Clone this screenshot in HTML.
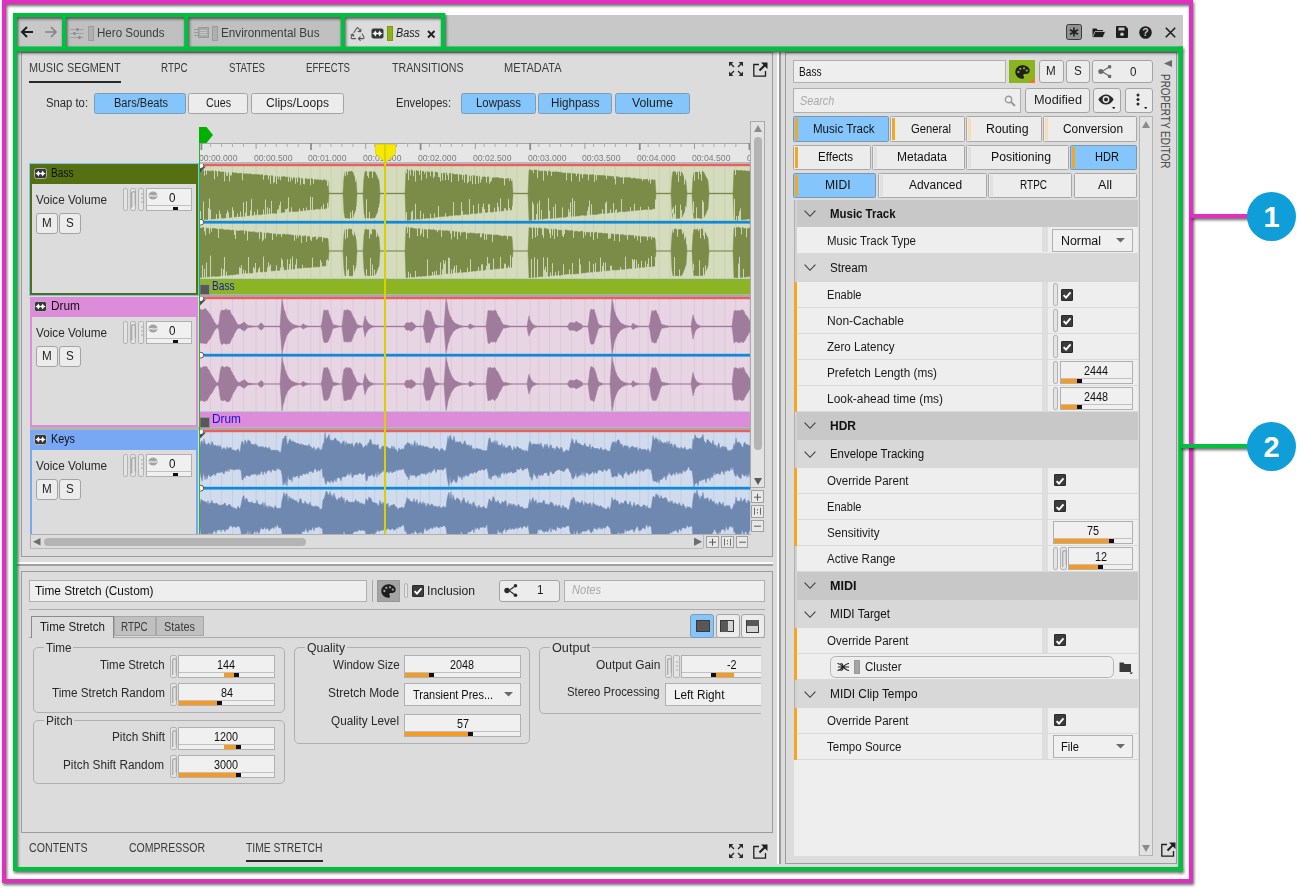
<!DOCTYPE html>
<html><head><meta charset="utf-8"><title>Music Segment Editor</title>
<style>
html,body{margin:0;padding:0;background:#fff;}
body{width:1297px;height:889px;position:relative;overflow:hidden;font-family:"Liberation Sans",sans-serif;}
.a{position:absolute;display:block;}
.t{white-space:nowrap;}
</style></head><body>
<div class="a" style="left:13px;top:15px;width:1170px;height:856px;background:#dcdcdc;"></div>
<div class="a" style="left:13px;top:15px;width:1170px;height:32px;background:#c8c8c8;"></div>
<div class="a" style="left:66px;top:17px;width:120px;height:30px;background:#c0c0c0;"></div>
<div class="a" style="left:188px;top:17px;width:154px;height:30px;background:#c0c0c0;"></div>
<div class="a" style="left:345px;top:17px;width:97px;height:30px;background:#dcdcdc;"></div>
<svg class="a" style="left:20px;top:25px;" width="14" height="14" viewBox="0 0 14 14"><path d="M13 7H2.5M7 2L2 7l5 5" fill="none" stroke="#1e1e1e" stroke-width="2"/></svg>
<svg class="a" style="left:44px;top:25px;" width="14" height="14" viewBox="0 0 14 14"><path d="M1 7h10.5M7 2l5 5-5 5" fill="none" stroke="#848484" stroke-width="1.6"/></svg>
<svg class="a" style="left:70px;top:26px;" width="14" height="14" viewBox="0 0 14 14"><g stroke="#a0a0a0" stroke-width="1" fill="#8a8a8a"><path d="M0.5 3.5h13M0.5 7.5h13M0.5 11.5h13" fill="none"/><rect x="6.5" y="2" width="2" height="3" stroke="none"/><rect x="3.5" y="6" width="2" height="3" stroke="none"/><rect x="8.5" y="10" width="2" height="3" stroke="none"/></g></svg>
<div class="a" style="left:88px;top:26px;width:6px;height:15px;background:#b0b0b0;border:1px solid #9c9c9c;box-sizing:border-box;"></div>
<div class="a t" style="left:97.00px;top:25.04px;font-size:12px;line-height:16px;color:#3c3c3c;transform:scaleX(0.9639);transform-origin:0 50%;">Hero Sounds</div>
<svg class="a" style="left:194px;top:26px;" width="15" height="13" viewBox="0 0 15 13"><g stroke="#9a9a9a" fill="none"><path d="M0 3.5h4M0 6.5h4M0 9.5h4" stroke-width="1"/><rect x="4.5" y="1.5" width="10" height="10" fill="#a8a8a8"/><path d="M6 4.5h7M6 6.5h7M6 8.5h7" stroke="#c8c8c8"/></g></svg>
<div class="a" style="left:212px;top:26px;width:6px;height:15px;background:#b0b0b0;border:1px solid #9c9c9c;box-sizing:border-box;"></div>
<div class="a t" style="left:221.00px;top:25.04px;font-size:12px;line-height:16px;color:#3c3c3c;transform:scaleX(0.9781);transform-origin:0 50%;">Environmental Bus</div>
<svg class="a" style="left:349.5px;top:26px;" width="16" height="15" viewBox="0 0 16 15"><g fill="none" stroke="#555" stroke-width="1.05" stroke-linecap="round" stroke-linejoin="round"><path d="M4 6.5L6.6 2.2Q7.5 1 8.4 2.2L10.6 5.6M10.9 3L10.7 5.8 8 5.5"/><path d="M12.2 8L13.9 11Q14.4 12.6 12.8 12.6H8.4M10.2 10.8L8.3 12.6l1.900 1.800"/><path d="M5.500 12.600H2.200Q0.600 12.600 1.300 11L2.900 8.200M0.800 8.900L3 8l0.900 2.200"/></g></svg>
<svg class="a" style="left:370.5px;top:28px;" width="13" height="11" viewBox="0 0 13 11"><rect x="0.500" y="0.500" width="12" height="10" rx="2" fill="#383838"/><path d="M4.3 2.5Q4.96 4.84 7.3 5.5Q4.96 6.16 4.3 8.5Q3.6399999999999997 6.16 1.2999999999999998 5.5Q3.6399999999999997 4.84 4.3 2.5ZM8.7 2.5Q9.36 4.84 11.7 5.5Q9.36 6.16 8.7 8.5Q8.04 6.16 5.699999999999999 5.5Q8.04 4.84 8.7 2.5Z" fill="#fff"/><rect x="3.500" y="5" width="6" height="1" fill="#fff"/></svg>
<div class="a" style="left:387px;top:26px;width:6px;height:15px;background:#8cb414;border:1px solid #7c9c10;box-sizing:border-box;"></div>
<div class="a t" style="left:396.00px;top:25.04px;font-size:12px;line-height:16px;color:#1e1e1e;transform:scaleX(0.8998);transform-origin:0 50%;font-style:italic;">Bass</div>
<svg class="a" style="left:427px;top:29.5px;" width="9" height="9" viewBox="0 0 9 9"><path d="M1 1l6.500 6.500M7.500 1l-6.500 6.500" stroke="#1e1e1e" stroke-width="1.800" fill="none"/></svg>
<div class="a" style="left:1066px;top:24px;width:16px;height:16px;background:#929292;border:1px solid #3a3a3a;box-sizing:border-box;border-radius:2.5px;"></div>
<svg class="a" style="left:1068px;top:26px;" width="12" height="12" viewBox="0 0 12 12"><path d="M6 1.5v9M2 3.8l8 4.4M10 3.8l-8 4.4" stroke="#1e1e1e" stroke-width="1.6" fill="none"/></svg>
<svg class="a" style="left:1091.5px;top:26.5px;" width="14" height="12" viewBox="0 0 14 12"><path d="M0.5 10.5V1.5h4l1.2 1.5h5.3v2" fill="#1e1e1e"/><path d="M0.5 10.5l2.5-6h10.5l-2.5 6z" fill="#1e1e1e" stroke="#c8c8c8" stroke-width="0.8"/></svg>
<svg class="a" style="left:1116px;top:26px;" width="12" height="12" viewBox="0 0 12 12"><path d="M0 1a1 1 0 011-1h8.5L12 2.5V11a1 1 0 01-1 1H1a1 1 0 01-1-1z" fill="#1e1e1e"/><rect x="2.5" y="1.5" width="6" height="3" fill="#c8c8c8"/><circle cx="6" cy="8.3" r="1.8" fill="#c8c8c8"/></svg>
<svg class="a" style="left:1139px;top:25.5px;" width="13" height="13" viewBox="0 0 13 13"><circle cx="6.5" cy="6.5" r="6.3" fill="#1e1e1e"/><text x="6.5" y="10.3" font-size="10.5" font-weight="bold" text-anchor="middle" fill="#c8c8c8" font-family="Liberation Sans, sans-serif">?</text></svg>
<svg class="a" style="left:1165px;top:26.5px;" width="11" height="11" viewBox="0 0 11 11"><path d="M0.8 0.8l9.4 9.4M10.2 0.8l-9.4 9.4" stroke="#1e1e1e" stroke-width="1.6" fill="none"/></svg>
<div class="a" style="left:21px;top:52px;width:752px;height:505px;border:1px solid #9c9c9c;box-sizing:border-box;"></div>
<div class="a t" style="left:28.80px;top:60.04px;font-size:12px;line-height:16px;color:#3a3a3a;transform:scaleX(0.9030);transform-origin:0 50%;">MUSIC SEGMENT</div>
<div class="a t" style="left:161.00px;top:60.04px;font-size:12px;line-height:16px;color:#3a3a3a;transform:scaleX(0.8166);transform-origin:0 50%;">RTPC</div>
<div class="a t" style="left:229.30px;top:60.04px;font-size:12px;line-height:16px;color:#3a3a3a;transform:scaleX(0.8022);transform-origin:0 50%;">STATES</div>
<div class="a t" style="left:306.20px;top:60.04px;font-size:12px;line-height:16px;color:#3a3a3a;transform:scaleX(0.8050);transform-origin:0 50%;">EFFECTS</div>
<div class="a t" style="left:392.00px;top:60.04px;font-size:12px;line-height:16px;color:#3a3a3a;transform:scaleX(0.8865);transform-origin:0 50%;">TRANSITIONS</div>
<div class="a t" style="left:504.00px;top:60.04px;font-size:12px;line-height:16px;color:#3a3a3a;transform:scaleX(0.9177);transform-origin:0 50%;">METADATA</div>
<div class="a" style="left:29px;top:80.5px;width:92px;height:2px;background:#2a2a2a;"></div>
<svg class="a" style="left:729px;top:62px;" width="14" height="14" viewBox="0 0 14 14"><g stroke="#2a2a2a" stroke-width="1.4" fill="none"><path d="M1 1l4 4M13 1l-4 4M1 13l4-4M13 13l-4-4"/></g><path d="M0 0h4.5L0 4.5zM14 0H9.5L14 4.5zM0 14h4.5L0 9.5zM14 14H9.5L14 9.5z" fill="#2a2a2a"/></svg>
<svg class="a" style="left:753px;top:61.5px;" width="15" height="15" viewBox="0 0 15 15"><path d="M6 2.500H0.800v11.700h11.700V9" fill="none" stroke="#1e1e1e" stroke-width="1.300"/><path d="M6.500 8.500L13 2" stroke="#1e1e1e" stroke-width="2" fill="none"/><path d="M8 0.500h6.500V7z" fill="#1e1e1e"/></svg>
<div class="a t" style="left:46.40px;top:95.04px;font-size:12px;line-height:16px;color:#2a2a2a;transform:scaleX(0.9402);transform-origin:0 50%;">Snap to:</div>
<div class="a" style="left:94px;top:93px;width:92px;height:21px;background:#84c6fc;border:1px solid #7e9cb8;box-sizing:border-box;border-radius:2.5px;"></div>
<div class="a t" style="left:113.50px;top:95.04px;font-size:12px;line-height:16px;color:#1e1e1e;transform:scaleX(0.9204);transform-origin:0 50%;">Bars/Beats</div>
<div class="a" style="left:188px;top:93px;width:60px;height:21px;background:#ececec;border:1px solid #a4a4a4;box-sizing:border-box;border-radius:2.5px;"></div>
<div class="a t" style="left:206.00px;top:95.04px;font-size:12px;line-height:16px;color:#1e1e1e;transform:scaleX(0.8924);transform-origin:0 50%;">Cues</div>
<div class="a" style="left:251px;top:93px;width:93px;height:21px;background:#ececec;border:1px solid #a4a4a4;box-sizing:border-box;border-radius:2.5px;"></div>
<div class="a t" style="left:266.00px;top:95.04px;font-size:12px;line-height:16px;color:#1e1e1e;transform:scaleX(1.0047);transform-origin:0 50%;">Clips/Loops</div>
<div class="a t" style="left:395.50px;top:95.04px;font-size:12px;line-height:16px;color:#2a2a2a;transform:scaleX(0.9266);transform-origin:0 50%;">Envelopes:</div>
<div class="a" style="left:461px;top:93px;width:75px;height:21px;background:#84c6fc;border:1px solid #7e9cb8;box-sizing:border-box;border-radius:2.5px;"></div>
<div class="a t" style="left:476.00px;top:95.04px;font-size:12px;line-height:16px;color:#1e1e1e;transform:scaleX(0.9502);transform-origin:0 50%;">Lowpass</div>
<div class="a" style="left:538px;top:93px;width:74px;height:21px;background:#84c6fc;border:1px solid #7e9cb8;box-sizing:border-box;border-radius:2.5px;"></div>
<div class="a t" style="left:551.25px;top:95.04px;font-size:12px;line-height:16px;color:#1e1e1e;transform:scaleX(0.9694);transform-origin:0 50%;">Highpass</div>
<div class="a" style="left:615px;top:93px;width:75px;height:21px;background:#84c6fc;border:1px solid #7e9cb8;box-sizing:border-box;border-radius:2.5px;"></div>
<div class="a t" style="left:632.15px;top:95.04px;font-size:12px;line-height:16px;color:#1e1e1e;transform:scaleX(1.0242);transform-origin:0 50%;">Volume</div>
<div class="a" style="left:199px;top:143px;width:551.5px;height:20px;background:#e6e6e6;"></div>
<div class="a" style="left:199px;top:143px;width:551.5px;height:1px;background:#a6a6a6;"></div>
<div class="a" style="left:199px;top:162px;width:551.5px;height:1.5px;background:#b8b8b8;"></div>
<svg class="a" style="left:199px;top:143px;" width="551.5" height="8" viewBox="0 0 551.5 8"><rect x="11.1" y="0" width="1" height="4" fill="#b0b0b0"/><rect x="22.1" y="0" width="1" height="4" fill="#b0b0b0"/><rect x="33.0" y="0" width="1" height="4" fill="#b0b0b0"/><rect x="44.0" y="0" width="1" height="4" fill="#b0b0b0"/><rect x="65.8" y="0" width="1" height="4" fill="#b0b0b0"/><rect x="76.8" y="0" width="1" height="4" fill="#b0b0b0"/><rect x="87.7" y="0" width="1" height="4" fill="#b0b0b0"/><rect x="98.7" y="0" width="1" height="4" fill="#b0b0b0"/><rect x="120.5" y="0" width="1" height="4" fill="#b0b0b0"/><rect x="131.5" y="0" width="1" height="4" fill="#b0b0b0"/><rect x="142.4" y="0" width="1" height="4" fill="#b0b0b0"/><rect x="153.4" y="0" width="1" height="4" fill="#b0b0b0"/><rect x="175.2" y="0" width="1" height="4" fill="#b0b0b0"/><rect x="186.2" y="0" width="1" height="4" fill="#b0b0b0"/><rect x="197.1" y="0" width="1" height="4" fill="#b0b0b0"/><rect x="208.1" y="0" width="1" height="4" fill="#b0b0b0"/><rect x="229.9" y="0" width="1" height="4" fill="#b0b0b0"/><rect x="240.9" y="0" width="1" height="4" fill="#b0b0b0"/><rect x="251.8" y="0" width="1" height="4" fill="#b0b0b0"/><rect x="262.8" y="0" width="1" height="4" fill="#b0b0b0"/><rect x="284.6" y="0" width="1" height="4" fill="#b0b0b0"/><rect x="295.6" y="0" width="1" height="4" fill="#b0b0b0"/><rect x="306.5" y="0" width="1" height="4" fill="#b0b0b0"/><rect x="317.5" y="0" width="1" height="4" fill="#b0b0b0"/><rect x="339.3" y="0" width="1" height="4" fill="#b0b0b0"/><rect x="350.3" y="0" width="1" height="4" fill="#b0b0b0"/><rect x="361.2" y="0" width="1" height="4" fill="#b0b0b0"/><rect x="372.2" y="0" width="1" height="4" fill="#b0b0b0"/><rect x="394.0" y="0" width="1" height="4" fill="#b0b0b0"/><rect x="405.0" y="0" width="1" height="4" fill="#b0b0b0"/><rect x="415.9" y="0" width="1" height="4" fill="#b0b0b0"/><rect x="426.9" y="0" width="1" height="4" fill="#b0b0b0"/><rect x="448.7" y="0" width="1" height="4" fill="#b0b0b0"/><rect x="459.7" y="0" width="1" height="4" fill="#b0b0b0"/><rect x="470.6" y="0" width="1" height="4" fill="#b0b0b0"/><rect x="481.6" y="0" width="1" height="4" fill="#b0b0b0"/><rect x="503.4" y="0" width="1" height="4" fill="#b0b0b0"/><rect x="514.4" y="0" width="1" height="4" fill="#b0b0b0"/><rect x="525.3" y="0" width="1" height="4" fill="#b0b0b0"/><rect x="536.3" y="0" width="1" height="4" fill="#b0b0b0"/><rect x="1.5" y="0" width="1.8" height="7" fill="#8c8c8c"/><rect x="56.6" y="0" width="1" height="6" fill="#9c9c9c"/><rect x="111.1" y="0" width="1.8" height="7" fill="#8c8c8c"/><rect x="166.2" y="0" width="1" height="6" fill="#9c9c9c"/><rect x="220.7" y="0" width="1.8" height="7" fill="#8c8c8c"/><rect x="275.8" y="0" width="1" height="6" fill="#9c9c9c"/><rect x="330.3" y="0" width="1.8" height="7" fill="#8c8c8c"/><rect x="385.4" y="0" width="1" height="6" fill="#9c9c9c"/><rect x="439.9" y="0" width="1.8" height="7" fill="#8c8c8c"/><rect x="495.0" y="0" width="1" height="6" fill="#9c9c9c"/><rect x="549.5" y="0" width="1.8" height="7" fill="#8c8c8c"/></svg>
<div class="a" style="left:199px;top:150px;width:551.5px;height:13px;overflow:hidden">
<div class="a t" style="left:-0.3px;top:1.6px;font-size:9px;line-height:12px;color:#7c7c7c;transform:scaleX(0.9600);transform-origin:0 50%">00:00.000</div>
<div class="a t" style="left:54.5px;top:1.6px;font-size:9px;line-height:12px;color:#7c7c7c;transform:scaleX(0.9600);transform-origin:0 50%">00:00.500</div>
<div class="a t" style="left:109.3px;top:1.6px;font-size:9px;line-height:12px;color:#7c7c7c;transform:scaleX(0.9600);transform-origin:0 50%">00:01.000</div>
<div class="a t" style="left:164.1px;top:1.6px;font-size:9px;line-height:12px;color:#7c7c7c;transform:scaleX(0.9600);transform-origin:0 50%">00:01.500</div>
<div class="a t" style="left:218.9px;top:1.6px;font-size:9px;line-height:12px;color:#7c7c7c;transform:scaleX(0.9600);transform-origin:0 50%">00:02.000</div>
<div class="a t" style="left:273.7px;top:1.6px;font-size:9px;line-height:12px;color:#7c7c7c;transform:scaleX(0.9600);transform-origin:0 50%">00:02.500</div>
<div class="a t" style="left:328.5px;top:1.6px;font-size:9px;line-height:12px;color:#7c7c7c;transform:scaleX(0.9600);transform-origin:0 50%">00:03.000</div>
<div class="a t" style="left:383.3px;top:1.6px;font-size:9px;line-height:12px;color:#7c7c7c;transform:scaleX(0.9600);transform-origin:0 50%">00:03.500</div>
<div class="a t" style="left:438.1px;top:1.6px;font-size:9px;line-height:12px;color:#7c7c7c;transform:scaleX(0.9600);transform-origin:0 50%">00:04.000</div>
<div class="a t" style="left:492.9px;top:1.6px;font-size:9px;line-height:12px;color:#7c7c7c;transform:scaleX(0.9600);transform-origin:0 50%">00:04.500</div>
<div class="a t" style="left:547.7px;top:1.6px;font-size:9px;line-height:12px;color:#7c7c7c;transform:scaleX(0.9600);transform-origin:0 50%">00:05.000</div>
</div>
<div class="a" style="left:0;top:0;width:1297px;height:534px;overflow:hidden">
<div class="a" style="left:29px;top:163.2px;width:170.3px;height:132.5px;background:#7cc4f4;"></div>
<div class="a" style="left:30px;top:164px;width:168px;height:130.5px;background:#566f10;"></div>
<div class="a" style="left:32px;top:184px;width:164px;height:108.5px;background:#dcdcdc;"></div>
<div class="a" style="left:30px;top:164px;width:168px;height:20px;background:#566f10;"></div>
<svg class="a" style="left:34px;top:167.8px;" width="13" height="11" viewBox="0 0 13 11"><rect x="0.500" y="0.500" width="12" height="10" rx="2" fill="#383838" stroke="#c8c8c8" stroke-width="0.800"/><path d="M4.3 2.5Q4.96 4.84 7.3 5.5Q4.96 6.16 4.3 8.5Q3.6399999999999997 6.16 1.2999999999999998 5.5Q3.6399999999999997 4.84 4.3 2.5ZM8.7 2.5Q9.36 4.84 11.7 5.5Q9.36 6.16 8.7 8.5Q8.04 6.16 5.699999999999999 5.5Q8.04 4.84 8.7 2.5Z" fill="#fff"/><rect x="3.500" y="5" width="6" height="1" fill="#fff"/></svg>
<div class="a t" style="left:51.40px;top:165.04px;font-size:12px;line-height:16px;color:#101010;transform:scaleX(0.8436);transform-origin:0 50%;">Bass</div>
<div class="a t" style="left:36.00px;top:192.04px;font-size:12px;line-height:16px;color:#2a2a2a;transform:scaleX(0.9764);transform-origin:0 50%;">Voice Volume</div>
<div class="a" style="left:123px;top:188px;width:5px;height:23px;background:#e4e4e4;border:1px solid #b4b4b4;box-sizing:border-box;border-radius:2px;"></div>
<div class="a" style="left:130px;top:188px;width:6px;height:23px;background:#e4e4e4;border:1px solid #b4b4b4;box-sizing:border-box;border-radius:2px;"></div>
<svg class="a" style="left:131px;top:191.3px;" width="5" height="16.4" viewBox="0 0 5 16.4"><path d="M0.7 16.4V2.5a1.8 1.8 0 013.6 0V14.399999999999999" fill="none" stroke="#a8a8a8" stroke-width="1.3"/></svg>
<div class="a" style="left:138px;top:188px;width:6px;height:23px;background:#e4e4e4;border:1px solid #b4b4b4;box-sizing:border-box;border-radius:2px;"></div>
<svg class="a" style="left:140.5px;top:193.3px;" width="2" height="12" viewBox="0 0 2 12"><path d="M0 1h2M0 5h2M0 9h2" stroke="#a8a8a8" stroke-width="1"/></svg>
<div class="a" style="left:146px;top:188px;width:46px;height:23px;background:#f0f0f0;border:1px solid #b0b0b0;box-sizing:border-box;"></div>
<div class="a" style="left:146.5px;top:205.3px;width:45px;height:1px;background:#c0c0c0;"></div>
<svg class="a" style="left:148px;top:191.3px;" width="10" height="9" viewBox="0 0 10 9"><ellipse cx="5" cy="4.5" rx="4.6" ry="4" fill="#a4a4a4"/><path d="M0.5 5.5C3 3 6 7 9.5 4" stroke="#e8e8e8" stroke-width="1.3" fill="none"/></svg>
<div class="a t" style="left:168.76px;top:190.04px;font-size:12px;line-height:16px;color:#101010;transform:scaleX(0.9700);transform-origin:0 50%;">0</div>
<div class="a" style="left:173px;top:206.6px;width:5px;height:3.7px;background:#101010;"></div>
<div class="a" style="left:36px;top:213px;width:22px;height:21px;background:#ececec;border:1px solid #a4a4a4;box-sizing:border-box;border-radius:3px;"></div>
<div class="a t" style="left:42.40px;top:215.04px;font-size:12px;line-height:16px;color:#1e1e1e;transform:scaleX(0.9700);transform-origin:0 50%;">M</div>
<div class="a" style="left:59px;top:213px;width:22px;height:21px;background:#ececec;border:1px solid #a4a4a4;box-sizing:border-box;border-radius:3px;"></div>
<div class="a t" style="left:66.42px;top:215.04px;font-size:12px;line-height:16px;color:#1e1e1e;transform:scaleX(0.9700);transform-origin:0 50%;">S</div>
<div class="a" style="left:30px;top:297px;width:168px;height:130px;background:#dc8cd8;"></div>
<div class="a" style="left:32px;top:317px;width:164px;height:108px;background:#dcdcdc;"></div>
<div class="a" style="left:30px;top:297px;width:168px;height:20px;background:#dc8cd8;"></div>
<svg class="a" style="left:34px;top:300.8px;" width="13" height="11" viewBox="0 0 13 11"><rect x="0.500" y="0.500" width="12" height="10" rx="2" fill="#383838" stroke="#c8c8c8" stroke-width="0.800"/><path d="M4.3 2.5Q4.96 4.84 7.3 5.5Q4.96 6.16 4.3 8.5Q3.6399999999999997 6.16 1.2999999999999998 5.5Q3.6399999999999997 4.84 4.3 2.5ZM8.7 2.5Q9.36 4.84 11.7 5.5Q9.36 6.16 8.7 8.5Q8.04 6.16 5.699999999999999 5.5Q8.04 4.84 8.7 2.5Z" fill="#fff"/><rect x="3.500" y="5" width="6" height="1" fill="#fff"/></svg>
<div class="a t" style="left:51.40px;top:298.04px;font-size:12px;line-height:16px;color:#101010;transform:scaleX(0.9883);transform-origin:0 50%;">Drum</div>
<div class="a t" style="left:36.00px;top:325.04px;font-size:12px;line-height:16px;color:#2a2a2a;transform:scaleX(0.9764);transform-origin:0 50%;">Voice Volume</div>
<div class="a" style="left:123px;top:321px;width:5px;height:23px;background:#e4e4e4;border:1px solid #b4b4b4;box-sizing:border-box;border-radius:2px;"></div>
<div class="a" style="left:130px;top:321px;width:6px;height:23px;background:#e4e4e4;border:1px solid #b4b4b4;box-sizing:border-box;border-radius:2px;"></div>
<svg class="a" style="left:131px;top:324.3px;" width="5" height="16.4" viewBox="0 0 5 16.4"><path d="M0.7 16.4V2.5a1.8 1.8 0 013.6 0V14.399999999999999" fill="none" stroke="#a8a8a8" stroke-width="1.3"/></svg>
<div class="a" style="left:138px;top:321px;width:6px;height:23px;background:#e4e4e4;border:1px solid #b4b4b4;box-sizing:border-box;border-radius:2px;"></div>
<svg class="a" style="left:140.5px;top:326.3px;" width="2" height="12" viewBox="0 0 2 12"><path d="M0 1h2M0 5h2M0 9h2" stroke="#a8a8a8" stroke-width="1"/></svg>
<div class="a" style="left:146px;top:321px;width:46px;height:23px;background:#f0f0f0;border:1px solid #b0b0b0;box-sizing:border-box;"></div>
<div class="a" style="left:146.5px;top:338.3px;width:45px;height:1px;background:#c0c0c0;"></div>
<svg class="a" style="left:148px;top:324.3px;" width="10" height="9" viewBox="0 0 10 9"><ellipse cx="5" cy="4.5" rx="4.6" ry="4" fill="#a4a4a4"/><path d="M0.5 5.5C3 3 6 7 9.5 4" stroke="#e8e8e8" stroke-width="1.3" fill="none"/></svg>
<div class="a t" style="left:168.76px;top:323.04px;font-size:12px;line-height:16px;color:#101010;transform:scaleX(0.9700);transform-origin:0 50%;">0</div>
<div class="a" style="left:173px;top:339.6px;width:5px;height:3.7px;background:#101010;"></div>
<div class="a" style="left:36px;top:346px;width:22px;height:21px;background:#ececec;border:1px solid #a4a4a4;box-sizing:border-box;border-radius:3px;"></div>
<div class="a t" style="left:42.40px;top:348.04px;font-size:12px;line-height:16px;color:#1e1e1e;transform:scaleX(0.9700);transform-origin:0 50%;">M</div>
<div class="a" style="left:59px;top:346px;width:22px;height:21px;background:#ececec;border:1px solid #a4a4a4;box-sizing:border-box;border-radius:3px;"></div>
<div class="a t" style="left:66.42px;top:348.04px;font-size:12px;line-height:16px;color:#1e1e1e;transform:scaleX(0.9700);transform-origin:0 50%;">S</div>
<div class="a" style="left:30px;top:430px;width:168px;height:110px;background:#78a8f4;"></div>
<div class="a" style="left:32px;top:450px;width:164px;height:90px;background:#dcdcdc;"></div>
<div class="a" style="left:30px;top:430px;width:168px;height:20px;background:#78a8f4;"></div>
<svg class="a" style="left:34px;top:433.8px;" width="13" height="11" viewBox="0 0 13 11"><rect x="0.500" y="0.500" width="12" height="10" rx="2" fill="#383838" stroke="#c8c8c8" stroke-width="0.800"/><path d="M4.3 2.5Q4.96 4.84 7.3 5.5Q4.96 6.16 4.3 8.5Q3.6399999999999997 6.16 1.2999999999999998 5.5Q3.6399999999999997 4.84 4.3 2.5ZM8.7 2.5Q9.36 4.84 11.7 5.5Q9.36 6.16 8.7 8.5Q8.04 6.16 5.699999999999999 5.5Q8.04 4.84 8.7 2.5Z" fill="#fff"/><rect x="3.500" y="5" width="6" height="1" fill="#fff"/></svg>
<div class="a t" style="left:51.40px;top:431.04px;font-size:12px;line-height:16px;color:#101010;transform:scaleX(0.8998);transform-origin:0 50%;">Keys</div>
<div class="a t" style="left:36.00px;top:458.04px;font-size:12px;line-height:16px;color:#2a2a2a;transform:scaleX(0.9764);transform-origin:0 50%;">Voice Volume</div>
<div class="a" style="left:123px;top:454px;width:5px;height:23px;background:#e4e4e4;border:1px solid #b4b4b4;box-sizing:border-box;border-radius:2px;"></div>
<div class="a" style="left:130px;top:454px;width:6px;height:23px;background:#e4e4e4;border:1px solid #b4b4b4;box-sizing:border-box;border-radius:2px;"></div>
<svg class="a" style="left:131px;top:457.3px;" width="5" height="16.4" viewBox="0 0 5 16.4"><path d="M0.7 16.4V2.5a1.8 1.8 0 013.6 0V14.399999999999999" fill="none" stroke="#a8a8a8" stroke-width="1.3"/></svg>
<div class="a" style="left:138px;top:454px;width:6px;height:23px;background:#e4e4e4;border:1px solid #b4b4b4;box-sizing:border-box;border-radius:2px;"></div>
<svg class="a" style="left:140.5px;top:459.3px;" width="2" height="12" viewBox="0 0 2 12"><path d="M0 1h2M0 5h2M0 9h2" stroke="#a8a8a8" stroke-width="1"/></svg>
<div class="a" style="left:146px;top:454px;width:46px;height:23px;background:#f0f0f0;border:1px solid #b0b0b0;box-sizing:border-box;"></div>
<div class="a" style="left:146.5px;top:471.3px;width:45px;height:1px;background:#c0c0c0;"></div>
<svg class="a" style="left:148px;top:457.3px;" width="10" height="9" viewBox="0 0 10 9"><ellipse cx="5" cy="4.5" rx="4.6" ry="4" fill="#a4a4a4"/><path d="M0.5 5.5C3 3 6 7 9.5 4" stroke="#e8e8e8" stroke-width="1.3" fill="none"/></svg>
<div class="a t" style="left:168.76px;top:456.04px;font-size:12px;line-height:16px;color:#101010;transform:scaleX(0.9700);transform-origin:0 50%;">0</div>
<div class="a" style="left:173px;top:472.6px;width:5px;height:3.7px;background:#101010;"></div>
<div class="a" style="left:36px;top:479px;width:22px;height:21px;background:#ececec;border:1px solid #a4a4a4;box-sizing:border-box;border-radius:3px;"></div>
<div class="a t" style="left:42.40px;top:481.04px;font-size:12px;line-height:16px;color:#1e1e1e;transform:scaleX(0.9700);transform-origin:0 50%;">M</div>
<div class="a" style="left:59px;top:479px;width:22px;height:21px;background:#ececec;border:1px solid #a4a4a4;box-sizing:border-box;border-radius:3px;"></div>
<div class="a t" style="left:66.42px;top:481.04px;font-size:12px;line-height:16px;color:#1e1e1e;transform:scaleX(0.9700);transform-origin:0 50%;">S</div>
<div class="a" style="left:30px;top:427px;width:168.5px;height:3px;background:#b4b4b4;"></div>
</div>
<svg class="a" style="left:199px;top:164px" width="551.5" height="133" viewBox="0 0 551.5 133"><g transform="translate(0,2)"><rect x="0" y="0" width="551.5" height="112.5" fill="#d5dcbe"/><path d="M11.6 0V112.5M22.6 0V112.5M33.5 0V112.5M44.5 0V112.5M57.1 0V112.5M66.3 0V112.5M77.3 0V112.5M88.2 0V112.5M99.2 0V112.5M111.9 0V112.5M121.0 0V112.5M132.0 0V112.5M142.9 0V112.5M153.9 0V112.5M166.7 0V112.5M175.7 0V112.5M186.7 0V112.5M197.6 0V112.5M208.6 0V112.5M221.5 0V112.5M230.4 0V112.5M241.4 0V112.5M252.3 0V112.5M263.3 0V112.5M276.3 0V112.5M285.1 0V112.5M296.1 0V112.5M307.0 0V112.5M318.0 0V112.5M331.1 0V112.5M339.8 0V112.5M350.8 0V112.5M361.7 0V112.5M372.7 0V112.5M385.9 0V112.5M394.5 0V112.5M405.5 0V112.5M416.4 0V112.5M427.4 0V112.5M440.7 0V112.5M449.2 0V112.5M460.2 0V112.5M471.1 0V112.5M482.1 0V112.5M495.5 0V112.5M503.9 0V112.5M514.9 0V112.5M525.8 0V112.5M536.8 0V112.5M550.3 0V112.5" stroke="#c9d0b0" stroke-width="1" fill="none"/><path d="M0,4.2 1,4.2 2,4.7 3,4.7 4,4.2 5,4.6 6,4.9 7,4.5 8,4.7 9,5.0 10,4.8 11,5.3 12,5.5 13,4.6 14,5.0 15,5.2 16,4.7 17,5.2 18,6.0 19,5.1 20,5.1 21,5.9 22,6.1 23,6.1 24,5.9 25,5.9 26,5.6 27,6.7 28,6.5 29,6.9 30,6.6 31,6.5 32,6.9 33,6.6 34,6.2 35,7.2 36,7.1 37,6.6 38,7.4 39,7.4 40,7.3 41,7.5 42,7.3 43,7.3 44,7.2 45,7.8 46,7.8 47,8.2 48,7.3 49,8.4 50,8.0 51,7.7 52,8.1 53,8.5 54,8.5 55,8.4 56,8.2 57,8.6 58,8.4 59,8.5 60,8.4 61,8.9 62,9.1 63,8.6 64,8.8 65,9.8 66,9.8 67,8.9 68,9.5 69,9.6 70,10.3 71,9.6 72,9.3 73,10.2 74,9.6 75,9.8 76,10.7 77,10.7 78,10.5 79,10.4 80,10.7 81,11.0 82,10.6 83,11.2 84,10.4 85,10.3 86,10.8 87,11.6 88,10.7 89,11.5 90,10.7 91,11.6 92,11.5 93,12.0 94,12.0 95,11.5 96,12.0 97,12.4 98,11.7 99,11.6 100,11.6 101,12.6 102,12.1 103,13.0 104,12.4 105,12.8 106,12.6 107,12.4 108,13.1 109,13.4 110,12.7 111,13.1 112,12.6 113,12.6 114,13.6 115,13.8 116,13.2 117,14.1 118,13.8 119,13.3 120,14.2 121,14.1 122,13.8 123,14.5 124,14.4 125,13.6 126,13.7 127,14.9 128,14.2 129,14.7 130,27.1 131,27.1 132,27.1 133,27.1 134,27.1 135,27.1 136,27.1 137,27.1 138,27.1 139,27.1 140,27.1 141,27.1 142,27.1 143,27.1 144,27.1 145,11.3 146,5.9 147,5.7 148,5.8 149,6.2 150,5.3 151,5.7 152,5.2 153,5.3 154,6.4 155,9.5 156,11.5 157,13.6 158,27.1 159,27.1 160,27.1 161,27.1 162,27.1 163,27.1 164,27.1 165,11.4 166,5.5 167,5.7 168,5.6 169,5.5 170,5.9 171,5.8 172,5.8 173,5.5 174,5.8 175,6.1 176,5.8 177,8.1 178,9.8 179,12.4 180,14.3 181,27.1 182,27.1 183,27.1 184,27.1 185,27.1 186,27.1 187,27.1 188,27.1 189,27.1 190,27.1 191,27.1 192,27.1 193,27.1 194,27.1 195,27.1 196,27.1 197,27.1 198,27.1 199,27.1 200,27.1 201,27.1 202,27.1 203,27.1 204,27.1 205,27.1 206,27.1 207,4.3 208,3.6 209,3.6 210,4.8 211,4.5 212,3.8 213,4.1 214,4.7 215,5.2 216,5.3 217,4.3 218,4.8 219,5.3 220,4.9 221,4.6 222,5.3 223,5.0 224,5.6 225,5.2 226,5.8 227,6.0 228,5.8 229,5.6 230,6.4 231,6.2 232,5.7 233,5.6 234,6.1 235,6.0 236,5.9 237,6.1 238,6.1 239,7.1 240,6.6 241,7.3 242,7.5 243,6.9 244,7.4 245,7.2 246,6.7 247,6.9 248,7.0 249,7.4 250,7.7 251,7.2 252,7.3 253,7.9 254,7.5 255,8.4 256,8.6 257,8.4 258,7.9 259,9.0 260,8.4 261,8.7 262,9.3 263,8.5 264,9.0 265,9.5 266,9.0 267,8.6 268,8.9 269,8.8 270,9.9 271,9.7 272,9.9 273,10.2 274,9.3 275,9.7 276,9.8 277,10.1 278,10.0 279,10.6 280,9.7 281,10.9 282,10.4 283,11.1 284,10.9 285,10.7 286,11.3 287,11.0 288,11.1 289,10.8 290,11.2 291,10.7 292,11.1 293,11.9 294,12.1 295,11.3 296,12.2 297,11.3 298,11.9 299,11.3 300,12.3 301,12.3 302,12.0 303,12.3 304,12.4 305,12.8 306,13.0 307,13.1 308,12.4 309,12.4 310,12.3 311,12.5 312,12.9 313,13.5 314,27.1 315,27.1 316,27.1 317,27.1 318,27.1 319,27.1 320,27.1 321,27.1 322,27.1 323,27.1 324,27.1 325,27.1 326,27.1 327,27.1 328,27.1 329,27.1 330,4.2 331,3.4 332,4.6 333,4.3 334,4.7 335,3.7 336,4.0 337,4.1 338,4.3 339,4.4 340,4.8 341,5.4 342,4.9 343,4.9 344,5.2 345,4.8 346,5.1 347,5.6 348,4.9 349,5.4 350,5.2 351,5.0 352,6.0 353,6.3 354,5.8 355,6.0 356,5.9 357,5.6 358,5.9 359,6.1 360,6.1 361,6.4 362,6.0 363,6.7 364,7.0 365,7.2 366,6.8 367,7.0 368,6.6 369,7.6 370,7.2 371,6.9 372,7.4 373,7.2 374,7.6 375,7.6 376,7.8 377,8.0 378,8.0 379,7.9 380,7.4 381,7.7 382,8.7 383,8.5 384,8.4 385,8.7 386,8.2 387,8.8 388,8.6 389,9.1 390,8.7 391,8.8 392,9.0 393,8.8 394,8.5 395,9.1 396,9.4 397,9.3 398,9.3 399,9.6 400,9.0 401,9.8 402,9.3 403,9.7 404,9.3 405,9.4 406,9.8 407,10.1 408,9.7 409,9.9 410,10.4 411,9.9 412,10.1 413,11.1 414,10.1 415,11.1 416,11.3 417,10.6 418,10.6 419,11.5 420,10.6 421,11.8 422,11.8 423,11.4 424,11.5 425,11.4 426,11.3 427,11.9 428,11.4 429,11.5 430,11.5 431,11.5 432,12.2 433,12.7 434,12.2 435,12.1 436,12.1 437,12.8 438,12.9 439,12.7 440,13.1 441,12.8 442,13.3 443,13.1 444,13.2 445,13.5 446,13.8 447,13.3 448,13.5 449,12.9 450,14.1 451,13.1 452,14.2 453,13.6 454,13.9 455,14.3 456,13.5 457,27.1 458,27.1 459,27.1 460,27.1 461,27.1 462,27.1 463,27.1 464,27.1 465,27.1 466,27.1 467,27.1 468,27.1 469,27.1 470,27.1 471,27.1 472,27.1 473,10.8 474,5.4 475,5.4 476,5.8 477,6.3 478,6.1 479,6.2 480,5.6 481,5.8 482,5.7 483,6.6 484,8.9 485,11.2 486,13.3 487,15.4 488,27.1 489,27.1 490,27.1 491,27.1 492,27.1 493,27.1 494,11.5 495,6.0 496,6.2 497,6.1 498,6.2 499,6.1 500,6.0 501,5.4 502,5.9 503,5.3 504,5.8 505,6.4 506,8.9 507,10.7 508,12.5 509,14.8 510,27.1 511,27.1 512,27.1 513,27.1 514,27.1 515,27.1 516,27.1 517,27.1 518,27.1 519,27.1 520,27.1 521,27.1 522,27.1 523,27.1 524,27.1 525,27.1 526,27.1 527,27.1 528,27.1 529,27.1 530,27.1 531,27.1 532,27.1 533,27.1 534,27.1 535,3.9 536,4.3 537,4.6 538,4.0 539,4.7 540,4.3 541,4.8 542,4.1 543,4.6 544,4.7 545,4.9 546,4.3 547,5.3 548,5.1 549,4.9 550,5.5 551,4.5 L551,53.2 550,52.9 549,52.9 548,53.3 547,53.4 546,53.8 545,53.5 544,54.0 543,53.7 542,53.6 541,54.0 540,54.0 539,54.4 538,54.2 537,53.9 536,54.1 535,54.4 534,27.9 533,27.9 532,27.9 531,27.9 530,27.9 529,27.9 528,27.9 527,27.9 526,27.9 525,27.9 524,27.9 523,27.9 522,27.9 521,27.9 520,27.9 519,27.9 518,27.9 517,27.9 516,27.9 515,27.9 514,27.9 513,27.9 512,27.9 511,27.9 510,27.9 509,42.8 508,44.9 507,47.2 506,49.4 505,51.4 504,52.6 503,52.6 502,52.5 501,52.3 500,52.0 499,51.9 498,52.0 497,52.2 496,51.9 495,52.7 494,46.0 493,27.9 492,27.9 491,27.9 490,27.9 489,27.9 488,27.9 487,41.7 486,43.9 485,46.9 484,49.1 483,51.6 482,52.0 481,52.4 480,52.2 479,52.2 478,52.6 477,52.5 476,52.0 475,52.0 474,52.6 473,46.3 472,27.9 471,27.9 470,27.9 469,27.9 468,27.9 467,27.9 466,27.9 465,27.9 464,27.9 463,27.9 462,27.9 461,27.9 460,27.9 459,27.9 458,27.9 457,27.9 456,43.1 455,42.5 454,42.7 453,43.4 452,43.5 451,43.5 450,43.3 449,43.2 448,43.8 447,43.6 446,43.3 445,43.8 444,43.5 443,44.0 442,44.2 441,44.1 440,44.3 439,44.0 438,44.2 437,44.6 436,44.4 435,45.0 434,44.6 433,45.1 432,45.0 431,45.3 430,45.0 429,45.3 428,45.2 427,45.1 426,45.9 425,45.7 424,45.8 423,45.4 422,45.7 421,45.6 420,45.9 419,46.3 418,46.4 417,46.1 416,46.8 415,46.3 414,46.6 413,46.6 412,46.9 411,46.5 410,46.9 409,47.1 408,47.3 407,47.5 406,47.4 405,47.5 404,47.6 403,47.3 402,47.4 401,47.7 400,48.0 399,48.0 398,48.4 397,48.4 396,48.6 395,48.7 394,48.3 393,48.2 392,48.6 391,48.8 390,48.9 389,48.9 388,49.3 387,49.3 386,49.5 385,49.6 384,49.1 383,49.2 382,49.2 381,49.4 380,50.1 379,50.0 378,49.8 377,50.0 376,50.4 375,50.1 374,50.4 373,50.4 372,50.3 371,51.0 370,50.9 369,50.6 368,50.6 367,51.3 366,51.2 365,51.2 364,51.5 363,51.3 362,51.2 361,51.6 360,51.7 359,51.4 358,51.9 357,52.1 356,52.2 355,52.3 354,52.3 353,52.2 352,52.5 351,52.7 350,52.2 349,52.4 348,52.5 347,52.6 346,52.6 345,52.7 344,53.0 343,53.4 342,53.2 341,53.1 340,53.4 339,53.8 338,53.7 337,53.6 336,53.6 335,53.5 334,54.3 333,54.3 332,54.1 331,54.3 330,54.5 329,27.9 328,27.9 327,27.9 326,27.9 325,27.9 324,27.9 323,27.9 322,27.9 321,27.9 320,27.9 319,27.9 318,27.9 317,27.9 316,27.9 315,27.9 314,27.9 313,43.7 312,43.7 311,44.2 310,44.5 309,44.5 308,43.9 307,44.6 306,44.8 305,44.7 304,44.9 303,45.1 302,45.0 301,45.3 300,45.3 299,45.0 298,45.5 297,45.6 296,45.4 295,45.6 294,46.0 293,46.1 292,46.1 291,45.7 290,45.9 289,46.0 288,46.4 287,46.2 286,46.6 285,46.3 284,46.7 283,46.4 282,47.2 281,46.6 280,47.1 279,47.4 278,47.2 277,47.6 276,47.8 275,47.5 274,47.4 273,47.5 272,47.7 271,48.2 270,48.0 269,48.5 268,48.5 267,48.1 266,48.1 265,48.7 264,48.3 263,48.7 262,49.0 261,49.1 260,48.9 259,49.4 258,48.9 257,49.1 256,49.2 255,49.5 254,49.8 253,49.4 252,49.6 251,49.6 250,49.8 249,50.5 248,50.2 247,50.3 246,50.3 245,50.4 244,50.5 243,50.4 242,50.5 241,50.8 240,50.8 239,51.0 238,50.9 237,51.3 236,51.5 235,51.9 234,52.0 233,51.8 232,51.9 231,52.1 230,52.3 229,52.3 228,52.0 227,52.0 226,52.8 225,52.3 224,52.5 223,53.0 222,53.2 221,53.3 220,53.4 219,52.7 218,53.0 217,53.2 216,53.1 215,53.5 214,54.0 213,54.0 212,53.5 211,53.7 210,54.2 209,54.0 208,54.5 207,54.5 206,27.9 205,27.9 204,27.9 203,27.9 202,27.9 201,27.9 200,27.9 199,27.9 198,27.9 197,27.9 196,27.9 195,27.9 194,27.9 193,27.9 192,27.9 191,27.9 190,27.9 189,27.9 188,27.9 187,27.9 186,27.9 185,27.9 184,27.9 183,27.9 182,27.9 181,27.9 180,42.6 179,45.2 178,47.0 177,49.3 176,51.7 175,51.9 174,52.1 173,52.1 172,52.1 171,52.6 170,52.1 169,52.0 168,52.1 167,51.9 166,52.4 165,46.2 164,27.9 163,27.9 162,27.9 161,27.9 160,27.9 159,27.9 158,27.9 157,43.1 156,45.8 155,48.2 154,51.9 153,52.1 152,52.0 151,52.2 150,52.5 149,52.1 148,52.0 147,52.1 146,52.0 145,46.3 144,27.9 143,27.9 142,27.9 141,27.9 140,27.9 139,27.9 138,27.9 137,27.9 136,27.9 135,27.9 134,27.9 133,27.9 132,27.9 131,27.9 130,27.9 129,42.0 128,42.1 127,42.6 126,42.8 125,42.9 124,42.5 123,43.0 122,42.8 121,42.9 120,43.4 119,42.7 118,43.0 117,42.9 116,43.2 115,43.8 114,43.7 113,43.7 112,43.4 111,43.9 110,44.1 109,43.7 108,44.4 107,44.4 106,44.3 105,44.6 104,44.7 103,44.9 102,44.8 101,44.7 100,45.1 99,45.3 98,45.4 97,45.5 96,45.7 95,45.6 94,45.6 93,45.5 92,45.4 91,45.7 90,45.9 89,45.9 88,46.4 87,46.3 86,46.2 85,46.2 84,46.3 83,46.8 82,46.4 81,46.6 80,46.6 79,46.7 78,47.0 77,47.4 76,47.5 75,46.9 74,47.2 73,47.2 72,47.2 71,47.7 70,47.8 69,47.7 68,48.3 67,47.8 66,48.3 65,48.3 64,48.0 63,48.2 62,48.8 61,48.7 60,48.6 59,48.8 58,48.6 57,48.8 56,48.8 55,48.8 54,49.6 53,49.3 52,49.2 51,49.3 50,50.0 49,49.3 48,49.9 47,50.2 46,50.4 45,50.3 44,50.4 43,50.5 42,50.7 41,50.2 40,50.9 39,50.5 38,50.8 37,51.1 36,50.7 35,51.2 34,51.4 33,50.9 32,51.6 31,51.4 30,51.4 29,51.9 28,51.3 27,51.9 26,52.1 25,52.1 24,52.4 23,51.8 22,52.0 21,52.6 20,52.7 19,52.2 18,52.8 17,52.3 16,53.1 15,53.0 14,53.0 13,52.9 12,53.3 11,53.2 10,53.7 9,53.7 8,53.4 7,53.3 6,53.8 5,53.6 4,53.8 3,53.8 2,53.8 1,53.9 0,54.0Z" fill="#7b8c49" stroke="#7b8c49" stroke-width="0.45"/><path d="M0.5 55.0v-12.1M1.5 54.9v-10.0M4.5 54.8v-19.3M5.5 3.6v6.1M7.5 3.5v5.2M9.5 54.7v-12.5M10.5 54.7v-22.1M11.5 54.2v-10.7M15.5 4.2v9.1M17.5 53.3v-5.2M18.5 5.0v5.4M20.5 53.7v-9.1M21.5 53.6v-5.7M25.5 4.9v10.4M27.5 5.7v3.8M27.5 52.9v-5.5M28.5 5.5v4.4M28.5 52.3v-8.1M29.5 52.9v-6.5M30.5 5.6v9.8M31.5 5.5v4.0M32.5 5.9v3.4M33.5 51.9v-10.6M34.5 52.4v-7.9M38.5 51.8v-4.3M41.5 51.2v-5.7M43.5 6.3v8.0M44.5 51.4v-15.2M46.5 51.4v-4.8M47.5 51.2v-15.8M51.5 50.3v-5.9M52.5 50.2v-17.3M55.5 49.8v-4.0M58.5 49.6v-6.1M64.5 7.8v5.9M64.5 49.0v-5.6M66.5 49.3v-15.7M68.5 49.3v-7.9M69.5 8.6v5.0M70.5 48.8v-6.5M71.5 8.6v9.3M72.5 48.2v-13.3M74.5 8.6v8.7M75.5 8.8v7.2M77.5 9.7v8.3M78.5 48.0v-4.3M79.5 9.4v3.8M79.5 47.7v-4.9M80.5 47.6v-8.4M81.5 10.0v4.3M81.5 47.6v-12.0M86.5 47.2v-4.2M87.5 47.3v-3.9M88.5 47.4v-5.1M89.5 10.5v5.4M89.5 46.9v-15.6M91.5 10.6v4.9M92.5 46.4v-5.2M93.5 11.0v2.8M96.5 11.0v6.8M98.5 10.7v5.6M100.5 46.1v-3.5M101.5 11.6v7.3M104.5 11.4v6.6M104.5 45.7v-3.6M105.5 11.8v6.6M107.5 45.4v-4.0M111.5 12.1v7.2M111.5 44.9v-14.2M113.5 44.7v-13.5M114.5 12.6v5.2M122.5 43.8v-3.2M124.5 43.5v-5.5M128.5 13.2v6.8M128.5 43.1v-6.3M146.5 4.9v5.0M148.5 4.8v4.0M151.5 53.2v-7.0M153.5 53.1v-8.8M156.5 10.5v5.0M157.5 44.1v-3.5M167.5 52.9v-19.7M168.5 4.6v5.3M169.5 4.5v7.5M170.5 53.1v-7.3M173.5 4.5v7.3M179.5 46.2v-4.7M180.5 43.6v-5.6M207.5 3.3v3.9M207.5 55.5v-9.4M209.5 2.6v11.6M211.5 3.5v5.9M212.5 54.5v-8.6M213.5 55.0v-10.6M214.5 3.7v6.5M216.5 4.3v11.2M216.5 54.1v-16.3M220.5 3.9v5.3M221.5 54.3v-9.5M222.5 4.3v10.0M224.5 53.5v-6.0M225.5 4.2v3.6M227.5 5.0v7.3M231.5 5.2v5.2M231.5 53.1v-5.4M234.5 5.1v7.0M235.5 5.0v5.5M235.5 52.9v-5.7M239.5 6.1v4.8M239.5 52.0v-11.9M240.5 5.6v5.7M241.5 6.3v9.2M243.5 5.9v8.4M246.5 5.7v8.6M246.5 51.3v-4.2M248.5 6.0v3.2M249.5 6.4v7.7M252.5 6.3v9.9M254.5 50.8v-14.8M259.5 8.0v7.2M262.5 50.0v-13.9M263.5 7.5v6.2M263.5 49.7v-4.6M265.5 8.5v8.0M268.5 7.9v9.5M269.5 7.8v8.2M270.5 49.0v-16.0M271.5 8.7v6.2M273.5 9.2v9.0M274.5 48.4v-9.2M276.5 8.8v9.3M279.5 9.6v8.0M279.5 48.4v-10.7M281.5 9.9v6.7M282.5 9.4v4.2M283.5 47.4v-6.5M284.5 47.7v-10.2M285.5 47.3v-4.4M287.5 10.0v6.7M289.5 47.0v-8.6M290.5 10.2v7.4M290.5 46.9v-8.8M291.5 9.7v6.3M292.5 10.1v4.5M295.5 46.6v-4.9M298.5 46.5v-9.8M299.5 46.0v-5.1M301.5 46.3v-13.9M305.5 11.8v7.6M305.5 45.7v-3.4M306.5 45.8v-3.4M309.5 45.5v-12.6M310.5 11.3v3.6M310.5 45.5v-3.4M312.5 11.9v3.0M313.5 44.7v-4.7M333.5 55.3v-19.6M334.5 3.7v3.5M334.5 55.3v-17.0M337.5 54.6v-6.5M338.5 3.3v8.8M338.5 54.7v-17.4M340.5 54.4v-19.8M342.5 54.2v-10.2M344.5 4.2v10.4M348.5 3.9v5.4M349.5 53.4v-21.4M350.5 53.2v-8.6M352.5 5.0v5.0M354.5 53.3v-12.5M356.5 53.2v-14.9M363.5 52.3v-11.0M367.5 6.0v8.4M369.5 51.6v-8.6M370.5 51.9v-5.9M371.5 52.0v-15.7M372.5 6.4v8.9M373.5 51.4v-19.3M375.5 51.1v-16.2M377.5 7.0v3.1M380.5 6.4v9.0M383.5 7.5v4.7M388.5 50.3v-5.7M389.5 8.1v6.2M389.5 49.9v-9.1M390.5 49.9v-15.4M392.5 49.6v-11.4M395.5 8.1v7.8M397.5 8.3v5.8M403.5 48.3v-5.0M406.5 48.4v-11.3M407.5 9.1v4.0M407.5 48.5v-13.1M411.5 47.5v-4.2M414.5 47.6v-10.5M415.5 10.1v2.8M416.5 10.3v8.1M416.5 47.8v-3.7M417.5 47.1v-3.8M422.5 46.7v-13.7M424.5 10.5v7.4M431.5 46.3v-5.1M435.5 46.0v-8.3M441.5 45.1v-4.3M443.5 12.1v2.7M449.5 11.9v3.5M449.5 44.2v-3.5M451.5 12.1v5.5M456.5 44.1v-10.4M473.5 47.3v-4.3M474.5 53.6v-12.3M475.5 53.0v-5.2M476.5 53.0v-14.1M477.5 5.3v3.6M479.5 5.2v10.8M481.5 4.8v5.1M481.5 53.4v-14.9M482.5 53.0v-9.0M485.5 10.2v8.3M486.5 44.9v-4.3M494.5 47.0v-11.6M495.5 5.0v9.8M497.5 53.2v-11.9M499.5 5.1v8.2M501.5 4.4v3.8M502.5 4.9v9.8M503.5 53.6v-19.4M504.5 53.6v-17.5M535.5 55.4v-22.6M536.5 3.3v5.7M537.5 54.9v-4.8M539.5 55.4v-5.5M540.5 55.0v-9.5M541.5 55.0v-12.7" stroke="#d5dcbe" stroke-width="0.9" fill="none"/><path d="M0,61.0 1,61.8 2,61.9 3,62.0 4,61.3 5,61.8 6,62.2 7,61.9 8,62.2 9,62.4 10,62.4 11,62.7 12,62.7 13,62.6 14,62.3 15,62.4 16,62.6 17,62.8 18,63.0 19,63.5 20,63.1 21,62.9 22,63.3 23,63.3 24,63.0 25,63.9 26,63.8 27,64.0 28,63.7 29,63.8 30,63.7 31,64.2 32,64.6 33,64.1 34,64.3 35,64.3 36,64.0 37,64.1 38,65.0 39,65.0 40,64.9 41,64.5 42,64.5 43,64.9 44,64.5 45,64.8 46,64.8 47,65.0 48,65.8 49,65.7 50,65.5 51,65.9 52,65.9 53,65.7 54,66.2 55,65.5 56,66.2 57,66.6 58,66.7 59,66.6 60,66.2 61,66.0 62,66.2 63,66.8 64,67.0 65,66.7 66,67.2 67,67.2 68,66.9 69,66.7 70,67.3 71,67.6 72,66.9 73,67.9 74,67.7 75,67.9 76,68.0 77,67.5 78,68.0 79,68.3 80,68.3 81,68.7 82,67.7 83,68.6 84,68.4 85,67.9 86,68.2 87,69.1 88,68.1 89,68.4 90,68.6 91,69.0 92,68.8 93,69.1 94,69.6 95,69.2 96,69.3 97,69.5 98,69.5 99,69.7 100,69.3 101,69.6 102,70.2 103,69.7 104,70.4 105,70.3 106,69.6 107,69.9 108,70.4 109,70.7 110,70.1 111,70.5 112,71.1 113,71.2 114,71.4 115,70.9 116,71.0 117,70.6 118,71.0 119,71.2 120,70.7 121,71.9 122,70.9 123,71.0 124,72.1 125,71.8 126,72.2 127,72.3 128,72.2 129,72.4 130,84.7 131,84.7 132,84.7 133,84.7 134,84.7 135,84.7 136,84.7 137,84.7 138,84.7 139,84.7 140,84.7 141,84.7 142,84.7 143,84.7 144,84.7 145,69.0 146,63.0 147,63.7 148,63.2 149,63.4 150,63.0 151,62.8 152,63.6 153,63.0 154,63.3 155,66.1 156,69.2 157,71.4 158,84.7 159,84.7 160,84.7 161,84.7 162,84.7 163,84.7 164,84.7 165,68.9 166,63.4 167,63.0 168,63.7 169,63.8 170,63.4 171,62.8 172,63.1 173,63.1 174,63.4 175,63.8 176,63.5 177,65.0 178,67.2 179,69.9 180,71.2 181,84.7 182,84.7 183,84.7 184,84.7 185,84.7 186,84.7 187,84.7 188,84.7 189,84.7 190,84.7 191,84.7 192,84.7 193,84.7 194,84.7 195,84.7 196,84.7 197,84.7 198,84.7 199,84.7 200,84.7 201,84.7 202,84.7 203,84.7 204,84.7 205,84.7 206,84.7 207,61.2 208,61.5 209,61.0 210,61.9 211,61.9 212,62.1 213,61.5 214,62.6 215,62.3 216,62.8 217,62.9 218,62.7 219,62.3 220,62.5 221,62.9 222,62.6 223,62.7 224,63.5 225,63.0 226,63.7 227,63.7 228,63.8 229,63.4 230,63.3 231,63.8 232,63.8 233,64.0 234,63.8 235,63.3 236,64.4 237,64.4 238,63.8 239,64.5 240,64.5 241,63.9 242,64.6 243,64.1 244,64.9 245,64.6 246,65.2 247,64.5 248,64.5 249,65.1 250,65.3 251,64.7 252,65.9 253,65.2 254,65.3 255,65.2 256,66.2 257,65.3 258,66.2 259,66.4 260,66.2 261,65.8 262,66.2 263,66.9 264,66.3 265,66.2 266,66.0 267,67.1 268,67.0 269,67.3 270,67.4 271,66.9 272,66.6 273,67.5 274,67.0 275,67.1 276,67.7 277,67.5 278,67.9 279,67.6 280,67.4 281,67.4 282,67.5 283,67.6 284,67.5 285,67.8 286,68.2 287,68.5 288,68.2 289,69.0 290,68.3 291,68.9 292,68.6 293,68.8 294,69.1 295,69.2 296,68.8 297,69.3 298,68.8 299,69.0 300,70.0 301,69.2 302,70.1 303,70.3 304,70.4 305,69.3 306,70.0 307,70.3 308,70.2 309,69.9 310,70.3 311,70.3 312,70.4 313,70.7 314,84.7 315,84.7 316,84.7 317,84.7 318,84.7 319,84.7 320,84.7 321,84.7 322,84.7 323,84.7 324,84.7 325,84.7 326,84.7 327,84.7 328,84.7 329,84.7 330,61.7 331,61.5 332,62.1 333,62.2 334,61.4 335,62.0 336,62.2 337,62.1 338,61.8 339,62.4 340,62.1 341,61.9 342,62.5 343,62.8 344,62.6 345,62.0 346,62.4 347,62.3 348,63.1 349,63.5 350,62.5 351,63.4 352,63.1 353,63.1 354,63.8 355,63.2 356,63.1 357,63.1 358,64.1 359,63.9 360,64.1 361,64.5 362,63.9 363,64.5 364,64.4 365,63.9 366,63.7 367,64.0 368,63.9 369,64.6 370,64.4 371,65.0 372,64.4 373,64.4 374,64.5 375,65.4 376,65.5 377,64.9 378,65.3 379,65.6 380,65.9 381,65.8 382,65.1 383,65.3 384,65.3 385,66.0 386,66.5 387,66.1 388,66.4 389,66.4 390,66.3 391,66.8 392,66.5 393,66.0 394,66.5 395,67.2 396,66.3 397,66.3 398,66.4 399,66.4 400,67.2 401,67.1 402,67.0 403,66.8 404,67.8 405,67.3 406,67.3 407,67.7 408,67.5 409,67.5 410,67.5 411,68.3 412,68.1 413,67.5 414,68.6 415,67.7 416,67.9 417,68.8 418,68.3 419,68.0 420,68.9 421,68.9 422,68.7 423,68.5 424,68.4 425,69.2 426,69.2 427,69.2 428,69.7 429,68.9 430,69.3 431,69.1 432,69.6 433,69.3 434,69.5 435,69.4 436,69.3 437,70.5 438,70.5 439,69.8 440,70.1 441,70.7 442,70.4 443,70.6 444,70.5 445,71.0 446,70.2 447,71.2 448,70.9 449,70.7 450,71.4 451,70.6 452,70.9 453,71.0 454,71.8 455,72.0 456,71.2 457,84.7 458,84.7 459,84.7 460,84.7 461,84.7 462,84.7 463,84.7 464,84.7 465,84.7 466,84.7 467,84.7 468,84.7 469,84.7 470,84.7 471,84.7 472,84.7 473,68.6 474,63.3 475,63.2 476,63.0 477,63.0 478,63.7 479,63.8 480,63.8 481,63.1 482,63.6 483,64.2 484,65.9 485,68.7 486,70.3 487,72.5 488,84.7 489,84.7 490,84.7 491,84.7 492,84.7 493,84.7 494,69.1 495,62.9 496,63.8 497,63.8 498,63.6 499,62.7 500,63.7 501,63.6 502,62.7 503,62.9 504,62.9 505,64.4 506,65.8 507,68.2 508,70.3 509,72.2 510,84.7 511,84.7 512,84.7 513,84.7 514,84.7 515,84.7 516,84.7 517,84.7 518,84.7 519,84.7 520,84.7 521,84.7 522,84.7 523,84.7 524,84.7 525,84.7 526,84.7 527,84.7 528,84.7 529,84.7 530,84.7 531,84.7 532,84.7 533,84.7 534,84.7 535,61.8 536,62.1 537,61.5 538,61.4 539,61.2 540,61.3 541,61.9 542,62.1 543,61.8 544,61.4 545,62.7 546,62.4 547,61.9 548,62.2 549,62.8 550,61.9 551,62.0 L551,110.3 550,110.6 549,110.8 548,110.7 547,110.9 546,111.2 545,110.9 544,111.4 543,111.6 542,111.2 541,111.6 540,111.4 539,111.8 538,112.0 537,111.7 536,111.5 535,112.0 534,85.3 533,85.3 532,85.3 531,85.3 530,85.3 529,85.3 528,85.3 527,85.3 526,85.3 525,85.3 524,85.3 523,85.3 522,85.3 521,85.3 520,85.3 519,85.3 518,85.3 517,85.3 516,85.3 515,85.3 514,85.3 513,85.3 512,85.3 511,85.3 510,85.3 509,99.9 508,102.4 507,104.9 506,106.6 505,109.4 504,109.4 503,109.8 502,109.4 501,109.8 500,110.2 499,109.6 498,109.9 497,109.4 496,109.5 495,110.0 494,103.5 493,85.3 492,85.3 491,85.3 490,85.3 489,85.3 488,85.3 487,98.8 486,101.6 485,104.2 484,106.8 483,109.3 482,109.6 481,110.1 480,110.1 479,110.0 478,109.4 477,109.7 476,110.1 475,109.5 474,110.0 473,104.1 472,85.3 471,85.3 470,85.3 469,85.3 468,85.3 467,85.3 466,85.3 465,85.3 464,85.3 463,85.3 462,85.3 461,85.3 460,85.3 459,85.3 458,85.3 457,85.3 456,100.2 455,100.1 454,100.5 453,100.6 452,100.8 451,100.9 450,100.6 449,100.9 448,100.9 447,101.0 446,101.0 445,101.6 444,101.3 443,101.1 442,101.2 441,101.9 440,101.6 439,101.4 438,101.7 437,102.3 436,102.3 435,102.0 434,102.4 433,102.5 432,102.8 431,102.3 430,102.5 429,102.9 428,102.7 427,102.9 426,103.3 425,103.5 424,103.3 423,103.0 422,103.6 421,103.8 420,103.8 419,103.7 418,104.0 417,104.1 416,104.1 415,103.8 414,103.9 413,104.0 412,104.7 411,104.6 410,104.4 409,104.4 408,104.6 407,105.2 406,104.7 405,104.6 404,105.4 403,105.3 402,105.3 401,105.2 400,105.4 399,105.4 398,105.7 397,105.7 396,105.6 395,105.6 394,106.4 393,106.0 392,105.9 391,106.5 390,106.5 389,106.1 388,106.4 387,106.7 386,106.7 385,106.9 384,106.8 383,107.2 382,107.2 381,106.9 380,107.6 379,107.7 378,107.7 377,107.8 376,107.9 375,108.1 374,108.1 373,108.1 372,108.0 371,108.0 370,107.9 369,108.0 368,108.0 367,108.3 366,108.2 365,108.8 364,109.1 363,108.7 362,109.1 361,109.4 360,109.4 359,109.0 358,109.3 357,109.1 356,109.8 355,109.3 354,109.7 353,109.7 352,109.5 351,110.2 350,110.2 349,110.2 348,110.5 347,110.4 346,110.4 345,110.9 344,110.7 343,110.7 342,110.4 341,110.6 340,110.7 339,110.9 338,110.9 337,111.4 336,111.0 335,111.2 334,111.5 333,111.7 332,111.7 331,112.0 330,112.0 329,85.3 328,85.3 327,85.3 326,85.3 325,85.3 324,85.3 323,85.3 322,85.3 321,85.3 320,85.3 319,85.3 318,85.3 317,85.3 316,85.3 315,85.3 314,85.3 313,101.4 312,101.0 311,101.4 310,101.5 309,102.0 308,101.7 307,101.7 306,101.6 305,102.3 304,102.3 303,102.4 302,102.1 301,102.2 300,102.7 299,102.8 298,102.7 297,103.2 296,102.6 295,103.1 294,103.3 293,103.6 292,103.6 291,103.7 290,103.7 289,103.8 288,103.6 287,103.5 286,103.8 285,104.3 284,104.3 283,104.3 282,104.1 281,104.8 280,104.5 279,104.7 278,104.5 277,105.1 276,105.1 275,104.9 274,105.1 273,105.4 272,105.4 271,105.3 270,105.7 269,105.9 268,105.9 267,106.3 266,105.9 265,106.0 264,106.3 263,106.4 262,106.3 261,106.3 260,106.3 259,106.5 258,106.9 257,106.6 256,106.6 255,107.2 254,107.5 253,106.9 252,107.7 251,107.3 250,107.8 249,107.7 248,107.5 247,107.7 246,108.2 245,107.9 244,108.1 243,108.6 242,108.6 241,108.1 240,108.8 239,109.0 238,109.1 237,109.2 236,108.6 235,108.8 234,109.3 233,109.3 232,109.6 231,109.6 230,109.6 229,109.7 228,109.5 227,109.9 226,110.3 225,110.1 224,110.1 223,110.2 222,110.7 221,110.1 220,110.2 219,110.4 218,110.7 217,110.6 216,110.9 215,111.3 214,110.9 213,111.1 212,111.2 211,111.5 210,111.2 209,111.6 208,111.7 207,111.8 206,85.3 205,85.3 204,85.3 203,85.3 202,85.3 201,85.3 200,85.3 199,85.3 198,85.3 197,85.3 196,85.3 195,85.3 194,85.3 193,85.3 192,85.3 191,85.3 190,85.3 189,85.3 188,85.3 187,85.3 186,85.3 185,85.3 184,85.3 183,85.3 182,85.3 181,85.3 180,100.1 179,102.2 178,104.9 177,107.5 176,109.2 175,109.5 174,109.4 173,109.7 172,109.4 171,109.9 170,109.8 169,109.5 168,109.8 167,110.0 166,109.5 165,103.7 164,85.3 163,85.3 162,85.3 161,85.3 160,85.3 159,85.3 158,85.3 157,100.0 156,103.0 155,105.8 154,109.2 153,110.0 152,110.0 151,109.8 150,109.7 149,109.4 148,110.0 147,110.0 146,110.0 145,103.6 144,85.3 143,85.3 142,85.3 141,85.3 140,85.3 139,85.3 138,85.3 137,85.3 136,85.3 135,85.3 134,85.3 133,85.3 132,85.3 131,85.3 130,85.3 129,99.7 128,99.8 127,100.2 126,99.7 125,100.1 124,100.3 123,99.9 122,100.4 121,100.6 120,100.9 119,101.0 118,100.6 117,101.2 116,100.8 115,100.8 114,101.4 113,100.8 112,101.5 111,101.4 110,101.7 109,101.2 108,101.7 107,101.6 106,101.6 105,101.7 104,101.7 103,102.5 102,102.3 101,102.0 100,102.1 99,102.3 98,102.3 97,102.5 96,103.0 95,103.1 94,103.0 93,103.4 92,103.0 91,103.0 90,103.4 89,103.3 88,103.3 87,103.8 86,104.0 85,103.8 84,104.1 83,104.4 82,104.2 81,104.5 80,104.3 79,104.7 78,104.1 77,104.2 76,104.4 75,105.1 74,104.8 73,104.8 72,105.3 71,104.8 70,105.2 69,105.2 68,105.3 67,105.7 66,105.9 65,105.6 64,105.8 63,106.3 62,105.7 61,105.8 60,106.1 59,106.0 58,106.1 57,106.5 56,106.3 55,106.6 54,106.7 53,107.2 52,107.2 51,106.7 50,107.5 49,107.2 48,107.1 47,107.3 46,107.6 45,107.3 44,107.7 43,107.6 42,107.9 41,107.8 40,108.5 39,107.9 38,108.1 37,108.7 36,108.4 35,108.8 34,108.7 33,109.0 32,108.7 31,109.3 30,108.9 29,109.5 28,109.2 27,109.2 26,109.6 25,109.5 24,109.6 23,109.6 22,109.7 21,110.1 20,110.3 19,110.3 18,110.3 17,110.4 16,110.4 15,110.1 14,110.2 13,110.2 12,110.9 11,110.8 10,110.9 9,110.8 8,111.1 7,111.2 6,111.0 5,111.1 4,111.4 3,111.4 2,111.6 1,111.7 0,111.4Z" fill="#7b8c49" stroke="#7b8c49" stroke-width="0.45"/><path d="M0.5 112.4v-15.2M3.5 112.4v-13.2M5.5 60.8v4.6M5.5 112.1v-9.4M6.5 61.2v8.1M7.5 112.2v-15.6M10.5 61.4v6.4M11.5 111.8v-22.2M12.5 61.7v3.9M19.5 62.5v9.5M22.5 110.7v-8.7M24.5 110.6v-7.3M25.5 110.5v-19.4M27.5 110.2v-4.6M35.5 63.3v5.6M36.5 63.0v10.0M40.5 109.5v-8.4M41.5 108.8v-6.9M42.5 108.9v-9.8M44.5 108.7v-5.1M45.5 63.8v4.3M46.5 108.6v-4.1M48.5 64.8v9.6M49.5 108.2v-17.1M54.5 107.7v-6.6M55.5 107.6v-5.1M56.5 107.3v-10.3M59.5 107.0v-4.1M60.5 65.2v7.8M60.5 107.1v-6.0M63.5 65.8v9.4M64.5 66.0v7.7M64.5 106.8v-16.2M66.5 66.2v6.3M68.5 106.3v-4.9M69.5 106.2v-9.8M70.5 106.2v-6.2M71.5 105.8v-7.4M73.5 66.9v7.2M77.5 66.5v3.8M77.5 105.2v-6.0M81.5 105.5v-3.8M82.5 66.7v4.3M82.5 105.2v-13.0M83.5 105.4v-11.3M84.5 105.1v-4.0M88.5 104.3v-11.1M90.5 104.4v-6.3M91.5 104.0v-11.0M93.5 104.4v-13.9M95.5 68.2v6.5M96.5 104.0v-5.4M97.5 68.5v4.2M97.5 103.5v-10.6M99.5 68.7v2.7M102.5 69.2v7.7M103.5 103.5v-4.8M107.5 68.9v7.0M111.5 69.5v4.1M112.5 70.1v4.8M113.5 101.8v-10.1M117.5 69.6v4.0M118.5 70.0v2.9M121.5 101.6v-7.7M122.5 101.4v-5.2M123.5 70.0v5.7M127.5 101.2v-7.0M128.5 100.8v-7.5M129.5 100.7v-5.7M146.5 62.0v11.3M147.5 111.0v-20.7M148.5 62.2v9.5M148.5 111.0v-6.4M149.5 110.4v-7.3M153.5 62.0v6.3M154.5 62.3v7.9M154.5 110.2v-11.1M157.5 70.4v2.9M167.5 111.0v-7.9M170.5 62.4v10.1M171.5 61.8v6.0M171.5 110.9v-19.0M172.5 62.1v6.2M173.5 110.7v-12.1M175.5 110.5v-6.9M177.5 64.0v7.1M208.5 60.5v6.4M209.5 112.6v-6.8M210.5 60.9v11.0M211.5 112.5v-5.0M216.5 111.9v-7.0M218.5 61.7v8.4M221.5 61.9v7.8M222.5 61.6v6.0M224.5 62.5v8.5M228.5 62.8v9.5M228.5 110.5v-17.1M233.5 110.3v-4.4M235.5 109.8v-4.4M237.5 110.2v-5.6M238.5 62.8v3.4M241.5 109.1v-12.7M242.5 63.6v7.4M243.5 109.6v-6.3M244.5 109.1v-14.9M245.5 108.9v-11.1M246.5 109.2v-14.6M249.5 108.7v-17.2M250.5 108.8v-16.7M251.5 63.7v3.9M252.5 64.9v8.4M252.5 108.7v-5.2M254.5 108.5v-5.8M255.5 64.2v6.7M255.5 108.2v-8.4M257.5 107.6v-8.3M258.5 65.2v8.2M261.5 64.8v4.8M261.5 107.3v-4.1M267.5 66.1v7.0M268.5 106.9v-5.2M271.5 106.3v-13.0M279.5 105.7v-4.7M281.5 66.4v5.2M282.5 66.5v4.4M282.5 105.1v-6.5M283.5 105.3v-7.0M285.5 66.8v7.0M287.5 67.5v6.2M287.5 104.5v-4.6M288.5 104.6v-13.5M289.5 104.8v-7.1M290.5 104.7v-7.4M293.5 67.8v8.4M294.5 104.3v-11.8M301.5 103.2v-12.4M305.5 103.3v-5.6M306.5 102.6v-4.9M308.5 69.2v4.2M309.5 103.0v-3.4M311.5 102.4v-13.3M313.5 102.4v-11.2M332.5 112.7v-19.6M333.5 61.2v11.5M335.5 112.2v-20.9M336.5 61.2v10.2M338.5 60.8v9.3M338.5 111.9v-18.6M343.5 61.8v7.3M344.5 61.6v10.3M344.5 111.7v-20.4M345.5 111.9v-8.2M346.5 111.4v-10.5M347.5 111.4v-5.4M348.5 111.5v-20.1M350.5 61.5v6.0M351.5 62.4v9.7M351.5 111.2v-4.8M353.5 62.1v7.4M353.5 110.7v-13.4M355.5 62.2v10.8M356.5 110.8v-4.9M358.5 63.1v7.5M359.5 110.0v-5.1M363.5 63.5v6.3M364.5 63.4v7.7M364.5 110.1v-11.9M365.5 62.9v5.1M370.5 108.9v-5.6M373.5 109.1v-12.1M374.5 63.5v8.4M380.5 108.6v-16.0M381.5 107.9v-9.4M384.5 64.3v7.7M386.5 65.5v3.8M390.5 107.5v-12.3M391.5 65.8v4.8M394.5 65.5v8.6M394.5 107.4v-9.5M396.5 106.6v-9.8M398.5 65.4v7.1M401.5 106.2v-14.6M403.5 106.3v-6.4M404.5 106.4v-10.0M406.5 105.7v-9.3M409.5 66.5v6.5M410.5 66.5v6.1M411.5 67.3v4.8M411.5 105.6v-5.9M412.5 105.7v-6.0M415.5 66.7v8.3M420.5 67.9v7.7M421.5 104.8v-3.8M426.5 104.3v-13.6M428.5 68.7v5.0M433.5 103.5v-10.5M434.5 103.4v-9.0M435.5 68.4v3.8M435.5 103.0v-10.0M437.5 103.3v-9.2M438.5 69.5v5.0M439.5 102.4v-4.6M441.5 69.7v7.0M442.5 102.2v-7.4M446.5 102.0v-6.9M448.5 69.9v4.5M448.5 101.9v-4.1M449.5 101.9v-9.7M452.5 69.9v3.5M452.5 101.8v-11.8M456.5 70.2v2.9M456.5 101.2v-10.3M474.5 62.3v4.2M475.5 110.5v-19.4M478.5 62.7v8.0M480.5 111.1v-7.6M483.5 63.2v4.8M485.5 67.7v5.7M487.5 71.5v6.3M494.5 104.5v-6.8M499.5 61.7v3.4M500.5 111.2v-17.0M501.5 62.6v9.6M504.5 61.9v7.7M504.5 110.4v-8.8M505.5 63.4v9.8M506.5 107.6v-8.3M536.5 61.1v9.5M539.5 112.8v-15.1M540.5 112.4v-21.6M542.5 61.1v7.2M544.5 112.4v-9.5M547.5 60.9v10.4M551.5 61.0v5.8" stroke="#d5dcbe" stroke-width="0.9" fill="none"/></g><rect x="0" y="0" width="551.5" height="2.2" fill="#f05c5c"/><rect x="0" y="56.8" width="551.5" height="2.8" fill="#0f8ad8"/><rect x="0" y="114" width="551.5" height="1" fill="#b8ccd8"/><rect x="0" y="115" width="551.5" height="15.5" fill="#8cb424"/><rect x="0" y="130.5" width="551.5" height="2.5" fill="#a8a8a8"/><rect x="1" y="120.5" width="9.5" height="10" fill="#585858" stroke="#9a9a9a" stroke-width="0.8"/><path d="M0 9.5L7 2.5H0z" fill="#4a4a4a"/><circle cx="1.8" cy="1.6" r="2.9" fill="#fff" stroke="#4a4a4a" stroke-width="0.9"/><circle cx="1.8" cy="58.2" r="2.9" fill="#fff" stroke="#4a4a4a" stroke-width="0.9"/></svg>
<div class="a t" style="left:211.60px;top:278.04px;font-size:12px;line-height:16px;color:#1414c0;transform:scaleX(0.8436);transform-origin:0 50%;">Bass</div>
<svg class="a" style="left:199px;top:297px" width="551.5" height="133" viewBox="0 0 551.5 133"><g transform="translate(0,2)"><rect x="0" y="0" width="551.5" height="112.5" fill="#e8d5e4"/><path d="M11.6 0V112.5M22.6 0V112.5M33.5 0V112.5M44.5 0V112.5M57.1 0V112.5M66.3 0V112.5M77.3 0V112.5M88.2 0V112.5M99.2 0V112.5M111.9 0V112.5M121.0 0V112.5M132.0 0V112.5M142.9 0V112.5M153.9 0V112.5M166.7 0V112.5M175.7 0V112.5M186.7 0V112.5M197.6 0V112.5M208.6 0V112.5M221.5 0V112.5M230.4 0V112.5M241.4 0V112.5M252.3 0V112.5M263.3 0V112.5M276.3 0V112.5M285.1 0V112.5M296.1 0V112.5M307.0 0V112.5M318.0 0V112.5M331.1 0V112.5M339.8 0V112.5M350.8 0V112.5M361.7 0V112.5M372.7 0V112.5M385.9 0V112.5M394.5 0V112.5M405.5 0V112.5M416.4 0V112.5M427.4 0V112.5M440.7 0V112.5M449.2 0V112.5M460.2 0V112.5M471.1 0V112.5M482.1 0V112.5M495.5 0V112.5M503.9 0V112.5M514.9 0V112.5M525.8 0V112.5M536.8 0V112.5M550.3 0V112.5" stroke="#dcc8d8" stroke-width="1" fill="none"/><path d="M0,9.5 1,11.0 2,9.9 3,11.0 4,11.1 5,10.0 6,9.6 7,10.0 8,11.4 9,12.3 10,13.9 11,15.2 12,16.6 13,18.7 14,20.2 15,22.6 16,23.8 17,25.5 18,25.9 19,26.2 20,23.4 21,15.2 22,11.5 23,11.3 24,11.3 25,11.3 26,10.9 27,9.5 28,11.5 29,10.9 30,10.9 31,11.2 32,14.6 33,15.8 34,17.0 35,18.7 36,20.7 37,22.8 38,24.6 39,25.6 40,25.8 41,25.8 42,25.0 43,24.3 44,24.1 45,22.7 46,23.8 47,24.8 48,25.7 49,26.5 50,26.5 51,26.6 52,26.7 53,26.8 54,26.9 55,27.0 56,27.1 57,27.1 58,27.1 59,26.9 60,25.7 61,25.1 62,23.7 63,24.5 64,25.6 65,27.1 66,27.1 67,27.1 68,27.1 69,27.1 70,27.1 71,27.1 72,27.1 73,27.1 74,27.1 75,27.1 76,27.1 77,27.1 78,27.1 79,27.1 80,27.1 81,27.1 82,12.9 83,0.0 84,4.6 85,10.6 86,12.5 87,16.5 88,18.9 89,20.6 90,22.1 91,22.8 92,24.0 93,24.4 94,25.3 95,25.7 96,26.0 97,26.3 98,26.5 99,26.7 100,26.9 101,27.0 102,27.1 103,26.0 104,24.6 105,25.4 106,26.1 107,26.4 108,26.7 109,26.9 110,27.1 111,27.1 112,27.1 113,27.1 114,27.1 115,27.1 116,27.1 117,27.1 118,27.1 119,27.1 120,27.1 121,27.1 122,27.1 123,23.3 124,15.7 125,10.5 126,12.0 127,11.0 128,11.7 129,10.8 130,14.8 131,17.4 132,20.2 133,22.5 134,25.7 135,25.8 136,26.0 137,26.2 138,26.5 139,26.8 140,27.0 141,27.1 142,27.1 143,27.1 144,19.4 145,10.9 146,11.7 147,11.3 148,10.5 149,11.0 150,11.5 151,11.5 152,12.6 153,15.1 154,17.5 155,18.7 156,21.1 157,23.3 158,25.5 159,25.9 160,26.2 161,26.5 162,26.8 163,27.1 164,27.1 165,22.0 166,16.8 167,20.1 168,21.9 169,23.5 170,24.7 171,25.6 172,26.0 173,26.4 174,26.7 175,27.0 176,27.1 177,27.1 178,27.1 179,27.1 180,27.1 181,27.1 182,27.1 183,27.1 184,27.1 185,27.1 186,27.1 187,27.1 188,27.1 189,27.1 190,27.1 191,27.1 192,27.1 193,27.1 194,27.1 195,27.1 196,27.1 197,27.1 198,27.1 199,27.1 200,27.1 201,27.1 202,27.1 203,27.1 204,27.1 205,27.1 206,26.1 207,24.0 208,23.8 209,23.7 210,23.8 211,24.0 212,23.0 213,23.2 214,24.0 215,24.8 216,25.7 217,27.1 218,27.1 219,27.1 220,27.1 221,27.1 222,27.1 223,27.1 224,27.1 225,23.5 226,16.0 227,11.8 228,10.7 229,11.8 230,12.1 231,12.5 232,13.3 233,17.0 234,20.0 235,22.6 236,25.6 237,25.8 238,26.2 239,26.5 240,26.8 241,27.1 242,27.1 243,27.1 244,27.1 245,27.1 246,13.6 247,0.0 248,3.6 249,10.0 250,13.5 251,16.8 252,18.1 253,20.7 254,21.7 255,23.2 256,24.0 257,24.7 258,25.1 259,25.6 260,25.9 261,26.3 262,26.5 263,26.7 264,26.9 265,27.0 266,27.1 267,27.1 268,27.1 269,27.1 270,26.0 271,24.6 272,25.4 273,26.1 274,26.4 275,26.7 276,26.9 277,27.1 278,27.1 279,27.1 280,27.1 281,27.1 282,27.1 283,27.1 284,27.1 285,27.1 286,27.1 287,27.1 288,19.4 289,11.4 290,11.5 291,11.9 292,11.3 293,12.1 294,11.8 295,11.9 296,10.9 297,11.7 298,14.6 299,16.5 300,18.0 301,19.3 302,21.9 303,23.5 304,25.5 305,25.7 306,26.0 307,26.1 308,26.3 309,26.5 310,26.7 311,26.9 312,27.1 313,27.1 314,27.1 315,27.1 316,27.1 317,27.1 318,27.1 319,27.1 320,27.1 321,27.1 322,27.1 323,27.1 324,27.1 325,27.1 326,27.1 327,27.1 328,27.1 329,21.8 330,16.6 331,20.9 332,22.7 333,24.3 334,25.4 335,26.0 336,26.5 337,26.8 338,27.0 339,27.1 340,27.1 341,27.1 342,27.1 343,27.1 344,27.1 345,27.1 346,27.1 347,27.1 348,27.1 349,27.1 350,27.1 351,27.1 352,27.1 353,27.1 354,27.1 355,27.1 356,27.1 357,27.1 358,27.1 359,27.1 360,27.1 361,27.1 362,27.1 363,27.1 364,27.1 365,27.1 366,27.1 367,27.1 368,27.1 369,26.5 370,24.5 371,23.6 372,23.8 373,23.6 374,23.8 375,23.7 376,23.9 377,22.1 378,23.0 379,23.6 380,24.1 381,24.4 382,25.0 383,25.7 384,27.1 385,27.1 386,27.1 387,27.1 388,27.1 389,27.1 390,20.5 391,12.6 392,9.8 393,10.8 394,10.9 395,10.1 396,13.6 397,16.4 398,20.2 399,24.0 400,25.8 401,26.0 402,26.3 403,26.7 404,27.0 405,27.1 406,27.1 407,27.1 408,27.1 409,27.1 410,27.1 411,27.1 412,12.9 413,0.0 414,4.1 415,10.2 416,13.6 417,16.6 418,18.2 419,19.9 420,21.5 421,22.9 422,24.1 423,24.6 424,25.1 425,25.7 426,26.1 427,26.3 428,26.5 429,26.7 430,26.9 431,27.0 432,27.1 433,25.9 434,24.0 435,25.1 436,25.8 437,26.2 438,26.6 439,26.8 440,27.0 441,27.1 442,27.1 443,27.1 444,27.1 445,27.1 446,27.1 447,27.1 448,27.1 449,27.1 450,27.1 451,23.4 452,15.8 453,11.3 454,12.4 455,11.8 456,11.4 457,11.1 458,14.0 459,15.3 460,18.8 461,21.1 462,24.3 463,25.6 464,25.8 465,26.0 466,26.2 467,26.4 468,26.6 469,26.8 470,27.0 471,27.1 472,27.1 473,27.1 474,27.1 475,27.1 476,27.1 477,27.1 478,27.1 479,27.1 480,27.1 481,27.1 482,27.1 483,27.1 484,27.1 485,27.1 486,27.1 487,27.1 488,27.1 489,27.1 490,27.1 491,27.1 492,27.1 493,21.0 494,15.7 495,18.9 496,21.8 497,24.0 498,24.9 499,25.8 500,26.3 501,26.7 502,27.0 503,27.1 504,27.1 505,27.1 506,27.1 507,27.1 508,27.1 509,27.1 510,27.1 511,27.1 512,27.1 513,27.1 514,27.1 515,27.1 516,27.1 517,27.1 518,27.1 519,27.1 520,27.1 521,27.1 522,27.1 523,27.1 524,27.1 525,27.1 526,27.1 527,27.1 528,27.1 529,27.1 530,27.1 531,27.1 532,27.1 533,27.1 534,19.1 535,12.5 536,11.0 537,12.3 538,11.5 539,11.7 540,11.4 541,12.0 542,10.9 543,10.7 544,11.2 545,12.0 546,15.0 547,16.3 548,17.0 549,18.9 550,20.6 551,22.6 L551,32.6 550,34.0 549,36.3 548,37.3 547,39.5 546,41.5 545,42.6 544,44.0 543,42.8 542,42.5 541,44.2 540,43.0 539,43.9 538,42.5 537,42.7 536,43.0 535,44.3 534,35.8 533,27.9 532,27.9 531,27.9 530,27.9 529,27.9 528,27.9 527,27.9 526,27.9 525,27.9 524,27.9 523,27.9 522,27.9 521,27.9 520,27.9 519,27.9 518,27.9 517,27.9 516,27.9 515,27.9 514,27.9 513,27.9 512,27.9 511,27.9 510,27.9 509,27.9 508,27.9 507,27.9 506,27.9 505,27.9 504,27.9 503,27.9 502,28.0 501,28.3 500,28.7 499,29.2 498,29.9 497,31.3 496,33.0 495,36.1 494,40.3 493,33.8 492,27.9 491,27.9 490,27.9 489,27.9 488,27.9 487,27.9 486,27.9 485,27.9 484,27.9 483,27.9 482,27.9 481,27.9 480,27.9 479,27.9 478,27.9 477,27.9 476,27.9 475,27.9 474,27.9 473,27.9 472,27.9 471,27.9 470,28.0 469,28.2 468,28.4 467,28.6 466,28.8 465,29.0 464,29.0 463,29.3 462,30.8 461,33.4 460,36.6 459,39.2 458,41.1 457,44.4 456,43.2 455,44.3 454,42.6 453,43.6 452,39.1 451,31.5 450,27.9 449,27.9 448,27.9 447,27.9 446,27.9 445,27.9 444,27.9 443,27.9 442,27.9 441,27.9 440,28.0 439,28.2 438,28.4 437,28.8 436,29.2 435,29.9 434,30.8 433,29.2 432,27.9 431,28.0 430,28.1 429,28.3 428,28.5 427,28.7 426,29.0 425,29.4 424,29.8 423,30.5 422,31.0 421,32.3 420,33.6 419,34.6 418,36.3 417,39.1 416,40.9 415,44.7 414,50.8 413,55.0 412,41.9 411,27.9 410,27.9 409,27.9 408,27.9 407,27.9 406,27.9 405,27.9 404,28.0 403,28.3 402,28.7 401,29.0 400,29.1 399,31.0 398,34.7 397,37.7 396,41.1 395,44.6 394,45.0 393,45.3 392,45.1 391,42.6 390,34.6 389,27.9 388,27.9 387,27.9 386,27.9 385,27.9 384,27.9 383,29.3 382,29.9 381,30.4 380,30.9 379,31.7 378,32.1 377,32.8 376,31.2 375,31.4 374,31.3 373,31.1 372,31.2 371,31.5 370,30.5 369,28.5 368,27.9 367,27.9 366,27.9 365,27.9 364,27.9 363,27.9 362,27.9 361,27.9 360,27.9 359,27.9 358,27.9 357,27.9 356,27.9 355,27.9 354,27.9 353,27.9 352,27.9 351,27.9 350,27.9 349,27.9 348,27.9 347,27.9 346,27.9 345,27.9 344,27.9 343,27.9 342,27.9 341,27.9 340,27.9 339,27.9 338,28.0 337,28.2 336,28.5 335,29.0 334,29.7 333,30.7 332,32.2 331,34.8 330,37.3 329,34.0 328,27.9 327,27.9 326,27.9 325,27.9 324,27.9 323,27.9 322,27.9 321,27.9 320,27.9 319,27.9 318,27.9 317,27.9 316,27.9 315,27.9 314,27.9 313,27.9 312,27.9 311,28.1 310,28.3 309,28.5 308,28.7 307,28.9 306,29.0 305,29.3 304,29.3 303,31.6 302,33.4 301,35.2 300,37.5 299,38.5 298,40.8 297,43.4 296,42.9 295,42.5 294,43.2 293,42.8 292,42.5 291,44.2 290,44.5 289,44.1 288,35.3 287,27.9 286,27.9 285,27.9 284,27.9 283,27.9 282,27.9 281,27.9 280,27.9 279,27.9 278,27.9 277,27.9 276,28.1 275,28.3 274,28.6 273,28.9 272,29.5 271,30.3 270,29.0 269,27.9 268,27.9 267,27.9 266,27.9 265,28.0 264,28.1 263,28.3 262,28.5 261,28.7 260,29.0 259,29.4 258,29.9 257,30.3 256,31.2 255,32.2 254,32.9 253,35.0 252,36.6 251,38.4 250,42.3 249,44.9 248,50.0 247,54.6 246,41.7 245,27.9 244,27.9 243,27.9 242,27.9 241,27.9 240,28.2 239,28.5 238,28.8 237,29.0 236,29.3 235,32.4 234,35.4 233,38.5 232,40.3 231,44.1 230,42.7 229,43.3 228,44.0 227,43.5 226,39.0 225,31.5 224,27.9 223,27.9 222,27.9 221,27.9 220,27.9 219,27.9 218,27.9 217,27.9 216,29.3 215,30.2 214,31.0 213,31.4 212,32.4 211,31.4 210,31.1 209,31.1 208,31.3 207,31.0 206,29.1 205,27.9 204,27.9 203,27.9 202,27.9 201,27.9 200,27.9 199,27.9 198,27.9 197,27.9 196,27.9 195,27.9 194,27.9 193,27.9 192,27.9 191,27.9 190,27.9 189,27.9 188,27.9 187,27.9 186,27.9 185,27.9 184,27.9 183,27.9 182,27.9 181,27.9 180,27.9 179,27.9 178,27.9 177,27.9 176,27.9 175,28.0 174,28.3 173,28.6 172,29.0 171,29.4 170,30.4 169,31.1 168,33.0 167,34.7 166,37.9 165,32.6 164,27.9 163,27.9 162,28.2 161,28.5 160,28.8 159,29.0 158,29.4 157,31.5 156,33.9 155,35.5 154,38.3 153,40.9 152,43.2 151,42.5 150,42.6 149,43.5 148,42.6 147,43.1 146,42.6 145,43.0 144,35.9 143,27.9 142,27.9 141,27.9 140,28.0 139,28.2 138,28.5 137,28.8 136,29.0 135,29.2 134,29.5 133,32.2 132,35.5 131,38.3 130,40.6 129,42.9 128,43.2 127,43.5 126,43.4 125,43.5 124,39.5 123,31.7 122,27.9 121,27.9 120,27.9 119,27.9 118,27.9 117,27.9 116,27.9 115,27.9 114,27.9 113,27.9 112,27.9 111,27.9 110,27.9 109,28.1 108,28.3 107,28.6 106,29.0 105,29.6 104,30.3 103,29.0 102,27.9 101,28.0 100,28.1 99,28.3 98,28.5 97,28.7 96,29.0 95,29.4 94,29.8 93,30.5 92,31.3 91,32.3 90,33.2 89,35.1 88,36.0 87,38.8 86,42.3 85,45.3 84,50.1 83,55.0 82,41.7 81,27.9 80,27.9 79,27.9 78,27.9 77,27.9 76,27.9 75,27.9 74,27.9 73,27.9 72,27.9 71,27.9 70,27.9 69,27.9 68,27.9 67,27.9 66,27.9 65,27.9 64,29.5 63,30.5 62,31.2 61,30.0 60,29.4 59,28.1 58,27.9 57,27.9 56,27.9 55,28.0 54,28.1 53,28.2 52,28.3 51,28.4 50,28.5 49,28.5 48,29.3 47,30.5 46,31.3 45,32.3 44,30.9 43,30.9 42,30.0 41,29.1 40,29.3 39,29.4 38,30.2 37,32.0 36,33.6 35,35.4 34,38.2 33,39.3 32,41.5 31,43.9 30,45.1 29,44.2 28,45.2 27,45.1 26,44.9 25,43.8 24,45.0 23,45.4 22,44.8 21,40.8 20,31.8 19,28.8 18,29.1 17,29.5 16,30.9 15,32.6 14,34.5 13,36.5 12,38.5 11,40.2 10,40.9 9,42.6 8,44.3 7,44.9 6,44.0 5,44.9 4,43.9 3,44.0 2,44.6 1,43.4 0,44.9Z" fill="#a07c9c" stroke="#a07c9c" stroke-width="0.45"/><path d="M0,67.0 1,68.3 2,69.1 3,68.8 4,67.6 5,67.8 6,67.8 7,67.5 8,67.7 9,70.3 10,70.8 11,73.4 12,75.0 13,76.7 14,78.2 15,80.0 16,81.4 17,83.2 18,83.5 19,83.7 20,81.0 21,73.0 22,68.5 23,67.1 24,68.2 25,67.7 26,68.7 27,67.5 28,67.5 29,67.7 30,68.7 31,68.5 32,71.7 33,73.0 34,75.3 35,76.5 36,78.9 37,80.6 38,82.1 39,83.2 40,83.3 41,83.3 42,82.5 43,81.8 44,81.7 45,80.6 46,81.1 47,82.0 48,83.1 49,84.0 50,84.0 51,84.1 52,84.2 53,84.3 54,84.4 55,84.5 56,84.6 57,84.7 58,84.7 59,84.4 60,83.2 61,82.7 62,81.4 63,82.1 64,83.2 65,84.7 66,84.7 67,84.7 68,84.7 69,84.7 70,84.7 71,84.7 72,84.7 73,84.7 74,84.7 75,84.7 76,84.7 77,84.7 78,84.7 79,84.7 80,84.7 81,84.7 82,71.6 83,57.5 84,63.1 85,66.4 86,70.4 87,73.2 88,75.9 89,77.5 90,79.6 91,80.6 92,81.5 93,82.2 94,82.6 95,83.1 96,83.5 97,83.8 98,84.0 99,84.2 100,84.4 101,84.5 102,84.6 103,83.5 104,82.3 105,83.0 106,83.6 107,83.9 108,84.2 109,84.4 110,84.6 111,84.7 112,84.7 113,84.7 114,84.7 115,84.7 116,84.7 117,84.7 118,84.7 119,84.7 120,84.7 121,84.7 122,84.7 123,81.1 124,72.9 125,68.5 126,68.9 127,69.0 128,68.0 129,69.5 130,71.0 131,74.4 132,77.4 133,80.0 134,83.2 135,83.4 136,83.5 137,83.8 138,84.0 139,84.2 140,84.5 141,84.7 142,84.7 143,84.7 144,76.8 145,69.9 146,69.9 147,68.2 148,69.6 149,68.3 150,69.3 151,68.7 152,69.4 153,71.5 154,74.5 155,76.1 156,78.4 157,80.8 158,83.0 159,83.4 160,83.7 161,84.0 162,84.3 163,84.7 164,84.7 165,79.8 166,74.6 167,77.7 168,79.5 169,81.3 170,82.2 171,83.0 172,83.5 173,83.9 174,84.2 175,84.5 176,84.6 177,84.7 178,84.7 179,84.7 180,84.7 181,84.7 182,84.7 183,84.7 184,84.7 185,84.7 186,84.7 187,84.7 188,84.7 189,84.7 190,84.7 191,84.7 192,84.7 193,84.7 194,84.7 195,84.7 196,84.7 197,84.7 198,84.7 199,84.7 200,84.7 201,84.7 202,84.7 203,84.7 204,84.7 205,84.7 206,83.5 207,81.5 208,81.3 209,81.4 210,81.2 211,81.4 212,80.2 213,81.0 214,81.8 215,82.3 216,83.2 217,84.7 218,84.7 219,84.7 220,84.7 221,84.7 222,84.7 223,84.7 224,84.7 225,81.1 226,72.8 227,69.1 228,68.4 229,69.8 230,68.1 231,69.0 232,71.3 233,74.2 234,77.7 235,80.2 236,83.1 237,83.5 238,83.7 239,84.0 240,84.3 241,84.7 242,84.7 243,84.7 244,84.7 245,84.7 246,70.7 247,57.5 248,62.6 249,66.7 250,70.1 251,72.9 252,75.4 253,77.5 254,78.9 255,80.6 256,81.5 257,82.1 258,82.6 259,83.1 260,83.6 261,83.8 262,84.0 263,84.2 264,84.4 265,84.5 266,84.6 267,84.7 268,84.7 269,84.7 270,83.5 271,82.1 272,83.1 273,83.6 274,83.9 275,84.2 276,84.4 277,84.6 278,84.7 279,84.7 280,84.7 281,84.7 282,84.7 283,84.7 284,84.7 285,84.7 286,84.7 287,84.7 288,76.5 289,68.3 290,69.4 291,68.2 292,68.4 293,69.4 294,68.7 295,68.9 296,68.5 297,70.5 298,71.9 299,73.0 300,75.2 301,76.9 302,79.4 303,81.2 304,83.1 305,83.4 306,83.5 307,83.6 308,83.8 309,84.0 310,84.2 311,84.4 312,84.6 313,84.7 314,84.7 315,84.7 316,84.7 317,84.7 318,84.7 319,84.7 320,84.7 321,84.7 322,84.7 323,84.7 324,84.7 325,84.7 326,84.7 327,84.7 328,84.7 329,79.2 330,75.1 331,77.7 332,80.3 333,81.7 334,83.0 335,83.5 336,84.0 337,84.3 338,84.5 339,84.7 340,84.7 341,84.7 342,84.7 343,84.7 344,84.7 345,84.7 346,84.7 347,84.7 348,84.7 349,84.7 350,84.7 351,84.7 352,84.7 353,84.7 354,84.7 355,84.7 356,84.7 357,84.7 358,84.7 359,84.7 360,84.7 361,84.7 362,84.7 363,84.7 364,84.7 365,84.7 366,84.7 367,84.7 368,84.7 369,84.0 370,82.0 371,81.2 372,81.3 373,81.2 374,81.5 375,81.3 376,81.2 377,80.2 378,80.6 379,81.2 380,81.4 381,82.0 382,82.5 383,83.1 384,84.7 385,84.7 386,84.7 387,84.7 388,84.7 389,84.7 390,78.6 391,70.6 392,67.3 393,68.2 394,68.3 395,69.0 396,71.5 397,74.2 398,78.3 399,81.5 400,83.3 401,83.5 402,83.8 403,84.2 404,84.5 405,84.7 406,84.7 407,84.7 408,84.7 409,84.7 410,84.7 411,84.7 412,70.2 413,57.6 414,63.0 415,66.8 416,71.5 417,73.5 418,76.3 419,77.7 420,79.2 421,80.4 422,81.5 423,82.2 424,82.8 425,83.2 426,83.6 427,83.8 428,84.0 429,84.2 430,84.4 431,84.5 432,84.6 433,83.3 434,81.5 435,82.5 436,83.4 437,83.7 438,84.1 439,84.3 440,84.5 441,84.7 442,84.7 443,84.7 444,84.7 445,84.7 446,84.7 447,84.7 448,84.7 449,84.7 450,84.7 451,81.0 452,73.3 453,68.7 454,68.4 455,69.7 456,68.4 457,68.7 458,71.4 459,73.8 460,76.6 461,79.3 462,81.9 463,83.2 464,83.5 465,83.5 466,83.7 467,83.9 468,84.1 469,84.3 470,84.5 471,84.7 472,84.7 473,84.7 474,84.7 475,84.7 476,84.7 477,84.7 478,84.7 479,84.7 480,84.7 481,84.7 482,84.7 483,84.7 484,84.7 485,84.7 486,84.7 487,84.7 488,84.7 489,84.7 490,84.7 491,84.7 492,84.7 493,78.6 494,73.3 495,77.1 496,79.5 497,81.5 498,82.4 499,83.4 500,83.8 501,84.2 502,84.5 503,84.6 504,84.7 505,84.7 506,84.7 507,84.7 508,84.7 509,84.7 510,84.7 511,84.7 512,84.7 513,84.7 514,84.7 515,84.7 516,84.7 517,84.7 518,84.7 519,84.7 520,84.7 521,84.7 522,84.7 523,84.7 524,84.7 525,84.7 526,84.7 527,84.7 528,84.7 529,84.7 530,84.7 531,84.7 532,84.7 533,84.7 534,76.7 535,69.0 536,68.5 537,69.1 538,69.2 539,69.8 540,70.0 541,68.3 542,70.0 543,69.1 544,68.1 545,69.3 546,71.9 547,74.0 548,74.7 549,76.7 550,78.5 551,79.8 L551,90.1 550,91.6 549,93.4 548,94.5 547,96.4 546,98.2 545,100.4 544,101.6 543,101.4 542,101.2 541,100.8 540,100.0 539,101.2 538,101.7 537,100.4 536,101.2 535,101.0 534,93.4 533,85.3 532,85.3 531,85.3 530,85.3 529,85.3 528,85.3 527,85.3 526,85.3 525,85.3 524,85.3 523,85.3 522,85.3 521,85.3 520,85.3 519,85.3 518,85.3 517,85.3 516,85.3 515,85.3 514,85.3 513,85.3 512,85.3 511,85.3 510,85.3 509,85.3 508,85.3 507,85.3 506,85.3 505,85.3 504,85.3 503,85.4 502,85.5 501,85.8 500,86.2 499,86.7 498,87.4 497,88.5 496,90.3 495,93.5 494,96.9 493,90.8 492,85.3 491,85.3 490,85.3 489,85.3 488,85.3 487,85.3 486,85.3 485,85.3 484,85.3 483,85.3 482,85.3 481,85.3 480,85.3 479,85.3 478,85.3 477,85.3 476,85.3 475,85.3 474,85.3 473,85.3 472,85.3 471,85.3 470,85.5 469,85.7 468,85.9 467,86.1 466,86.3 465,86.5 464,86.6 463,86.8 462,88.2 461,91.0 460,94.1 459,97.0 458,99.4 457,101.7 456,101.0 455,101.8 454,101.7 453,100.1 452,96.6 451,89.0 450,85.3 449,85.3 448,85.3 447,85.3 446,85.3 445,85.3 444,85.3 443,85.3 442,85.3 441,85.3 440,85.5 439,85.7 438,85.9 437,86.3 436,86.8 435,87.3 434,88.3 433,86.6 432,85.4 431,85.5 430,85.6 429,85.8 428,86.0 427,86.2 426,86.5 425,86.9 424,87.3 423,88.1 422,88.8 421,89.8 420,90.4 419,91.9 418,93.8 417,96.3 416,98.4 415,101.9 414,108.1 413,112.5 412,99.1 411,85.3 410,85.3 409,85.3 408,85.3 407,85.3 406,85.3 405,85.3 404,85.5 403,85.8 402,86.2 401,86.5 400,86.7 399,88.7 398,92.1 397,96.0 396,99.7 395,102.8 394,102.1 393,101.0 392,101.4 391,99.7 390,92.1 389,85.3 388,85.3 387,85.3 386,85.3 385,85.3 384,85.3 383,86.9 382,87.3 381,87.9 380,88.4 379,88.9 378,89.4 377,89.9 376,88.9 375,88.8 374,88.6 373,88.5 372,88.7 371,88.7 370,87.7 369,86.0 368,85.3 367,85.3 366,85.3 365,85.3 364,85.3 363,85.3 362,85.3 361,85.3 360,85.3 359,85.3 358,85.3 357,85.3 356,85.3 355,85.3 354,85.3 353,85.3 352,85.3 351,85.3 350,85.3 349,85.3 348,85.3 347,85.3 346,85.3 345,85.3 344,85.3 343,85.3 342,85.3 341,85.3 340,85.3 339,85.3 338,85.5 337,85.7 336,86.0 335,86.5 334,87.1 333,88.0 332,89.6 331,92.3 330,95.3 329,90.8 328,85.3 327,85.3 326,85.3 325,85.3 324,85.3 323,85.3 322,85.3 321,85.3 320,85.3 319,85.3 318,85.3 317,85.3 316,85.3 315,85.3 314,85.3 313,85.3 312,85.4 311,85.6 310,85.8 309,86.0 308,86.2 307,86.4 306,86.5 305,86.7 304,86.9 303,88.7 302,91.1 301,92.7 300,94.3 299,97.1 298,99.1 297,99.5 296,101.5 295,101.2 294,100.0 293,100.0 292,100.8 291,101.7 290,100.7 289,102.0 288,93.4 287,85.3 286,85.3 285,85.3 284,85.3 283,85.3 282,85.3 281,85.3 280,85.3 279,85.3 278,85.3 277,85.4 276,85.6 275,85.8 274,86.1 273,86.4 272,87.0 271,88.0 270,86.5 269,85.3 268,85.3 267,85.3 266,85.4 265,85.5 264,85.6 263,85.8 262,86.0 261,86.2 260,86.4 259,86.9 258,87.2 257,87.7 256,88.4 255,89.4 254,90.9 253,92.5 252,93.7 251,96.8 250,98.9 249,102.2 248,108.1 247,111.7 246,99.3 245,85.3 244,85.3 243,85.3 242,85.3 241,85.3 240,85.7 239,86.0 238,86.3 237,86.6 236,86.9 235,89.9 234,92.6 233,95.6 232,97.8 231,101.0 230,101.3 229,100.4 228,101.8 227,101.2 226,96.3 225,88.9 224,85.3 223,85.3 222,85.3 221,85.3 220,85.3 219,85.3 218,85.3 217,85.3 216,86.8 215,87.7 214,88.1 213,89.0 212,89.9 211,88.8 210,88.7 209,88.7 208,89.0 207,88.2 206,86.5 205,85.3 204,85.3 203,85.3 202,85.3 201,85.3 200,85.3 199,85.3 198,85.3 197,85.3 196,85.3 195,85.3 194,85.3 193,85.3 192,85.3 191,85.3 190,85.3 189,85.3 188,85.3 187,85.3 186,85.3 185,85.3 184,85.3 183,85.3 182,85.3 181,85.3 180,85.3 179,85.3 178,85.3 177,85.3 176,85.4 175,85.5 174,85.8 173,86.1 172,86.5 171,87.0 170,87.8 169,88.6 168,90.6 167,92.7 166,95.7 165,89.9 164,85.3 163,85.3 162,85.7 161,86.0 160,86.3 159,86.5 158,86.9 157,89.1 156,91.5 155,93.8 154,96.0 153,98.0 152,100.7 151,100.4 150,100.0 149,101.1 148,100.6 147,101.9 146,101.1 145,101.9 144,92.6 143,85.3 142,85.3 141,85.3 140,85.5 139,85.8 138,86.0 137,86.2 136,86.5 135,86.6 134,86.8 133,89.7 132,92.3 131,96.0 130,98.9 129,100.5 128,101.3 127,101.8 126,101.0 125,101.4 124,96.8 123,88.8 122,85.3 121,85.3 120,85.3 119,85.3 118,85.3 117,85.3 116,85.3 115,85.3 114,85.3 113,85.3 112,85.3 111,85.3 110,85.4 109,85.6 108,85.8 107,86.1 106,86.5 105,86.9 104,87.7 103,86.5 102,85.4 101,85.5 100,85.6 99,85.8 98,86.0 97,86.2 96,86.4 95,87.0 94,87.2 93,87.8 92,88.6 91,89.8 90,90.7 89,91.8 88,93.9 87,96.3 86,98.8 85,103.4 84,106.2 83,112.5 82,98.2 81,85.3 80,85.3 79,85.3 78,85.3 77,85.3 76,85.3 75,85.3 74,85.3 73,85.3 72,85.3 71,85.3 70,85.3 69,85.3 68,85.3 67,85.3 66,85.3 65,85.3 64,86.9 63,87.7 62,88.8 61,87.3 60,86.9 59,85.6 58,85.3 57,85.3 56,85.4 55,85.5 54,85.6 53,85.7 52,85.8 51,85.9 50,86.0 49,86.0 48,86.8 47,87.8 46,88.6 45,89.6 44,88.3 43,88.4 42,87.3 41,86.7 40,86.7 39,86.9 38,87.7 37,89.5 36,91.5 35,93.1 34,94.5 33,97.1 32,99.3 31,101.5 30,102.5 29,102.9 28,102.8 27,102.3 26,101.1 25,101.3 24,102.0 23,101.1 22,101.6 21,97.3 20,89.4 19,86.3 18,86.5 17,86.9 16,88.6 15,90.5 14,92.1 13,93.9 12,95.0 11,96.3 10,98.0 9,99.9 8,101.8 7,101.0 6,102.8 5,102.2 4,102.2 3,101.2 2,102.3 1,101.1 0,101.4Z" fill="#a07c9c" stroke="#a07c9c" stroke-width="0.45"/></g><rect x="0" y="0" width="551.5" height="2.2" fill="#f05c5c"/><rect x="0" y="56.8" width="551.5" height="2.8" fill="#0f8ad8"/><rect x="0" y="114" width="551.5" height="1" fill="#b8ccd8"/><rect x="0" y="115" width="551.5" height="15.5" fill="#dc8cd8"/><rect x="0" y="130.5" width="551.5" height="2.5" fill="#a8a8a8"/><rect x="1" y="120.5" width="9.5" height="10" fill="#585858" stroke="#9a9a9a" stroke-width="0.8"/><path d="M0 9.5L7 2.5H0z" fill="#4a4a4a"/><circle cx="1.8" cy="1.6" r="2.9" fill="#fff" stroke="#4a4a4a" stroke-width="0.9"/><circle cx="1.8" cy="58.2" r="2.9" fill="#fff" stroke="#4a4a4a" stroke-width="0.9"/></svg>
<div class="a t" style="left:211.60px;top:411.04px;font-size:12px;line-height:16px;color:#1a10d8;transform:scaleX(0.9883);transform-origin:0 50%;">Drum</div>
<svg class="a" style="left:199px;top:430px" width="551.5" height="104" viewBox="0 0 551.5 104"><g transform="translate(0,2)"><rect x="0" y="0" width="551.5" height="112.5" fill="#d0dbee"/><path d="M11.6 0V112.5M22.6 0V112.5M33.5 0V112.5M44.5 0V112.5M57.1 0V112.5M66.3 0V112.5M77.3 0V112.5M88.2 0V112.5M99.2 0V112.5M111.9 0V112.5M121.0 0V112.5M132.0 0V112.5M142.9 0V112.5M153.9 0V112.5M166.7 0V112.5M175.7 0V112.5M186.7 0V112.5M197.6 0V112.5M208.6 0V112.5M221.5 0V112.5M230.4 0V112.5M241.4 0V112.5M252.3 0V112.5M263.3 0V112.5M276.3 0V112.5M285.1 0V112.5M296.1 0V112.5M307.0 0V112.5M318.0 0V112.5M331.1 0V112.5M339.8 0V112.5M350.8 0V112.5M361.7 0V112.5M372.7 0V112.5M385.9 0V112.5M394.5 0V112.5M405.5 0V112.5M416.4 0V112.5M427.4 0V112.5M440.7 0V112.5M449.2 0V112.5M460.2 0V112.5M471.1 0V112.5M482.1 0V112.5M495.5 0V112.5M503.9 0V112.5M514.9 0V112.5M525.8 0V112.5M536.8 0V112.5M550.3 0V112.5" stroke="#c2cee2" stroke-width="1" fill="none"/><path d="M0,19.4 1,15.6 2,9.5 3,8.7 4,12.5 5,6.8 6,11.3 7,12.5 8,12.7 9,11.6 10,10.8 11,13.4 12,13.1 13,9.3 14,11.7 15,14.1 16,13.1 17,13.4 18,15.1 19,12.9 20,15.5 21,13.3 22,15.1 23,18.3 24,16.3 25,15.6 26,16.4 27,18.5 28,14.6 29,17.3 30,15.6 31,16.2 32,15.2 33,18.0 34,18.0 35,18.0 36,18.7 37,18.9 38,17.8 39,16.8 40,18.8 41,20.5 42,13.0 43,9.0 44,10.5 45,13.9 46,7.8 47,9.4 48,12.4 49,7.6 50,9.2 51,8.7 52,12.3 53,12.0 54,12.7 55,12.8 56,11.6 57,13.4 58,12.6 59,14.9 60,14.7 61,15.3 62,14.0 63,15.4 64,14.3 65,15.9 66,15.6 67,14.8 68,16.2 69,17.0 70,14.8 71,16.9 72,17.7 73,18.9 74,17.7 75,18.0 76,18.5 77,18.6 78,17.9 79,18.8 80,19.2 81,20.8 82,19.5 83,11.9 84,6.3 85,7.3 86,3.7 87,4.0 88,11.4 89,12.5 90,8.6 91,6.8 92,8.6 93,10.3 94,8.7 95,10.4 96,10.0 97,11.3 98,11.4 99,11.5 100,11.8 101,13.2 102,11.3 103,13.7 104,12.2 105,13.3 106,13.7 107,13.0 108,13.9 109,14.3 110,12.1 111,14.7 112,14.5 113,16.9 114,16.4 115,14.7 116,19.6 117,16.6 118,17.9 119,15.4 120,16.1 121,19.0 122,17.1 123,17.8 124,12.1 125,10.4 126,0.4 127,7.2 128,6.6 129,4.8 130,2.4 131,8.1 132,8.5 133,7.9 134,9.1 135,7.4 136,5.8 137,7.0 138,9.1 139,8.7 140,9.6 141,10.5 142,13.1 143,10.9 144,9.7 145,8.6 146,14.3 147,9.4 148,12.1 149,12.1 150,11.4 151,12.1 152,12.7 153,10.8 154,13.4 155,15.8 156,12.5 157,10.7 158,10.5 159,13.4 160,11.2 161,10.5 162,11.8 163,12.9 164,16.3 165,15.1 166,14.0 167,13.1 168,14.7 169,11.1 170,11.2 171,7.4 172,7.8 173,12.1 174,13.1 175,12.4 176,12.3 177,13.6 178,13.2 179,12.0 180,16.8 181,17.3 182,17.3 183,14.1 184,15.2 185,13.4 186,17.0 187,14.1 188,15.3 189,15.2 190,16.6 191,16.8 192,16.6 193,13.8 194,17.2 195,14.3 196,17.8 197,16.8 198,20.1 199,19.2 200,15.8 201,17.4 202,18.1 203,16.5 204,17.4 205,17.1 206,12.9 207,13.2 208,11.0 209,10.8 210,11.5 211,11.6 212,14.6 213,11.9 214,15.5 215,11.4 216,8.7 217,16.3 218,10.7 219,14.0 220,14.1 221,12.7 222,13.3 223,14.9 224,13.4 225,14.6 226,15.6 227,13.9 228,15.1 229,15.5 230,15.7 231,16.7 232,16.2 233,16.9 234,15.8 235,14.0 236,17.6 237,16.2 238,16.9 239,17.0 240,19.6 241,18.8 242,16.5 243,16.7 244,17.2 245,19.0 246,19.3 247,17.5 248,11.8 249,4.4 250,8.9 251,2.9 252,5.7 253,8.6 254,8.6 255,4.0 256,9.3 257,11.0 258,9.3 259,10.2 260,10.8 261,9.1 262,10.7 263,12.2 264,12.8 265,10.1 266,8.6 267,13.2 268,12.5 269,14.2 270,12.4 271,15.4 272,12.7 273,15.5 274,18.1 275,16.1 276,18.1 277,16.4 278,15.9 279,16.9 280,17.1 281,17.0 282,17.4 283,18.1 284,18.5 285,18.5 286,19.1 287,18.2 288,19.2 289,12.2 290,6.2 291,5.9 292,10.9 293,10.8 294,9.4 295,11.8 296,8.2 297,13.0 298,8.5 299,13.4 300,12.9 301,13.1 302,14.2 303,10.9 304,16.2 305,13.0 306,15.3 307,16.3 308,15.6 309,15.0 310,13.3 311,13.6 312,15.2 313,17.9 314,18.8 315,14.3 316,17.0 317,17.0 318,14.3 319,15.2 320,16.0 321,17.2 322,16.5 323,18.4 324,18.2 325,18.1 326,20.6 327,17.8 328,19.5 329,19.5 330,12.1 331,9.2 332,11.4 333,14.0 334,11.5 335,12.0 336,12.3 337,12.3 338,12.4 339,12.2 340,11.7 341,13.8 342,10.7 343,14.1 344,16.9 345,14.6 346,12.1 347,15.1 348,11.7 349,15.1 350,17.1 351,13.6 352,12.6 353,16.0 354,16.6 355,16.0 356,19.1 357,15.6 358,14.2 359,16.3 360,16.6 361,17.6 362,15.0 363,15.8 364,19.9 365,20.5 366,19.0 367,18.4 368,17.5 369,19.3 370,18.8 371,14.8 372,10.4 373,6.6 374,8.7 375,11.7 376,12.1 377,7.5 378,10.1 379,11.7 380,11.1 381,11.9 382,12.8 383,13.1 384,14.2 385,12.8 386,11.2 387,14.4 388,14.8 389,14.4 390,15.4 391,11.8 392,18.3 393,14.4 394,14.9 395,16.3 396,16.6 397,16.3 398,16.8 399,16.1 400,18.4 401,16.7 402,15.3 403,17.9 404,17.7 405,18.5 406,17.0 407,17.1 408,18.9 409,18.9 410,19.1 411,19.6 412,14.4 413,10.9 414,9.6 415,11.2 416,9.3 417,12.2 418,8.9 419,7.8 420,8.1 421,11.1 422,13.4 423,11.7 424,16.6 425,13.6 426,14.1 427,13.5 428,14.7 429,13.7 430,17.7 431,15.4 432,15.4 433,14.0 434,14.4 435,15.7 436,15.4 437,16.3 438,14.8 439,19.2 440,17.0 441,15.8 442,17.4 443,17.5 444,17.4 445,17.5 446,17.0 447,17.8 448,19.1 449,16.4 450,18.4 451,21.1 452,18.4 453,12.7 454,3.5 455,8.0 456,7.6 457,5.1 458,7.9 459,6.9 460,12.2 461,7.5 462,10.2 463,9.9 464,11.5 465,10.7 466,10.4 467,11.8 468,9.2 469,13.0 470,8.8 471,13.3 472,11.8 473,11.7 474,16.3 475,13.1 476,11.9 477,15.0 478,15.6 479,15.9 480,15.8 481,17.6 482,14.7 483,16.5 484,17.0 485,16.4 486,14.7 487,18.0 488,17.9 489,17.2 490,17.4 491,16.2 492,16.7 493,18.8 494,6.7 495,8.8 496,2.5 497,5.3 498,6.1 499,6.1 500,6.8 501,6.6 502,5.6 503,5.2 504,2.5 505,9.1 506,10.1 507,12.5 508,7.8 509,7.5 510,9.1 511,9.9 512,11.4 513,12.0 514,8.2 515,12.9 516,13.0 517,13.2 518,16.8 519,12.7 520,10.8 521,17.4 522,15.1 523,15.5 524,13.8 525,15.8 526,14.9 527,14.8 528,17.3 529,19.5 530,18.0 531,18.5 532,19.1 533,17.1 534,17.5 535,11.5 536,14.5 537,5.9 538,10.9 539,10.8 540,9.5 541,11.5 542,12.2 543,15.1 544,15.6 545,10.8 546,10.3 547,13.1 548,12.2 549,13.2 550,13.5 551,13.3 L551,40.3 550,44.8 549,41.3 548,45.6 547,42.1 546,43.9 545,44.1 544,42.6 543,41.0 542,46.8 541,46.2 540,45.1 539,44.0 538,41.4 537,44.6 536,43.6 535,40.7 534,34.2 533,38.2 532,34.8 531,38.5 530,39.4 529,38.0 528,38.2 527,39.9 526,37.8 525,42.7 524,39.9 523,38.4 522,40.1 521,43.0 520,41.3 519,41.3 518,42.3 517,40.7 516,43.3 515,40.1 514,44.0 513,45.9 512,44.0 511,48.6 510,45.6 509,46.2 508,46.2 507,50.9 506,46.4 505,47.6 504,47.7 503,47.6 502,49.1 501,48.4 500,48.9 499,54.1 498,50.0 497,51.7 496,51.2 495,55.5 494,45.9 493,38.4 492,38.5 491,38.2 490,35.1 489,35.0 488,38.2 487,38.0 486,40.3 485,38.4 484,38.2 483,42.1 482,39.4 481,41.7 480,39.7 479,42.5 478,40.4 477,39.5 476,43.4 475,40.9 474,41.5 473,43.6 472,43.2 471,42.0 470,39.5 469,43.5 468,43.0 467,48.3 466,44.7 465,44.0 464,46.1 463,47.0 462,47.9 461,46.7 460,51.3 459,47.3 458,50.5 457,49.8 456,48.8 455,49.6 454,48.4 453,42.4 452,36.8 451,38.3 450,36.9 449,36.3 448,36.8 447,37.1 446,37.4 445,38.9 444,39.4 443,37.9 442,37.8 441,40.1 440,36.5 439,38.6 438,39.6 437,42.0 436,37.2 435,39.2 434,39.8 433,42.1 432,39.7 431,41.6 430,43.2 429,42.8 428,41.0 427,38.4 426,41.3 425,41.6 424,46.3 423,44.2 422,42.4 421,43.1 420,39.9 419,42.2 418,45.0 417,43.7 416,44.0 415,44.8 414,45.0 413,45.2 412,39.9 411,35.8 410,37.3 409,36.3 408,39.1 407,38.9 406,37.2 405,37.0 404,39.7 403,39.3 402,38.4 401,37.8 400,38.3 399,38.1 398,41.5 397,40.9 396,39.2 395,42.2 394,39.2 393,40.3 392,41.7 391,41.9 390,43.1 389,40.9 388,40.8 387,40.7 386,44.9 385,38.9 384,43.8 383,39.3 382,43.4 381,42.2 380,44.1 379,44.3 378,45.8 377,40.1 376,44.1 375,45.5 374,47.3 373,45.7 372,41.4 371,40.1 370,37.8 369,36.0 368,36.1 367,37.0 366,38.1 365,39.7 364,39.6 363,38.5 362,39.0 361,37.7 360,37.4 359,37.9 358,38.1 357,38.9 356,39.4 355,41.2 354,42.2 353,40.9 352,39.4 351,39.0 350,43.4 349,43.9 348,40.7 347,40.7 346,40.7 345,41.0 344,43.5 343,43.2 342,42.2 341,44.2 340,42.2 339,42.9 338,46.9 337,44.3 336,43.5 335,40.3 334,43.8 333,48.5 332,45.0 331,45.1 330,40.2 329,36.4 328,35.4 327,37.0 326,36.6 325,37.5 324,38.3 323,38.2 322,35.2 321,36.8 320,37.8 319,37.6 318,36.2 317,40.1 316,40.0 315,40.7 314,41.3 313,40.4 312,39.2 311,40.7 310,40.4 309,40.0 308,42.2 307,40.4 306,40.8 305,42.7 304,39.2 303,41.4 302,41.5 301,46.1 300,42.2 299,46.4 298,43.2 297,44.0 296,41.4 295,44.0 294,43.5 293,44.6 292,47.8 291,44.3 290,47.0 289,40.7 288,36.3 287,36.2 286,37.4 285,38.6 284,37.4 283,37.1 282,38.4 281,38.1 280,38.2 279,38.5 278,40.3 277,41.2 276,39.9 275,39.7 274,42.1 273,40.6 272,41.3 271,41.1 270,43.0 269,44.7 268,42.0 267,44.2 266,42.8 265,45.6 264,42.9 263,47.9 262,43.7 261,45.8 260,44.4 259,42.6 258,50.1 257,50.6 256,49.7 255,46.5 254,48.7 253,50.2 252,51.6 251,43.8 250,54.5 249,50.4 248,44.3 247,34.7 246,36.6 245,36.3 244,38.5 243,37.7 242,37.1 241,37.9 240,37.5 239,37.2 238,37.4 237,40.7 236,37.8 235,36.0 234,39.1 233,38.8 232,41.3 231,39.7 230,39.2 229,41.7 228,39.9 227,43.0 226,41.5 225,41.1 224,42.3 223,41.1 222,41.3 221,42.7 220,43.6 219,42.9 218,44.1 217,45.5 216,43.0 215,43.8 214,42.8 213,43.1 212,44.1 211,40.7 210,47.9 209,44.3 208,44.8 207,42.6 206,41.0 205,37.7 204,36.2 203,37.9 202,37.2 201,38.2 200,37.2 199,38.5 198,38.6 197,37.5 196,40.1 195,39.2 194,40.3 193,41.0 192,39.0 191,39.6 190,41.3 189,39.4 188,39.4 187,40.9 186,39.7 185,40.0 184,37.8 183,40.4 182,40.6 181,41.8 180,43.4 179,38.5 178,45.5 177,40.1 176,42.9 175,45.1 174,43.5 173,42.1 172,43.6 171,44.1 170,43.7 169,44.1 168,49.1 167,48.3 166,40.1 165,41.5 164,42.1 163,42.8 162,41.6 161,40.9 160,41.1 159,42.8 158,42.2 157,42.7 156,42.8 155,42.5 154,45.1 153,45.5 152,39.6 151,42.4 150,43.4 149,40.2 148,43.3 147,43.9 146,45.2 145,44.5 144,44.7 143,44.6 142,48.9 141,46.4 140,45.4 139,45.7 138,46.0 137,50.1 136,46.8 135,48.8 134,50.8 133,49.2 132,47.8 131,51.0 130,49.3 129,49.2 128,48.7 127,52.7 126,50.0 125,43.6 124,46.0 123,36.4 122,36.2 121,38.9 120,38.7 119,37.6 118,40.0 117,37.6 116,36.1 115,38.3 114,40.9 113,39.7 112,39.3 111,39.3 110,39.4 109,42.3 108,40.4 107,41.8 106,42.5 105,41.6 104,41.6 103,43.8 102,43.3 101,42.7 100,46.3 99,44.0 98,43.6 97,44.8 96,44.8 95,45.3 94,42.9 93,49.8 92,47.1 91,47.6 90,47.6 89,42.9 88,53.7 87,47.7 86,53.0 85,49.6 84,53.4 83,43.1 82,37.7 81,38.2 80,36.3 79,37.5 78,35.5 77,39.0 76,38.3 75,38.6 74,37.3 73,37.7 72,40.5 71,38.1 70,38.5 69,38.4 68,39.2 67,41.8 66,39.5 65,39.2 64,43.1 63,39.6 62,39.0 61,42.6 60,42.7 59,41.4 58,43.7 57,41.6 56,42.4 55,41.8 54,42.5 53,42.2 52,42.8 51,44.1 50,44.5 49,43.5 48,43.3 47,43.6 46,46.1 45,44.2 44,47.4 43,47.9 42,37.5 41,38.3 40,36.0 39,38.0 38,37.0 37,37.3 36,37.6 35,38.4 34,37.3 33,37.3 32,37.5 31,36.2 30,39.7 29,36.7 28,39.8 27,38.6 26,39.1 25,42.3 24,40.8 23,39.4 22,40.6 21,40.0 20,41.0 19,40.5 18,40.5 17,42.1 16,43.8 15,41.3 14,42.8 13,43.5 12,44.0 11,44.9 10,42.5 9,43.2 8,47.4 7,43.5 6,47.9 5,41.0 4,44.1 3,49.3 2,44.9 1,39.9 0,38.3Z" fill="#6e88b0" stroke="#6e88b0" stroke-width="0.45"/><path d="M0,74.5 1,73.0 2,67.1 3,68.6 4,68.5 5,69.4 6,69.7 7,69.7 8,72.1 9,68.5 10,73.0 11,70.9 12,71.1 13,68.3 14,71.4 15,71.2 16,72.1 17,71.1 18,71.3 19,72.8 20,73.0 21,73.2 22,73.4 23,72.5 24,73.2 25,71.8 26,70.8 27,73.3 28,74.5 29,73.1 30,72.8 31,72.2 32,74.7 33,74.9 34,75.4 35,76.0 36,76.0 37,77.5 38,76.5 39,74.1 40,75.8 41,77.1 42,73.1 43,68.0 44,64.3 45,63.7 46,69.4 47,66.3 48,66.5 49,69.9 50,70.3 51,70.6 52,70.6 53,69.4 54,71.4 55,71.6 56,70.9 57,71.7 58,68.1 59,72.3 60,71.7 61,72.9 62,73.1 63,71.9 64,70.2 65,76.1 66,70.4 67,75.6 68,73.7 69,76.7 70,73.4 71,75.0 72,74.5 73,75.4 74,75.6 75,77.5 76,73.5 77,75.1 78,76.3 79,76.5 80,76.4 81,76.0 82,76.2 83,68.4 84,64.4 85,60.1 86,64.9 87,61.8 88,61.6 89,70.2 90,64.1 91,67.2 92,65.6 93,68.0 94,66.6 95,68.3 96,69.1 97,68.0 98,69.7 99,71.3 100,70.5 101,66.6 102,66.8 103,71.3 104,71.5 105,71.9 106,68.8 107,72.1 108,71.0 109,73.1 110,72.4 111,69.9 112,73.6 113,74.0 114,74.5 115,74.6 116,74.8 117,73.4 118,74.9 119,74.4 120,75.2 121,77.9 122,76.8 123,77.0 124,67.8 125,66.8 126,63.9 127,59.3 128,59.6 129,63.3 130,62.5 131,59.6 132,65.3 133,62.6 134,66.6 135,61.1 136,64.8 137,66.7 138,68.9 139,67.0 140,65.6 141,68.1 142,64.8 143,64.8 144,68.7 145,65.7 146,72.4 147,68.8 148,67.6 149,69.5 150,70.0 151,70.3 152,70.5 153,69.8 154,70.1 155,70.9 156,68.8 157,67.4 158,70.3 159,69.6 160,69.7 161,72.2 162,70.5 163,72.3 164,71.4 165,72.2 166,73.3 167,66.4 168,68.2 169,69.1 170,64.7 171,66.1 172,66.2 173,69.5 174,70.6 175,70.5 176,70.9 177,71.3 178,71.4 179,74.3 180,72.8 181,68.3 182,71.4 183,72.2 184,69.9 185,73.0 186,74.6 187,71.9 188,72.7 189,71.1 190,76.2 191,74.2 192,73.2 193,73.1 194,72.9 195,72.0 196,73.8 197,75.0 198,75.6 199,77.7 200,76.0 201,75.8 202,75.8 203,75.3 204,75.3 205,77.1 206,72.8 207,70.3 208,65.6 209,68.1 210,66.5 211,69.6 212,69.0 213,70.0 214,70.0 215,66.5 216,70.8 217,69.6 218,67.4 219,72.4 220,71.4 221,69.5 222,71.6 223,72.3 224,69.6 225,72.9 226,70.7 227,75.6 228,73.1 229,71.0 230,72.7 231,74.0 232,72.2 233,71.9 234,73.0 235,74.9 236,73.8 237,74.6 238,74.7 239,75.6 240,73.5 241,76.1 242,75.5 243,76.2 244,74.4 245,74.7 246,75.3 247,75.5 248,67.7 249,62.8 250,60.2 251,67.7 252,59.8 253,69.8 254,62.8 255,66.3 256,68.8 257,67.8 258,65.6 259,67.0 260,67.1 261,68.7 262,72.4 263,68.9 264,67.4 265,65.6 266,70.6 267,70.7 268,71.4 269,68.5 270,72.5 271,72.1 272,71.5 273,75.2 274,69.9 275,70.6 276,73.9 277,73.9 278,76.5 279,74.7 280,72.8 281,75.4 282,75.4 283,75.8 284,74.7 285,74.1 286,76.7 287,76.0 288,77.0 289,72.1 290,67.1 291,67.4 292,69.7 293,69.0 294,64.5 295,65.6 296,69.6 297,70.5 298,69.7 299,68.2 300,71.1 301,71.4 302,72.7 303,69.4 304,70.0 305,71.1 306,68.5 307,68.9 308,75.4 309,73.3 310,71.0 311,73.6 312,71.5 313,74.1 314,72.1 315,71.9 316,74.7 317,73.1 318,76.0 319,72.6 320,72.7 321,74.9 322,75.5 323,74.3 324,76.2 325,76.0 326,77.3 327,76.4 328,76.1 329,76.3 330,71.2 331,67.2 332,72.1 333,67.6 334,65.4 335,69.7 336,69.8 337,67.7 338,72.7 339,70.8 340,70.6 341,71.2 342,70.4 343,71.6 344,69.2 345,67.9 346,71.6 347,72.6 348,71.8 349,72.4 350,73.3 351,71.3 352,70.1 353,70.5 354,71.8 355,74.3 356,74.4 357,72.3 358,74.3 359,74.8 360,72.7 361,73.8 362,77.3 363,75.5 364,73.0 365,75.4 366,75.7 367,75.2 368,76.8 369,78.6 370,77.0 371,73.2 372,67.5 373,68.2 374,65.5 375,65.6 376,68.4 377,72.3 378,68.9 379,70.3 380,70.4 381,71.0 382,71.2 383,68.4 384,71.6 385,74.5 386,69.6 387,72.2 388,71.1 389,72.4 390,72.0 391,70.4 392,72.0 393,75.9 394,70.5 395,72.0 396,72.2 397,74.2 398,72.7 399,74.2 400,74.8 401,73.7 402,73.7 403,75.6 404,75.4 405,76.0 406,77.6 407,76.4 408,77.6 409,74.6 410,76.2 411,77.7 412,72.7 413,65.2 414,68.8 415,68.5 416,66.9 417,68.4 418,69.2 419,68.9 420,72.8 421,72.2 422,70.4 423,70.9 424,72.0 425,70.6 426,68.6 427,69.1 428,71.7 429,72.6 430,72.4 431,69.0 432,72.4 433,75.7 434,73.6 435,70.2 436,74.0 437,74.2 438,72.3 439,72.7 440,73.0 441,74.7 442,75.1 443,75.1 444,73.3 445,72.8 446,73.4 447,76.2 448,73.4 449,76.2 450,76.1 451,76.3 452,76.5 453,70.2 454,64.2 455,64.7 456,66.1 457,61.4 458,63.6 459,62.8 460,66.1 461,66.7 462,63.5 463,66.6 464,66.4 465,67.0 466,65.3 467,65.8 468,67.5 469,69.9 470,70.8 471,69.1 472,70.7 473,68.4 474,71.9 475,72.1 476,70.2 477,72.3 478,71.7 479,73.4 480,70.4 481,72.5 482,74.2 483,74.5 484,71.6 485,73.6 486,75.3 487,77.4 488,74.3 489,76.0 490,74.6 491,75.3 492,76.6 493,76.8 494,67.6 495,61.3 496,60.7 497,62.7 498,57.7 499,62.6 500,64.5 501,68.5 502,63.7 503,65.4 504,60.6 505,66.7 506,67.1 507,66.5 508,66.2 509,65.4 510,70.6 511,68.0 512,66.5 513,69.8 514,70.0 515,69.1 516,72.7 517,71.2 518,71.5 519,74.6 520,69.8 521,70.5 522,72.2 523,73.1 524,70.3 525,74.8 526,74.1 527,74.5 528,72.9 529,74.8 530,72.9 531,74.7 532,78.0 533,76.7 534,75.5 535,71.5 536,73.3 537,65.0 538,68.9 539,69.2 540,69.2 541,69.4 542,65.5 543,70.4 544,68.6 545,67.4 546,66.4 547,71.0 548,71.4 549,68.1 550,69.2 551,70.1 L551,98.3 550,99.5 549,103.3 548,101.7 547,99.3 546,99.9 545,102.5 544,100.6 543,97.4 542,104.6 541,105.0 540,102.4 539,103.7 538,102.4 537,105.8 536,99.0 535,100.6 534,93.9 533,95.8 532,94.1 531,94.4 530,95.2 529,98.3 528,96.6 527,93.6 526,99.4 525,97.2 524,97.2 523,97.2 522,98.6 521,101.4 520,99.3 519,102.8 518,101.5 517,100.1 516,97.0 515,97.9 514,100.5 513,101.4 512,104.2 511,101.8 510,104.0 509,106.3 508,104.9 507,109.1 506,106.6 505,101.9 504,107.9 503,101.3 502,109.8 501,107.6 500,107.5 499,107.2 498,113.0 497,108.3 496,108.8 495,106.4 494,106.0 493,93.8 492,94.0 491,94.5 490,95.3 489,94.7 488,92.8 487,96.4 486,96.3 485,95.9 484,95.8 483,96.0 482,99.0 481,97.2 480,97.0 479,100.9 478,99.4 477,97.7 476,98.6 475,99.6 474,98.6 473,100.8 472,100.4 471,99.9 470,104.6 469,100.7 468,104.0 467,101.5 466,102.6 465,102.5 464,102.5 463,103.9 462,102.6 461,108.5 460,104.8 459,108.3 458,103.0 457,106.5 456,102.4 455,106.0 454,111.3 453,102.9 452,93.9 451,94.3 450,93.6 449,95.6 448,92.4 447,93.0 446,97.2 445,96.4 444,95.3 443,96.7 442,98.6 441,97.7 440,99.1 439,95.5 438,93.8 437,96.3 436,97.9 435,100.4 434,97.6 433,97.1 432,97.7 431,97.6 430,99.2 429,98.3 428,98.5 427,99.4 426,96.2 425,101.6 424,101.0 423,101.0 422,101.7 421,101.0 420,101.8 419,99.6 418,103.0 417,104.8 416,105.8 415,103.7 414,103.6 413,103.2 412,100.9 411,95.5 410,95.4 409,93.6 408,93.8 407,94.9 406,96.4 405,95.6 404,95.5 403,97.5 402,95.3 401,97.2 400,94.7 399,96.0 398,98.2 397,96.3 396,97.0 395,95.2 394,98.3 393,100.2 392,100.9 391,99.1 390,97.6 389,96.7 388,99.1 387,98.5 386,99.4 385,99.0 384,99.2 383,99.2 382,101.6 381,99.9 380,103.0 379,101.3 378,97.5 377,102.0 376,102.1 375,98.1 374,105.1 373,107.5 372,102.3 371,99.5 370,93.3 369,93.9 368,93.7 367,94.6 366,95.7 365,95.1 364,94.8 363,95.1 362,97.0 361,95.6 360,96.2 359,95.5 358,94.1 357,99.1 356,97.2 355,97.2 354,98.0 353,94.9 352,100.4 351,94.7 350,97.4 349,99.6 348,100.1 347,98.7 346,99.4 345,100.7 344,98.7 343,98.9 342,96.8 341,98.3 340,97.8 339,97.0 338,102.3 337,104.9 336,100.8 335,105.2 334,101.3 333,101.6 332,105.3 331,105.6 330,99.5 329,92.3 328,94.9 327,95.8 326,94.1 325,94.0 324,94.9 323,96.8 322,95.0 321,94.7 320,96.3 319,95.6 318,97.0 317,94.8 316,96.5 315,97.8 314,96.3 313,96.4 312,97.8 311,94.9 310,97.4 309,97.4 308,97.7 307,100.1 306,95.4 305,98.2 304,98.5 303,102.1 302,99.4 301,101.1 300,99.9 299,96.8 298,102.5 297,103.4 296,104.3 295,100.8 294,103.8 293,101.9 292,104.1 291,104.5 290,104.1 289,100.4 288,92.1 287,94.1 286,96.0 285,95.2 284,94.5 283,95.9 282,95.1 281,95.2 280,97.9 279,95.4 278,96.4 277,97.2 276,94.5 275,100.7 274,97.3 273,97.7 272,99.3 271,99.8 270,100.5 269,98.9 268,103.7 267,101.5 266,104.3 265,102.0 264,103.7 263,100.9 262,98.9 261,104.5 260,104.5 259,102.2 258,102.7 257,106.9 256,103.3 255,104.9 254,108.8 253,108.9 252,101.1 251,108.3 250,109.1 249,106.6 248,102.6 247,95.8 246,94.6 245,93.5 244,94.0 243,95.0 242,94.8 241,94.6 240,96.2 239,94.9 238,95.1 237,93.7 236,96.3 235,93.7 234,96.3 233,96.9 232,94.9 231,96.5 230,97.6 229,96.9 228,99.2 227,97.7 226,95.0 225,98.2 224,102.1 223,101.2 222,99.3 221,101.2 220,99.8 219,102.1 218,101.1 217,100.0 216,97.9 215,101.1 214,101.7 213,100.5 212,101.1 211,106.2 210,102.2 209,102.8 208,103.3 207,97.4 206,100.0 205,94.1 204,92.5 203,93.7 202,94.7 201,95.2 200,94.3 199,96.7 198,94.7 197,97.0 196,97.4 195,98.4 194,96.7 193,96.3 192,97.7 191,97.9 190,96.9 189,96.5 188,96.8 187,98.5 186,97.2 185,97.4 184,98.2 183,98.2 182,98.1 181,99.0 180,99.7 179,97.5 178,99.2 177,100.4 176,101.6 175,101.4 174,103.8 173,100.4 172,102.5 171,100.9 170,106.1 169,101.5 168,102.5 167,102.1 166,97.8 165,99.1 164,98.0 163,98.1 162,98.7 161,98.5 160,97.4 159,99.1 158,99.3 157,99.6 156,99.4 155,99.6 154,101.1 153,102.8 152,102.3 151,104.9 150,101.9 149,102.3 148,102.1 147,102.1 146,102.0 145,98.7 144,102.5 143,105.8 142,107.5 141,105.9 140,102.8 139,104.4 138,103.3 137,103.5 136,105.5 135,106.6 134,104.1 133,105.4 132,104.8 131,101.4 130,106.1 129,107.3 128,105.9 127,109.5 126,103.2 125,101.8 124,102.6 123,95.4 122,96.5 121,94.8 120,95.0 119,94.5 118,96.2 117,95.0 116,95.4 115,99.0 114,94.4 113,96.9 112,98.2 111,98.0 110,97.1 109,100.6 108,99.5 107,95.5 106,98.4 105,100.1 104,99.0 103,100.3 102,103.3 101,101.4 100,102.1 99,101.9 98,101.0 97,102.5 96,102.4 95,103.2 94,107.3 93,105.2 92,103.2 91,104.3 90,104.6 89,106.9 88,110.0 87,106.8 86,107.4 85,107.6 84,108.4 83,101.1 82,95.9 81,95.5 80,96.3 79,94.0 78,92.3 77,95.4 76,93.3 75,97.0 74,94.8 73,96.3 72,96.4 71,97.6 70,99.0 69,95.9 68,96.4 67,97.4 66,94.6 65,96.7 64,97.1 63,97.2 62,95.1 61,98.4 60,101.8 59,100.4 58,98.3 57,101.6 56,98.8 55,100.2 54,102.8 53,103.0 52,103.9 51,97.9 50,104.1 49,97.5 48,101.9 47,101.1 46,102.3 45,101.7 44,102.3 43,107.2 42,99.7 41,95.7 40,94.4 39,94.2 38,94.2 37,95.9 36,94.6 35,94.4 34,95.4 33,94.8 32,93.8 31,93.7 30,95.6 29,97.5 28,97.6 27,96.7 26,99.8 25,97.6 24,97.8 23,97.3 22,99.5 21,97.4 20,97.7 19,98.3 18,98.1 17,101.4 16,98.8 15,98.7 14,100.5 13,102.5 12,100.0 11,103.7 10,100.0 9,102.5 8,102.1 7,104.3 6,101.3 5,105.1 4,102.6 3,101.9 2,102.3 1,96.3 0,92.9Z" fill="#6e88b0" stroke="#6e88b0" stroke-width="0.45"/></g><rect x="0" y="0" width="551.5" height="2.2" fill="#f05c5c"/><rect x="0" y="56.8" width="551.5" height="2.8" fill="#0f8ad8"/><rect x="0" y="114" width="551.5" height="1" fill="#b8ccd8"/><rect x="0" y="115" width="551.5" height="15.5" fill="#78a8f4"/><rect x="0" y="130.5" width="551.5" height="2.5" fill="#a8a8a8"/><rect x="1" y="120.5" width="9.5" height="10" fill="#585858" stroke="#9a9a9a" stroke-width="0.8"/><path d="M0 9.5L7 2.5H0z" fill="#4a4a4a"/><circle cx="1.8" cy="1.6" r="2.9" fill="#fff" stroke="#4a4a4a" stroke-width="0.9"/><circle cx="1.8" cy="58.2" r="2.9" fill="#fff" stroke="#4a4a4a" stroke-width="0.9"/></svg>
<div class="a" style="left:199.2px;top:127px;width:1.2px;height:407px;background:#28b428;"></div>
<svg class="a" style="left:199px;top:127px;" width="15" height="17" viewBox="0 0 15 17"><path d="M0 0h7.5L14 8 7.5 16H0z" fill="#00b000"/></svg>
<div class="a" style="left:383.8px;top:150px;width:2.4px;height:384px;background:#d8d000;"></div>
<svg class="a" style="left:375px;top:143.5px;" width="21" height="19" viewBox="0 0 21 19"><path d="M0.5 0.5h20v9L10.5 18.5 0.5 9.5z" fill="#f8e800" stroke="#e0d000" stroke-width="0.8"/><path d="M10.1 0.5v18.500" stroke="#dcd200" stroke-width="2"/></svg>
<div class="a" style="left:750px;top:121px;width:15px;height:367px;background:#e2e2e2;border:1px solid #aaaaaa;box-sizing:border-box;"></div>
<svg class="a" style="left:754px;top:125px;" width="8" height="7" viewBox="0 0 8 7"><path d="M4 0L8 7H0z" fill="#8c8c8c"/></svg>
<svg class="a" style="left:754px;top:478px;" width="8" height="7" viewBox="0 0 8 7"><path d="M4 7L8 0H0z" fill="#5a5a5a"/></svg>
<div class="a" style="left:753.5px;top:137px;width:8.5px;height:313px;background:#b4b4b4;border-radius:4.5px;"></div>
<div class="a" style="left:751px;top:490px;width:13px;height:13px;background:#e8e8e8;border:1px solid #a0a0a0;box-sizing:border-box;"></div>
<svg class="a" style="left:751px;top:490.5px;" width="13" height="12.5" viewBox="0 0 13 12.5"><path d="M3 6.2h7M6.5 2.7v7" stroke="#5a5a5a" stroke-width="1"/></svg>
<div class="a" style="left:751px;top:505px;width:13px;height:13px;background:#e8e8e8;border:1px solid #a0a0a0;box-sizing:border-box;"></div>
<svg class="a" style="left:751px;top:505px;" width="13" height="12.5" viewBox="0 0 13 12.5"><path d="M3.5 2.7v7M9.5 2.7v7" stroke="#6a6a6a" stroke-width="1"/><path d="M6.5 4v1.5M6.5 7v1.5" stroke="#6a6a6a" stroke-width="1"/></svg>
<div class="a" style="left:751px;top:520px;width:13px;height:12px;background:#e8e8e8;border:1px solid #a0a0a0;box-sizing:border-box;"></div>
<svg class="a" style="left:751px;top:519.5px;" width="13" height="12.5" viewBox="0 0 13 12.5"><path d="M3 6.2h7" stroke="#5a5a5a" stroke-width="1"/></svg>
<div class="a" style="left:30px;top:534px;width:721px;height:1px;background:#b0b0b0;"></div>
<svg class="a" style="left:33px;top:538px;" width="7.5" height="7.5" viewBox="0 0 7.5 7.5"><path d="M0 3.750L7.500 0v7.500z" fill="#6e6e6e"/></svg>
<div class="a" style="left:29.5px;top:534px;width:1px;height:14.5px;background:#b0b0b0;"></div>
<div class="a" style="left:44px;top:537.5px;width:261.5px;height:8.5px;background:#b4b4b4;border-radius:4.5px;"></div>
<svg class="a" style="left:694px;top:538px;" width="8" height="7.5" viewBox="0 0 8 7.5"><path d="M8 3.750L1 0v7.500z" fill="#6e6e6e"/><path d="M0.500 0v7.500" stroke="#6e6e6e"/></svg>
<div class="a" style="left:30px;top:547.5px;width:673px;height:1px;background:#b8b8b8;"></div>
<div class="a" style="left:703px;top:535px;width:1px;height:13px;background:#b8b8b8;"></div>
<div class="a" style="left:706px;top:536px;width:13px;height:12px;background:#e8e8e8;border:1px solid #a0a0a0;box-sizing:border-box;"></div>
<svg class="a" style="left:706px;top:535.5px;" width="13" height="12.5" viewBox="0 0 13 12.5"><path d="M3 6.2h7M6.5 2.7v7" stroke="#5a5a5a" stroke-width="1"/></svg>
<div class="a" style="left:721px;top:536px;width:13px;height:12px;background:#e8e8e8;border:1px solid #a0a0a0;box-sizing:border-box;"></div>
<svg class="a" style="left:721px;top:535.5px;" width="13" height="12.5" viewBox="0 0 13 12.5"><path d="M3.5 2.7v7M9.5 2.7v7" stroke="#6a6a6a" stroke-width="1"/><path d="M6.5 4v1.5M6.5 7v1.5" stroke="#6a6a6a" stroke-width="1"/></svg>
<div class="a" style="left:736px;top:536px;width:12px;height:12px;background:#e8e8e8;border:1px solid #a0a0a0;box-sizing:border-box;"></div>
<svg class="a" style="left:735.5px;top:535.5px;" width="13" height="12.5" viewBox="0 0 13 12.5"><path d="M3 6.2h7" stroke="#5a5a5a" stroke-width="1"/></svg>
<div class="a" style="left:17px;top:562px;width:756px;height:2.4px;background:#fafafa;"></div>
<div class="a" style="left:17px;top:564.4px;width:756px;height:1.9px;background:#a0a0a0;"></div>
<div class="a" style="left:21px;top:571px;width:752px;height:262px;border:1px solid #9c9c9c;box-sizing:border-box;"></div>
<div class="a" style="left:29px;top:580px;width:338px;height:22px;background:#eeeeee;border:1px solid #b0b0b0;box-sizing:border-box;"></div>
<div class="a t" style="left:34.50px;top:583.04px;font-size:12px;line-height:16px;color:#101010;transform:scaleX(0.9856);transform-origin:0 50%;">Time Stretch (Custom)</div>
<div class="a" style="left:371.5px;top:579.5px;width:1px;height:22.5px;background:#a8a8a8;"></div>
<div class="a" style="left:377px;top:580px;width:23px;height:22px;background:#a4a4a4;border:1px solid #989898;box-sizing:border-box;"></div>
<svg class="a" style="left:381px;top:583.5px;" width="15" height="14" viewBox="0 0 15 14"><path d="M7.5 0.3C3.4 0.3 0.3 3.3 0.3 7s3.1 6.7 7.2 6.7c1 0 1.5-.6 1.5-1.3 0-.9-.8-1.2-.8-2.1 0-.8.7-1.4 1.6-1.4H11.600c1.800 0 3.100-1.300 3.100-3.100C14.700 2.700 11.500.3 7.500.3z" fill="#1e1e1e"/><circle cx="3.400" cy="7" r="1.150" fill="#a4a4a4"/><circle cx="5.300" cy="3.800" r="1.150" fill="#a4a4a4"/><circle cx="9" cy="3.300" r="1.150" fill="#a4a4a4"/><circle cx="11.800" cy="5.600" r="1.150" fill="#a4a4a4"/></svg>
<div class="a" style="left:404px;top:583px;width:4px;height:15px;background:#e4e4e4;border:1px solid #b4b4b4;box-sizing:border-box;border-radius:2px;"></div>
<div class="a" style="left:412px;top:585px;width:12px;height:12px;background:#3c3c3c;border:1px solid #2a2a2a;box-sizing:border-box;border-radius:1px;"></div>
<svg class="a" style="left:411.6px;top:585px;" width="12" height="12" viewBox="0 0 12 12"><path d="M2.600 6.200l2.400 2.500L9.500 3.300" fill="none" stroke="#fff" stroke-width="1.900"/></svg>
<div class="a t" style="left:427.00px;top:583.04px;font-size:12px;line-height:16px;color:#1e1e1e;transform:scaleX(1.0135);transform-origin:0 50%;">Inclusion</div>
<div class="a" style="left:499px;top:580px;width:61px;height:22px;background:#ececec;border:1px solid #a4a4a4;box-sizing:border-box;border-radius:3px;"></div>
<svg class="a" style="left:504px;top:584px;" width="14" height="13" viewBox="0 0 14 13"><g fill="#2a2a2a"><circle cx="3" cy="6.500" r="2.700"/><circle cx="11.500" cy="1.800" r="1.800"/><circle cx="11.500" cy="11.200" r="1.800"/></g><path d="M11.500 1.800L5 6.500l6.500 4.700" fill="none" stroke="#2a2a2a" stroke-width="1.100"/></svg>
<div class="a t" style="left:537.26px;top:582.04px;font-size:12px;line-height:16px;color:#1e1e1e;transform:scaleX(0.9700);transform-origin:0 50%;">1</div>
<div class="a" style="left:564px;top:580px;width:201px;height:22px;background:#eeeeee;border:1px solid #b0b0b0;box-sizing:border-box;"></div>
<div class="a t" style="left:571.50px;top:582.04px;font-size:12px;line-height:16px;color:#a8a8a8;transform:scaleX(0.9252);transform-origin:0 50%;font-style:italic;">Notes</div>
<div class="a" style="left:29px;top:608.5px;width:736px;height:1px;background:#acacac;"></div>
<div class="a" style="left:29px;top:636.5px;width:736px;height:1px;background:#acacac;"></div>
<div class="a" style="left:114px;top:616px;width:42px;height:20px;background:#c0c0c0;border:1px solid #a8a8a8;box-sizing:border-box;"></div>
<div class="a" style="left:156px;top:616px;width:48px;height:20px;background:#c0c0c0;border:1px solid #a8a8a8;box-sizing:border-box;"></div>
<div class="a" style="left:31px;top:616px;width:83px;height:22px;background:#dcdcdc;border:1px solid #8a8a8a;box-sizing:border-box;border-bottom:none;"></div>
<div class="a t" style="left:39.60px;top:619.04px;font-size:12px;line-height:16px;color:#1e1e1e;transform:scaleX(0.9621);transform-origin:0 50%;">Time Stretch</div>
<div class="a t" style="left:121.20px;top:619.04px;font-size:12px;line-height:16px;color:#3a3a3a;transform:scaleX(0.8196);transform-origin:0 50%;">RTPC</div>
<div class="a t" style="left:164.00px;top:619.04px;font-size:12px;line-height:16px;color:#3a3a3a;transform:scaleX(0.9118);transform-origin:0 50%;">States</div>
<div class="a" style="left:690px;top:614px;width:24px;height:24px;background:#84c6fc;border:1px solid #7e9cb8;box-sizing:border-box;border-radius:3px;"></div>
<div class="a" style="left:696px;top:620px;width:14px;height:12px;background:#585858;border:1px solid #3a3a3a;box-sizing:border-box;"></div>
<div class="a" style="left:716px;top:614px;width:24px;height:24px;background:#ececec;border:1px solid #a4a4a4;box-sizing:border-box;border-radius:3px;"></div>
<div class="a" style="left:720px;top:620px;width:14px;height:12px;background:#d4d4d4;border:1px solid #3a3a3a;box-sizing:border-box;"></div>
<div class="a" style="left:720.5px;top:620.5px;width:7px;height:11px;background:#585858;"></div>
<div class="a" style="left:741px;top:614px;width:24px;height:24px;background:#ececec;border:1px solid #a4a4a4;box-sizing:border-box;border-radius:3px;"></div>
<div class="a" style="left:746px;top:620px;width:13px;height:13px;background:#d4d4d4;border:1px solid #3a3a3a;box-sizing:border-box;"></div>
<div class="a" style="left:746.5px;top:619.5px;width:12.5px;height:6.5px;background:#585858;"></div>
<div class="a" style="left:33px;top:647px;width:252px;height:66px;border:1px solid #b0b0b0;box-sizing:border-box;border-radius:5px;"></div>
<div class="a" style="left:43.5px;top:640px;width:29.5px;height:14px;background:#dcdcdc;"></div>
<div class="a t" style="left:45.50px;top:640.04px;font-size:12px;line-height:16px;color:#2a2a2a;transform:scaleX(0.9720);transform-origin:0 50%;">Time</div>
<div class="a t" style="left:100.00px;top:657.04px;font-size:12px;line-height:16px;color:#2a2a2a;transform:scaleX(0.9547);transform-origin:0 50%;">Time Stretch</div>
<div class="a" style="left:170px;top:655px;width:7px;height:23px;background:#e4e4e4;border:1px solid #b4b4b4;box-sizing:border-box;border-radius:2px;"></div>
<svg class="a" style="left:171.5px;top:658px;" width="5" height="17" viewBox="0 0 5 17"><path d="M0.7 17V2.5a1.8 1.8 0 013.6 0V15" fill="none" stroke="#a8a8a8" stroke-width="1.3"/></svg>
<div class="a" style="left:178px;top:655px;width:97px;height:23px;background:#f0f0f0;border:1px solid #b0b0b0;box-sizing:border-box;"></div>
<div class="a" style="left:178.5px;top:672px;width:96px;height:1px;background:#c0c0c0;"></div>
<div class="a" style="left:224px;top:673px;width:10px;height:4px;background:#f59b23;"></div>
<div class="a" style="left:234px;top:673px;width:5px;height:4px;background:#101010;"></div>
<div class="a t" style="left:217.49px;top:657.04px;font-size:12px;line-height:16px;color:#101010;transform:scaleX(0.9000);transform-origin:0 50%;">144</div>
<div class="a t" style="left:51.50px;top:685.04px;font-size:12px;line-height:16px;color:#2a2a2a;transform:scaleX(0.9720);transform-origin:0 50%;">Time Stretch Random</div>
<div class="a" style="left:170px;top:683px;width:7px;height:23px;background:#e4e4e4;border:1px solid #b4b4b4;box-sizing:border-box;border-radius:2px;"></div>
<svg class="a" style="left:171.5px;top:686px;" width="5" height="17" viewBox="0 0 5 17"><path d="M0.7 17V2.5a1.8 1.8 0 013.6 0V15" fill="none" stroke="#a8a8a8" stroke-width="1.3"/></svg>
<div class="a" style="left:178px;top:683px;width:97px;height:23px;background:#f0f0f0;border:1px solid #b0b0b0;box-sizing:border-box;"></div>
<div class="a" style="left:178.5px;top:700px;width:96px;height:1px;background:#c0c0c0;"></div>
<div class="a" style="left:179px;top:701px;width:38px;height:4px;background:#f59b23;"></div>
<div class="a" style="left:217px;top:701px;width:5px;height:4px;background:#101010;"></div>
<div class="a t" style="left:220.50px;top:685.04px;font-size:12px;line-height:16px;color:#101010;transform:scaleX(0.9000);transform-origin:0 50%;">84</div>
<div class="a" style="left:33px;top:720px;width:252px;height:64px;border:1px solid #b0b0b0;box-sizing:border-box;border-radius:5px;"></div>
<div class="a" style="left:43.5px;top:713px;width:30.5px;height:14px;background:#dcdcdc;"></div>
<div class="a t" style="left:45.50px;top:713.04px;font-size:12px;line-height:16px;color:#2a2a2a;transform:scaleX(0.9936);transform-origin:0 50%;">Pitch</div>
<div class="a t" style="left:111.50px;top:729.04px;font-size:12px;line-height:16px;color:#2a2a2a;transform:scaleX(0.9815);transform-origin:0 50%;">Pitch Shift</div>
<div class="a" style="left:170px;top:727px;width:7px;height:23px;background:#e4e4e4;border:1px solid #b4b4b4;box-sizing:border-box;border-radius:2px;"></div>
<svg class="a" style="left:171.5px;top:730px;" width="5" height="17" viewBox="0 0 5 17"><path d="M0.7 17V2.5a1.8 1.8 0 013.6 0V15" fill="none" stroke="#a8a8a8" stroke-width="1.3"/></svg>
<div class="a" style="left:178px;top:727px;width:97px;height:23px;background:#f0f0f0;border:1px solid #b0b0b0;box-sizing:border-box;"></div>
<div class="a" style="left:178.5px;top:744px;width:96px;height:1px;background:#c0c0c0;"></div>
<div class="a" style="left:224px;top:745px;width:12px;height:4px;background:#f59b23;"></div>
<div class="a" style="left:236px;top:745px;width:5px;height:4px;background:#101010;"></div>
<div class="a t" style="left:214.49px;top:729.04px;font-size:12px;line-height:16px;color:#101010;transform:scaleX(0.9000);transform-origin:0 50%;">1200</div>
<div class="a t" style="left:62.50px;top:757.04px;font-size:12px;line-height:16px;color:#2a2a2a;transform:scaleX(0.9836);transform-origin:0 50%;">Pitch Shift Random</div>
<div class="a" style="left:170px;top:755px;width:7px;height:23px;background:#e4e4e4;border:1px solid #b4b4b4;box-sizing:border-box;border-radius:2px;"></div>
<svg class="a" style="left:171.5px;top:758px;" width="5" height="17" viewBox="0 0 5 17"><path d="M0.7 17V2.5a1.8 1.8 0 013.6 0V15" fill="none" stroke="#a8a8a8" stroke-width="1.3"/></svg>
<div class="a" style="left:178px;top:755px;width:97px;height:23px;background:#f0f0f0;border:1px solid #b0b0b0;box-sizing:border-box;"></div>
<div class="a" style="left:178.5px;top:772px;width:96px;height:1px;background:#c0c0c0;"></div>
<div class="a" style="left:179px;top:773px;width:57px;height:4px;background:#f59b23;"></div>
<div class="a" style="left:236px;top:773px;width:5px;height:4px;background:#101010;"></div>
<div class="a t" style="left:214.49px;top:757.04px;font-size:12px;line-height:16px;color:#101010;transform:scaleX(0.9000);transform-origin:0 50%;">3000</div>
<div class="a" style="left:294px;top:647px;width:236px;height:97px;border:1px solid #b0b0b0;box-sizing:border-box;border-radius:5px;"></div>
<div class="a" style="left:304.5px;top:640px;width:42px;height:14px;background:#dcdcdc;"></div>
<div class="a t" style="left:306.50px;top:640.04px;font-size:12px;line-height:16px;color:#2a2a2a;transform:scaleX(1.0176);transform-origin:0 50%;">Quality</div>
<div class="a t" style="left:332.50px;top:657.04px;font-size:12px;line-height:16px;color:#2a2a2a;transform:scaleX(0.9617);transform-origin:0 50%;">Window Size</div>
<div class="a" style="left:404px;top:655px;width:117px;height:23px;background:#f0f0f0;border:1px solid #b0b0b0;box-sizing:border-box;"></div>
<div class="a" style="left:404.5px;top:672px;width:116px;height:1px;background:#c0c0c0;"></div>
<div class="a" style="left:405px;top:673px;width:24.4px;height:4px;background:#f59b23;"></div>
<div class="a" style="left:429.4px;top:673px;width:5px;height:4px;background:#101010;"></div>
<div class="a t" style="left:450.49px;top:657.04px;font-size:12px;line-height:16px;color:#101010;transform:scaleX(0.9000);transform-origin:0 50%;">2048</div>
<div class="a t" style="left:328.20px;top:685.04px;font-size:12px;line-height:16px;color:#2a2a2a;transform:scaleX(0.9952);transform-origin:0 50%;">Stretch Mode</div>
<div class="a" style="left:404px;top:683px;width:117px;height:23px;background:#f0f0f0;border:1px solid #b0b0b0;box-sizing:border-box;"></div>
<div class="a t" style="left:412.80px;top:687.04px;font-size:12px;line-height:16px;color:#101010;transform:scaleX(0.9136);transform-origin:0 50%;">Transient Pres...</div>
<svg class="a" style="left:503.5px;top:692px;" width="9" height="5" viewBox="0 0 9 5"><path d="M0 0h9L4.500 4.500z" fill="#6a6a6a"/></svg>
<div class="a t" style="left:331.20px;top:713.04px;font-size:12px;line-height:16px;color:#2a2a2a;transform:scaleX(0.9804);transform-origin:0 50%;">Quality Level</div>
<div class="a" style="left:404px;top:714px;width:117px;height:23px;background:#f0f0f0;border:1px solid #b0b0b0;box-sizing:border-box;"></div>
<div class="a" style="left:404.5px;top:731px;width:116px;height:1px;background:#c0c0c0;"></div>
<div class="a" style="left:405px;top:732px;width:63px;height:4px;background:#f59b23;"></div>
<div class="a" style="left:468px;top:732px;width:5px;height:4px;background:#101010;"></div>
<div class="a t" style="left:456.50px;top:716.04px;font-size:12px;line-height:16px;color:#101010;transform:scaleX(0.9000);transform-origin:0 50%;">57</div>
<div class="a" style="left:0;top:0;width:761px;height:889px;overflow:hidden">
<div class="a" style="left:539px;top:647px;width:240px;height:67px;border:1px solid #b0b0b0;box-sizing:border-box;border-radius:5px;"></div>
<div class="a" style="left:549.5px;top:640px;width:42px;height:14px;background:#dcdcdc;"></div>
<div class="a t" style="left:551.50px;top:640.04px;font-size:12px;line-height:16px;color:#2a2a2a;transform:scaleX(1.0556);transform-origin:0 50%;">Output</div>
<div class="a t" style="left:595.50px;top:657.04px;font-size:12px;line-height:16px;color:#2a2a2a;transform:scaleX(0.9942);transform-origin:0 50%;">Output Gain</div>
<div class="a" style="left:665px;top:655px;width:7px;height:23px;background:#e4e4e4;border:1px solid #b4b4b4;box-sizing:border-box;border-radius:2px;"></div>
<svg class="a" style="left:666.5px;top:658px;" width="5" height="17" viewBox="0 0 5 17"><path d="M0.7 17V2.5a1.8 1.8 0 013.6 0V15" fill="none" stroke="#a8a8a8" stroke-width="1.3"/></svg>
<div class="a" style="left:673px;top:655px;width:7px;height:23px;background:#e4e4e4;border:1px solid #b4b4b4;box-sizing:border-box;border-radius:2px;"></div>
<svg class="a" style="left:675.5px;top:661px;" width="2" height="12" viewBox="0 0 2 12"><path d="M0 1h2M0 5h2M0 9h2" stroke="#a8a8a8" stroke-width="1"/></svg>
<div class="a" style="left:681px;top:655px;width:100px;height:23px;background:#f0f0f0;border:1px solid #b0b0b0;box-sizing:border-box;"></div>
<div class="a" style="left:681.5px;top:672px;width:99px;height:1px;background:#c0c0c0;"></div>
<div class="a" style="left:716px;top:673px;width:18px;height:4px;background:#f59b23;"></div>
<div class="a" style="left:711px;top:673px;width:5px;height:4px;background:#101010;"></div>
<div class="a t" style="left:727.20px;top:657.04px;font-size:12px;line-height:16px;color:#101010;transform:scaleX(0.9000);transform-origin:0 50%;">-2</div>
<div class="a t" style="left:567.20px;top:684.04px;font-size:12px;line-height:16px;color:#2a2a2a;transform:scaleX(0.9446);transform-origin:0 50%;">Stereo Processing</div>
<div class="a" style="left:665px;top:683px;width:110px;height:23px;background:#f0f0f0;border:1px solid #b0b0b0;box-sizing:border-box;"></div>
<div class="a t" style="left:673.60px;top:687.04px;font-size:12px;line-height:16px;color:#101010;transform:scaleX(0.9816);transform-origin:0 50%;">Left Right</div>
</div>
<div class="a t" style="left:29.30px;top:840.04px;font-size:12px;line-height:16px;color:#3a3a3a;transform:scaleX(0.8864);transform-origin:0 50%;">CONTENTS</div>
<div class="a t" style="left:129.00px;top:840.04px;font-size:12px;line-height:16px;color:#3a3a3a;transform:scaleX(0.8769);transform-origin:0 50%;">COMPRESSOR</div>
<div class="a t" style="left:246.00px;top:840.04px;font-size:12px;line-height:16px;color:#3a3a3a;transform:scaleX(0.8629);transform-origin:0 50%;">TIME STRETCH</div>
<div class="a" style="left:246px;top:859.5px;width:77px;height:2px;background:#2a2a2a;"></div>
<svg class="a" style="left:729px;top:844px;" width="14" height="14" viewBox="0 0 14 14"><g stroke="#2a2a2a" stroke-width="1.4" fill="none"><path d="M1 1l4 4M13 1l-4 4M1 13l4-4M13 13l-4-4"/></g><path d="M0 0h4.5L0 4.5zM14 0H9.5L14 4.5zM0 14h4.5L0 9.5zM14 14H9.5L14 9.5z" fill="#2a2a2a"/></svg>
<svg class="a" style="left:753px;top:843.5px;" width="15" height="15" viewBox="0 0 15 15"><path d="M6 2.500H0.800v11.700h11.700V9" fill="none" stroke="#1e1e1e" stroke-width="1.300"/><path d="M6.500 8.500L13 2" stroke="#1e1e1e" stroke-width="2" fill="none"/><path d="M8 0.500h6.500V7z" fill="#1e1e1e"/></svg>
<div class="a" style="left:777px;top:52px;width:2.2px;height:812px;background:#fafafa;"></div>
<div class="a" style="left:779.2px;top:52px;width:1.8px;height:812px;background:#9c9c9c;"></div>
<div class="a" style="left:785px;top:52px;width:392px;height:812px;border:1px solid #9c9c9c;box-sizing:border-box;"></div>
<div class="a" style="left:793px;top:60px;width:213px;height:23px;background:#eeeeee;border:1px solid #b0b0b0;box-sizing:border-box;"></div>
<div class="a t" style="left:798.50px;top:64.04px;font-size:12px;line-height:16px;color:#101010;transform:scaleX(0.8436);transform-origin:0 50%;">Bass</div>
<div class="a" style="left:1009px;top:60px;width:26px;height:22.6px;background:#8cb41e;"></div>
<svg class="a" style="left:1014.5px;top:64.5px;" width="15" height="14" viewBox="0 0 15 14"><path d="M7.5 0.3C3.4 0.3 0.3 3.3 0.3 7s3.1 6.7 7.2 6.7c1 0 1.5-.6 1.5-1.3 0-.9-.8-1.2-.8-2.1 0-.8.7-1.4 1.6-1.4H11.600c1.800 0 3.100-1.300 3.100-3.100C14.700 2.700 11.500.3 7.500.3z" fill="#1e1e1e"/><circle cx="3.400" cy="7" r="1.150" fill="#8cb41e"/><circle cx="5.300" cy="3.800" r="1.150" fill="#8cb41e"/><circle cx="9" cy="3.300" r="1.150" fill="#8cb41e"/><circle cx="11.800" cy="5.600" r="1.150" fill="#8cb41e"/></svg>
<svg class="a" style="left:1029px;top:76.6px;" width="6" height="6" viewBox="0 0 6 6"><path d="M6 0v6H0z" fill="#f07818"/></svg>
<div class="a" style="left:1039px;top:60px;width:25px;height:23px;background:#ececec;border:1px solid #a4a4a4;box-sizing:border-box;border-radius:3px;"></div>
<div class="a t" style="left:1046.40px;top:63.04px;font-size:12px;line-height:16px;color:#1e1e1e;transform:scaleX(0.9700);transform-origin:0 50%;">M</div>
<div class="a" style="left:1066px;top:60px;width:24px;height:23px;background:#ececec;border:1px solid #a4a4a4;box-sizing:border-box;border-radius:3px;"></div>
<div class="a t" style="left:1073.87px;top:63.04px;font-size:12px;line-height:16px;color:#1e1e1e;transform:scaleX(0.9700);transform-origin:0 50%;">S</div>
<div class="a" style="left:1092px;top:60px;width:61px;height:23px;background:#ececec;border:1px solid #a4a4a4;box-sizing:border-box;border-radius:3px;"></div>
<svg class="a" style="left:1097.5px;top:65px;" width="14" height="13" viewBox="0 0 14 13"><g fill="#6a6a6a"><circle cx="2.800" cy="6.500" r="2.500"/><rect x="10" y="0.200" width="3.200" height="3.200"/><rect x="10" y="9.800" width="3.200" height="3.200"/></g><path d="M11.500 1.800L4 6.500l7.500 4.700" fill="none" stroke="#6a6a6a" stroke-width="1.100"/></svg>
<div class="a t" style="left:1129.76px;top:64.04px;font-size:12px;line-height:16px;color:#1e1e1e;transform:scaleX(0.9700);transform-origin:0 50%;">0</div>
<div class="a" style="left:793px;top:88px;width:228px;height:25px;background:#eeeeee;border:1px solid #b0b0b0;box-sizing:border-box;"></div>
<div class="a t" style="left:800.25px;top:93.04px;font-size:12px;line-height:16px;color:#a8a8a8;transform:scaleX(0.8996);transform-origin:0 50%;font-style:italic;">Search</div>
<svg class="a" style="left:1004px;top:94.5px;" width="12" height="12" viewBox="0 0 12 12"><circle cx="4.500" cy="4.500" r="3.200" fill="none" stroke="#9a9a9a" stroke-width="1.400"/><path d="M7 7l4 4" stroke="#9a9a9a" stroke-width="2"/></svg>
<div class="a" style="left:1025px;top:88px;width:65px;height:25px;background:#ececec;border:1px solid #a4a4a4;box-sizing:border-box;border-radius:3px;"></div>
<div class="a t" style="left:1033.50px;top:92.04px;font-size:12px;line-height:16px;color:#1e1e1e;transform:scaleX(1.0582);transform-origin:0 50%;">Modified</div>
<div class="a" style="left:1093px;top:88px;width:28px;height:25px;background:#ececec;border:1px solid #a4a4a4;box-sizing:border-box;border-radius:3px;"></div>
<svg class="a" style="left:1098px;top:94px;" width="16" height="11" viewBox="0 0 16 11"><path d="M0.300 5.500C2.500 1.800 5.200 0.400 8 0.400S13.500 1.800 15.700 5.500C13.500 9.200 10.800 10.600 8 10.600S2.500 9.200 0.300 5.500z" fill="#2a2a2a"/><circle cx="8" cy="5.500" r="3.400" fill="#ececec"/><circle cx="8" cy="5.500" r="2" fill="#2a2a2a"/></svg>
<svg class="a" style="left:1111.8px;top:107px;" width="3.6" height="2.4" viewBox="0 0 3.6 2.4"><path d="M0 0h3.600L1.800 2.400z" fill="#2a2a2a"/></svg>
<div class="a" style="left:1125px;top:88px;width:28px;height:25px;background:#ececec;border:1px solid #a4a4a4;box-sizing:border-box;border-radius:3px;"></div>
<svg class="a" style="left:1136.4px;top:93.2px;" width="4" height="15" viewBox="0 0 4 15"><circle cx="2" cy="2" r="1.500" fill="#2a2a2a"/><circle cx="2" cy="6.400" r="1.500" fill="#2a2a2a"/><circle cx="2" cy="11" r="1.500" fill="#2a2a2a"/></svg>
<svg class="a" style="left:1143.7px;top:107px;" width="3.6" height="2.4" viewBox="0 0 3.6 2.4"><path d="M0 0h3.600L1.800 2.400z" fill="#2a2a2a"/></svg>
<div class="a" style="left:793px;top:116px;width:96px;height:26px;background:#84c6fc;border:1px solid #7a98b4;box-sizing:border-box;border-radius:1.5px;"></div>
<div class="a" style="left:795px;top:118.4px;width:3px;height:21.5px;background:#f5a623;"></div>
<div class="a t" style="left:813.40px;top:121.04px;font-size:12px;line-height:16px;color:#101010;transform:scaleX(0.9623);transform-origin:0 50%;">Music Track</div>
<div class="a" style="left:890px;top:116px;width:75px;height:26px;background:#ececec;border:1px solid #a8a8a8;box-sizing:border-box;border-radius:1.5px;"></div>
<div class="a" style="left:892.4px;top:118.4px;width:3px;height:21.5px;background:#f5a623;"></div>
<div class="a t" style="left:910.75px;top:121.04px;font-size:12px;line-height:16px;color:#101010;transform:scaleX(0.9370);transform-origin:0 50%;">General</div>
<div class="a" style="left:966px;top:116px;width:76px;height:26px;background:#ececec;border:1px solid #a8a8a8;box-sizing:border-box;border-radius:1.5px;"></div>
<div class="a" style="left:968.4px;top:118.4px;width:3px;height:21.5px;background:#f8dcb4;"></div>
<div class="a t" style="left:986.15px;top:121.04px;font-size:12px;line-height:16px;color:#101010;transform:scaleX(1.0276);transform-origin:0 50%;">Routing</div>
<div class="a" style="left:1043px;top:116px;width:94px;height:26px;background:#ececec;border:1px solid #a8a8a8;box-sizing:border-box;border-radius:1.5px;"></div>
<div class="a" style="left:1045.4px;top:118.4px;width:3px;height:21.5px;background:#f8dcb4;"></div>
<div class="a t" style="left:1063.25px;top:121.04px;font-size:12px;line-height:16px;color:#101010;transform:scaleX(0.9884);transform-origin:0 50%;">Conversion</div>
<div class="a" style="left:793px;top:145px;width:78px;height:25px;background:#ececec;border:1px solid #a8a8a8;box-sizing:border-box;border-radius:1.5px;"></div>
<div class="a" style="left:795px;top:146.6px;width:3px;height:21.5px;background:#f5a623;"></div>
<div class="a t" style="left:817.70px;top:149.04px;font-size:12px;line-height:16px;color:#101010;transform:scaleX(0.9605);transform-origin:0 50%;">Effects</div>
<div class="a" style="left:872px;top:145px;width:93px;height:25px;background:#ececec;border:1px solid #a8a8a8;box-sizing:border-box;border-radius:1.5px;"></div>
<div class="a" style="left:874.4px;top:146.6px;width:3px;height:21.5px;background:#e0e0e0;"></div>
<div class="a t" style="left:896.75px;top:149.04px;font-size:12px;line-height:16px;color:#101010;transform:scaleX(0.9997);transform-origin:0 50%;">Metadata</div>
<div class="a" style="left:966px;top:145px;width:103px;height:25px;background:#ececec;border:1px solid #a8a8a8;box-sizing:border-box;border-radius:1.5px;"></div>
<div class="a" style="left:968.4px;top:146.6px;width:3px;height:21.5px;background:#e0e0e0;"></div>
<div class="a t" style="left:990.70px;top:149.04px;font-size:12px;line-height:16px;color:#101010;transform:scaleX(1.0221);transform-origin:0 50%;">Positioning</div>
<div class="a" style="left:1070px;top:145px;width:67px;height:25px;background:#84c6fc;border:1px solid #7a98b4;box-sizing:border-box;border-radius:1.5px;"></div>
<div class="a" style="left:1072.4px;top:146.6px;width:3px;height:21.5px;background:#f5a623;"></div>
<div class="a t" style="left:1094.75px;top:149.04px;font-size:12px;line-height:16px;color:#101010;transform:scaleX(0.9225);transform-origin:0 50%;">HDR</div>
<div class="a" style="left:793px;top:173px;width:83px;height:25px;background:#84c6fc;border:1px solid #7a98b4;box-sizing:border-box;border-radius:1.5px;"></div>
<div class="a" style="left:795px;top:174.6px;width:3px;height:21.5px;background:#f5a623;"></div>
<div class="a t" style="left:824.75px;top:177.04px;font-size:12px;line-height:16px;color:#101010;transform:scaleX(1.0068);transform-origin:0 50%;">MIDI</div>
<div class="a" style="left:878px;top:173px;width:109px;height:25px;background:#ececec;border:1px solid #a8a8a8;box-sizing:border-box;border-radius:1.5px;"></div>
<div class="a" style="left:879.8px;top:174.6px;width:3px;height:21.5px;background:#e0e0e0;"></div>
<div class="a t" style="left:908.90px;top:177.04px;font-size:12px;line-height:16px;color:#101010;transform:scaleX(0.9933);transform-origin:0 50%;">Advanced</div>
<div class="a" style="left:988px;top:173px;width:84px;height:25px;background:#ececec;border:1px solid #a8a8a8;box-sizing:border-box;border-radius:1.5px;"></div>
<div class="a" style="left:990.2px;top:174.6px;width:3px;height:21.5px;background:#e0e0e0;"></div>
<div class="a t" style="left:1020.05px;top:177.04px;font-size:12px;line-height:16px;color:#101010;transform:scaleX(0.8320);transform-origin:0 50%;">RTPC</div>
<div class="a" style="left:1074px;top:173px;width:63px;height:25px;background:#ececec;border:1px solid #a8a8a8;box-sizing:border-box;border-radius:1.5px;"></div>
<div class="a t" style="left:1098.45px;top:177.04px;font-size:12px;line-height:16px;color:#101010;transform:scaleX(1.0492);transform-origin:0 50%;">All</div>
<div class="a" style="left:1139px;top:116px;width:14px;height:740px;background:#e2e2e2;border:1px solid #b4b4b4;box-sizing:border-box;"></div>
<svg class="a" style="left:1142px;top:121px;" width="8" height="7" viewBox="0 0 8 7"><path d="M4 0L8 7H0z" fill="#8c8c8c"/></svg>
<svg class="a" style="left:1142px;top:844.5px;" width="8" height="7" viewBox="0 0 8 7"><path d="M4 7L8 0H0z" fill="#8c8c8c"/></svg>
<div class="a" style="left:793.5px;top:200px;width:344.5px;height:656px;background:#eeeeee;"></div>
<div class="a" style="left:793.5px;top:200px;width:344.5px;height:27.3px;background:#c8c8c8;"></div>
<div class="a" style="left:793.5px;top:200px;width:3.5px;height:27.3px;background:#d2d2d2;"></div>
<div class="a" style="left:793.5px;top:200px;width:1px;height:27.3px;background:#b0b0b0;"></div>
<svg class="a" style="left:803.5px;top:210.45px;" width="12" height="8" viewBox="0 0 12 8"><path d="M0.600 0.700l5.400 5.600 5.400-5.600" fill="none" stroke="#3a3a3a" stroke-width="1.100"/></svg>
<div class="a t" style="left:830.00px;top:206.04px;font-size:12px;line-height:16px;color:#101010;transform:scaleX(0.9536);transform-origin:0 50%;font-weight:bold;">Music Track</div>
<div class="a" style="left:793.5px;top:227.3px;width:3.5px;height:26px;background:#d2d2d2;"></div>
<div class="a" style="left:793.5px;top:227.3px;width:1px;height:26px;background:#b0b0b0;"></div>
<div class="a" style="left:1042px;top:227.3px;width:6px;height:25px;background:#dedede;"></div>
<div class="a t" style="left:826.80px;top:233.04px;font-size:12px;line-height:16px;color:#1a1a1a;transform:scaleX(0.9555);transform-origin:0 50%;">Music Track Type</div>
<div class="a" style="left:1052px;top:229px;width:81px;height:23px;background:#f0f0f0;border:1px solid #b0b0b0;box-sizing:border-box;"></div>
<div class="a t" style="left:1061.00px;top:233.04px;font-size:12px;line-height:16px;color:#101010;transform:scaleX(1.0339);transform-origin:0 50%;">Normal</div>
<svg class="a" style="left:1115.5px;top:238px;" width="9" height="5" viewBox="0 0 9 5"><path d="M0 0h9L4.500 4.500z" fill="#6a6a6a"/></svg>
<div class="a" style="left:793.5px;top:253px;width:344.5px;height:29px;background:#d8d8d8;"></div>
<div class="a" style="left:793.5px;top:253px;width:3.5px;height:29px;background:#d2d2d2;"></div>
<div class="a" style="left:793.5px;top:253px;width:1px;height:29px;background:#b0b0b0;"></div>
<svg class="a" style="left:803.5px;top:264.3px;" width="12" height="8" viewBox="0 0 12 8"><path d="M0.600 0.700l5.400 5.600 5.400-5.600" fill="none" stroke="#3a3a3a" stroke-width="1.100"/></svg>
<div class="a t" style="left:830.00px;top:260.04px;font-size:12px;line-height:16px;color:#101010;transform:scaleX(0.9697);transform-origin:0 50%;">Stream</div>
<div class="a" style="left:793.5px;top:282px;width:3.5px;height:26px;background:#f5a623;"></div>
<div class="a" style="left:1042px;top:282px;width:6px;height:25px;background:#dedede;"></div>
<div class="a" style="left:797px;top:307px;width:341px;height:1px;background:#dadada;"></div>
<div class="a t" style="left:826.80px;top:287.04px;font-size:12px;line-height:16px;color:#1a1a1a;transform:scaleX(0.9235);transform-origin:0 50%;">Enable</div>
<div class="a" style="left:793.5px;top:308px;width:3.5px;height:26px;background:#f5a623;"></div>
<div class="a" style="left:1042px;top:308px;width:6px;height:25px;background:#dedede;"></div>
<div class="a" style="left:797px;top:333px;width:341px;height:1px;background:#dadada;"></div>
<div class="a t" style="left:826.80px;top:313.04px;font-size:12px;line-height:16px;color:#1a1a1a;transform:scaleX(1.0037);transform-origin:0 50%;">Non-Cachable</div>
<div class="a" style="left:793.5px;top:334px;width:3.5px;height:26px;background:#f5a623;"></div>
<div class="a" style="left:1042px;top:334px;width:6px;height:25px;background:#dedede;"></div>
<div class="a" style="left:797px;top:359px;width:341px;height:1px;background:#dadada;"></div>
<div class="a t" style="left:826.80px;top:339.04px;font-size:12px;line-height:16px;color:#1a1a1a;transform:scaleX(0.9641);transform-origin:0 50%;">Zero Latency</div>
<div class="a" style="left:793.5px;top:360px;width:3.5px;height:26px;background:#f5a623;"></div>
<div class="a" style="left:1042px;top:360px;width:6px;height:25px;background:#dedede;"></div>
<div class="a" style="left:797px;top:385px;width:341px;height:1px;background:#dadada;"></div>
<div class="a t" style="left:826.80px;top:365.04px;font-size:12px;line-height:16px;color:#1a1a1a;transform:scaleX(0.9820);transform-origin:0 50%;">Prefetch Length (ms)</div>
<div class="a" style="left:793.5px;top:386px;width:3.5px;height:26px;background:#f5a623;"></div>
<div class="a" style="left:1042px;top:386px;width:6px;height:25px;background:#dedede;"></div>
<div class="a" style="left:797px;top:411px;width:341px;height:1px;background:#dadada;"></div>
<div class="a t" style="left:826.80px;top:391.04px;font-size:12px;line-height:16px;color:#1a1a1a;transform:scaleX(0.9940);transform-origin:0 50%;">Look-ahead time (ms)</div>
<div class="a" style="left:1053px;top:283px;width:5px;height:23px;background:#e4e4e4;border:1px solid #b4b4b4;box-sizing:border-box;border-radius:2px;"></div>
<div class="a" style="left:1061px;top:289px;width:12px;height:12px;background:#3c3c3c;border:1px solid #2a2a2a;box-sizing:border-box;border-radius:1px;"></div>
<svg class="a" style="left:1061px;top:289px;" width="12" height="12" viewBox="0 0 12 12"><path d="M2.600 6.200l2.400 2.500L9.500 3.300" fill="none" stroke="#fff" stroke-width="1.900"/></svg>
<div class="a" style="left:1053px;top:309px;width:5px;height:23px;background:#e4e4e4;border:1px solid #b4b4b4;box-sizing:border-box;border-radius:2px;"></div>
<div class="a" style="left:1061px;top:315px;width:12px;height:12px;background:#3c3c3c;border:1px solid #2a2a2a;box-sizing:border-box;border-radius:1px;"></div>
<svg class="a" style="left:1061px;top:315px;" width="12" height="12" viewBox="0 0 12 12"><path d="M2.600 6.200l2.400 2.500L9.500 3.300" fill="none" stroke="#fff" stroke-width="1.900"/></svg>
<div class="a" style="left:1053px;top:335px;width:5px;height:23px;background:#e4e4e4;border:1px solid #b4b4b4;box-sizing:border-box;border-radius:2px;"></div>
<div class="a" style="left:1061px;top:341px;width:12px;height:12px;background:#3c3c3c;border:1px solid #2a2a2a;box-sizing:border-box;border-radius:1px;"></div>
<svg class="a" style="left:1061px;top:341px;" width="12" height="12" viewBox="0 0 12 12"><path d="M2.600 6.200l2.400 2.500L9.500 3.300" fill="none" stroke="#fff" stroke-width="1.900"/></svg>
<div class="a" style="left:1053px;top:361px;width:5px;height:23px;background:#e4e4e4;border:1px solid #b4b4b4;box-sizing:border-box;border-radius:2px;"></div>
<div class="a" style="left:1060px;top:361px;width:73px;height:23px;background:#f0f0f0;border:1px solid #b0b0b0;box-sizing:border-box;"></div>
<div class="a" style="left:1060.5px;top:378px;width:72px;height:1px;background:#c0c0c0;"></div>
<div class="a" style="left:1061px;top:379px;width:16px;height:4px;background:#f59b23;"></div>
<div class="a" style="left:1077px;top:379px;width:5px;height:4px;background:#101010;"></div>
<div class="a t" style="left:1083.99px;top:363.04px;font-size:12px;line-height:16px;color:#101010;transform:scaleX(0.9000);transform-origin:0 50%;">2444</div>
<div class="a" style="left:1053px;top:387px;width:5px;height:23px;background:#e4e4e4;border:1px solid #b4b4b4;box-sizing:border-box;border-radius:2px;"></div>
<div class="a" style="left:1060px;top:387px;width:73px;height:23px;background:#f0f0f0;border:1px solid #b0b0b0;box-sizing:border-box;"></div>
<div class="a" style="left:1060.5px;top:404px;width:72px;height:1px;background:#c0c0c0;"></div>
<div class="a" style="left:1061px;top:405px;width:16px;height:4px;background:#f59b23;"></div>
<div class="a" style="left:1077px;top:405px;width:5px;height:4px;background:#101010;"></div>
<div class="a t" style="left:1083.99px;top:389.04px;font-size:12px;line-height:16px;color:#101010;transform:scaleX(0.9000);transform-origin:0 50%;">2448</div>
<div class="a" style="left:793.5px;top:411.5px;width:344.5px;height:28px;background:#c8c8c8;"></div>
<div class="a" style="left:793.5px;top:411.5px;width:3.5px;height:28px;background:#d2d2d2;"></div>
<div class="a" style="left:793.5px;top:411.5px;width:1px;height:28px;background:#b0b0b0;"></div>
<svg class="a" style="left:803.5px;top:422.3px;" width="12" height="8" viewBox="0 0 12 8"><path d="M0.600 0.700l5.400 5.600 5.400-5.600" fill="none" stroke="#3a3a3a" stroke-width="1.100"/></svg>
<div class="a t" style="left:830.00px;top:418.04px;font-size:12px;line-height:16px;color:#101010;transform:scaleX(0.9994);transform-origin:0 50%;font-weight:bold;">HDR</div>
<div class="a" style="left:793.5px;top:439.5px;width:344.5px;height:28.5px;background:#d8d8d8;"></div>
<div class="a" style="left:793.5px;top:439.5px;width:3.5px;height:28.5px;background:#d2d2d2;"></div>
<div class="a" style="left:793.5px;top:439.5px;width:1px;height:28.5px;background:#b0b0b0;"></div>
<svg class="a" style="left:803.5px;top:450.55px;" width="12" height="8" viewBox="0 0 12 8"><path d="M0.600 0.700l5.400 5.600 5.400-5.600" fill="none" stroke="#3a3a3a" stroke-width="1.100"/></svg>
<div class="a t" style="left:830.00px;top:446.04px;font-size:12px;line-height:16px;color:#101010;transform:scaleX(0.9522);transform-origin:0 50%;">Envelope Tracking</div>
<div class="a" style="left:793.5px;top:468px;width:3.5px;height:26px;background:#f5a623;"></div>
<div class="a" style="left:1042px;top:468px;width:6px;height:25px;background:#dedede;"></div>
<div class="a" style="left:797px;top:493px;width:341px;height:1px;background:#dadada;"></div>
<div class="a t" style="left:826.80px;top:473.04px;font-size:12px;line-height:16px;color:#1a1a1a;transform:scaleX(0.9624);transform-origin:0 50%;">Override Parent</div>
<div class="a" style="left:793.5px;top:494px;width:3.5px;height:26px;background:#f5a623;"></div>
<div class="a" style="left:1042px;top:494px;width:6px;height:25px;background:#dedede;"></div>
<div class="a" style="left:797px;top:519px;width:341px;height:1px;background:#dadada;"></div>
<div class="a t" style="left:826.80px;top:499.04px;font-size:12px;line-height:16px;color:#1a1a1a;transform:scaleX(0.9235);transform-origin:0 50%;">Enable</div>
<div class="a" style="left:793.5px;top:520px;width:3.5px;height:26px;background:#f5a623;"></div>
<div class="a" style="left:1042px;top:520px;width:6px;height:25px;background:#dedede;"></div>
<div class="a" style="left:797px;top:545px;width:341px;height:1px;background:#dadada;"></div>
<div class="a t" style="left:826.80px;top:525.04px;font-size:12px;line-height:16px;color:#1a1a1a;transform:scaleX(0.9719);transform-origin:0 50%;">Sensitivity</div>
<div class="a" style="left:793.5px;top:546px;width:3.5px;height:26px;background:#d2d2d2;"></div>
<div class="a" style="left:793.5px;top:546px;width:1px;height:26px;background:#b0b0b0;"></div>
<div class="a" style="left:1042px;top:546px;width:6px;height:25px;background:#dedede;"></div>
<div class="a" style="left:797px;top:571px;width:341px;height:1px;background:#dadada;"></div>
<div class="a t" style="left:826.80px;top:551.04px;font-size:12px;line-height:16px;color:#1a1a1a;transform:scaleX(0.9599);transform-origin:0 50%;">Active Range</div>
<div class="a" style="left:1054px;top:474px;width:12px;height:12px;background:#3c3c3c;border:1px solid #2a2a2a;box-sizing:border-box;border-radius:1px;"></div>
<svg class="a" style="left:1053.5px;top:474.5px;" width="12" height="12" viewBox="0 0 12 12"><path d="M2.600 6.200l2.400 2.500L9.500 3.300" fill="none" stroke="#fff" stroke-width="1.900"/></svg>
<div class="a" style="left:1054px;top:500px;width:12px;height:12px;background:#3c3c3c;border:1px solid #2a2a2a;box-sizing:border-box;border-radius:1px;"></div>
<svg class="a" style="left:1053.5px;top:500.5px;" width="12" height="12" viewBox="0 0 12 12"><path d="M2.600 6.200l2.400 2.500L9.500 3.300" fill="none" stroke="#fff" stroke-width="1.900"/></svg>
<div class="a" style="left:1053px;top:521px;width:80px;height:23px;background:#f0f0f0;border:1px solid #b0b0b0;box-sizing:border-box;"></div>
<div class="a" style="left:1053.5px;top:538px;width:79px;height:1px;background:#c0c0c0;"></div>
<div class="a" style="left:1054px;top:539px;width:55.3px;height:4px;background:#f59b23;"></div>
<div class="a" style="left:1109.3px;top:539px;width:5px;height:4px;background:#101010;"></div>
<div class="a t" style="left:1087.00px;top:523.04px;font-size:12px;line-height:16px;color:#101010;transform:scaleX(0.9000);transform-origin:0 50%;">75</div>
<div class="a" style="left:1053px;top:547px;width:5px;height:23px;background:#e4e4e4;border:1px solid #b4b4b4;box-sizing:border-box;border-radius:2px;"></div>
<div class="a" style="left:1060px;top:547px;width:7px;height:23px;background:#e4e4e4;border:1px solid #b4b4b4;box-sizing:border-box;border-radius:2px;"></div>
<svg class="a" style="left:1061.5px;top:550px;" width="5" height="17" viewBox="0 0 5 17"><path d="M0.7 17V2.5a1.8 1.8 0 013.6 0V15" fill="none" stroke="#a8a8a8" stroke-width="1.3"/></svg>
<div class="a" style="left:1068px;top:547px;width:65px;height:23px;background:#f0f0f0;border:1px solid #b0b0b0;box-sizing:border-box;"></div>
<div class="a" style="left:1068.5px;top:564px;width:64px;height:1px;background:#c0c0c0;"></div>
<div class="a" style="left:1069px;top:565px;width:29.3px;height:4px;background:#f59b23;"></div>
<div class="a" style="left:1098.3px;top:565px;width:5px;height:4px;background:#101010;"></div>
<div class="a t" style="left:1094.50px;top:549.04px;font-size:12px;line-height:16px;color:#101010;transform:scaleX(0.9000);transform-origin:0 50%;">12</div>
<div class="a" style="left:793.5px;top:571.5px;width:344.5px;height:28px;background:#c8c8c8;"></div>
<div class="a" style="left:793.5px;top:571.5px;width:3.5px;height:28px;background:#d2d2d2;"></div>
<div class="a" style="left:793.5px;top:571.5px;width:1px;height:28px;background:#b0b0b0;"></div>
<svg class="a" style="left:803.5px;top:582.3px;" width="12" height="8" viewBox="0 0 12 8"><path d="M0.600 0.700l5.400 5.600 5.400-5.600" fill="none" stroke="#3a3a3a" stroke-width="1.100"/></svg>
<div class="a t" style="left:830.00px;top:578.04px;font-size:12px;line-height:16px;color:#101010;transform:scaleX(1.0463);transform-origin:0 50%;font-weight:bold;">MIDI</div>
<div class="a" style="left:793.5px;top:599.5px;width:344.5px;height:28.5px;background:#d8d8d8;"></div>
<div class="a" style="left:793.5px;top:599.5px;width:3.5px;height:28.5px;background:#d2d2d2;"></div>
<div class="a" style="left:793.5px;top:599.5px;width:1px;height:28.5px;background:#b0b0b0;"></div>
<svg class="a" style="left:803.5px;top:610.55px;" width="12" height="8" viewBox="0 0 12 8"><path d="M0.600 0.700l5.400 5.600 5.400-5.600" fill="none" stroke="#3a3a3a" stroke-width="1.100"/></svg>
<div class="a t" style="left:830.00px;top:606.04px;font-size:12px;line-height:16px;color:#101010;transform:scaleX(0.9712);transform-origin:0 50%;">MIDI Target</div>
<div class="a" style="left:793.5px;top:628px;width:3.5px;height:26px;background:#f5a623;"></div>
<div class="a" style="left:1042px;top:628px;width:6px;height:25px;background:#dedede;"></div>
<div class="a" style="left:797px;top:653px;width:341px;height:1px;background:#dadada;"></div>
<div class="a t" style="left:826.80px;top:633.04px;font-size:12px;line-height:16px;color:#1a1a1a;transform:scaleX(0.9624);transform-origin:0 50%;">Override Parent</div>
<div class="a" style="left:1054px;top:634px;width:12px;height:12px;background:#3c3c3c;border:1px solid #2a2a2a;box-sizing:border-box;border-radius:1px;"></div>
<svg class="a" style="left:1053.5px;top:634.5px;" width="12" height="12" viewBox="0 0 12 12"><path d="M2.600 6.200l2.400 2.500L9.500 3.300" fill="none" stroke="#fff" stroke-width="1.900"/></svg>
<div class="a" style="left:793.5px;top:654px;width:3.5px;height:26px;background:#f5a623;"></div>
<div class="a" style="left:797px;top:679px;width:341px;height:1px;background:#dadada;"></div>
<div class="a" style="left:830px;top:656px;width:284px;height:22px;background:#eeeeee;border:1px solid #b4b4b4;box-sizing:border-box;border-radius:5.5px;"></div>
<svg class="a" style="left:836.5px;top:661px;" width="13" height="12" viewBox="0 0 13 12"><path d="M0.500 2.500C5 2.500 7 9.500 12 9.500M0.500 9.500C5 9.500 7 2.500 12 2.500M1 6h11" fill="none" stroke="#1e1e1e" stroke-width="1.200"/><path d="M3.500 2.500a2.500 3.500 0 010 7" fill="none" stroke="#1e1e1e" stroke-width="1.200"/></svg>
<div class="a" style="left:854px;top:660px;width:6px;height:14px;background:#a4a4a4;border:1px solid #989898;box-sizing:border-box;"></div>
<div class="a t" style="left:864.50px;top:659.04px;font-size:12px;line-height:16px;color:#1a1a1a;transform:scaleX(0.9601);transform-origin:0 50%;">Cluster</div>
<svg class="a" style="left:1119px;top:661px;" width="14" height="13" viewBox="0 0 14 13"><path d="M0.500 11V1.500h4l1 1.500h6.500v8z" fill="#3a3a3a"/><path d="M10.500 11.500h3.500L12.200 13.500z" fill="#2a2a2a"/></svg>
<div class="a" style="left:793.5px;top:679.5px;width:344.5px;height:28.5px;background:#d8d8d8;"></div>
<div class="a" style="left:793.5px;top:679.5px;width:3.5px;height:28.5px;background:#d2d2d2;"></div>
<div class="a" style="left:793.5px;top:679.5px;width:1px;height:28.5px;background:#b0b0b0;"></div>
<svg class="a" style="left:803.5px;top:690.55px;" width="12" height="8" viewBox="0 0 12 8"><path d="M0.600 0.700l5.400 5.600 5.400-5.600" fill="none" stroke="#3a3a3a" stroke-width="1.100"/></svg>
<div class="a t" style="left:830.00px;top:686.04px;font-size:12px;line-height:16px;color:#101010;transform:scaleX(0.9890);transform-origin:0 50%;">MIDI Clip Tempo</div>
<div class="a" style="left:793.5px;top:708px;width:3.5px;height:26px;background:#f5a623;"></div>
<div class="a" style="left:1042px;top:708px;width:6px;height:25px;background:#dedede;"></div>
<div class="a" style="left:797px;top:733px;width:341px;height:1px;background:#dadada;"></div>
<div class="a t" style="left:826.80px;top:713.04px;font-size:12px;line-height:16px;color:#1a1a1a;transform:scaleX(0.9624);transform-origin:0 50%;">Override Parent</div>
<div class="a" style="left:1054px;top:714px;width:12px;height:12px;background:#3c3c3c;border:1px solid #2a2a2a;box-sizing:border-box;border-radius:1px;"></div>
<svg class="a" style="left:1053.5px;top:714.5px;" width="12" height="12" viewBox="0 0 12 12"><path d="M2.600 6.200l2.400 2.500L9.500 3.300" fill="none" stroke="#fff" stroke-width="1.900"/></svg>
<div class="a" style="left:793.5px;top:734px;width:3.5px;height:26px;background:#f5a623;"></div>
<div class="a" style="left:1042px;top:734px;width:6px;height:25px;background:#dedede;"></div>
<div class="a" style="left:797px;top:759px;width:341px;height:1px;background:#dadada;"></div>
<div class="a t" style="left:826.80px;top:739.04px;font-size:12px;line-height:16px;color:#1a1a1a;transform:scaleX(0.9630);transform-origin:0 50%;">Tempo Source</div>
<div class="a" style="left:1053px;top:735px;width:80px;height:23px;background:#f0f0f0;border:1px solid #b0b0b0;box-sizing:border-box;"></div>
<div class="a t" style="left:1061.00px;top:739.04px;font-size:12px;line-height:16px;color:#101010;transform:scaleX(0.9305);transform-origin:0 50%;">File</div>
<svg class="a" style="left:1115.5px;top:744px;" width="9" height="5" viewBox="0 0 9 5"><path d="M0 0h9L4.500 4.500z" fill="#6a6a6a"/></svg>
<svg class="a" style="left:1163.5px;top:60px;" width="8" height="7" viewBox="0 0 8 7"><path d="M0 3.5L8 0v7z" fill="#6a6a6a"/></svg>
<div class="a t" style="left:1172.5px;top:74px;font-size:12px;line-height:16px;color:#4a4a4a;transform-origin:0 0;transform:rotate(90deg) scaleX(0.8289)">PROPERTY EDITOR</div>
<svg class="a" style="left:1161px;top:842px;" width="15" height="15" viewBox="0 0 15 15"><path d="M6 2.500H0.800v11.700h11.700V9" fill="none" stroke="#1e1e1e" stroke-width="1.300"/><path d="M6.500 8.500L13 2" stroke="#1e1e1e" stroke-width="2" fill="none"/><path d="M8 0.500h6.500V7z" fill="#1e1e1e"/></svg>
<div class="a" style="left:2px;top:0px;width:1191px;height:883px;border:4px solid #e030c0;box-sizing:border-box;filter:drop-shadow(1.8px 2.4px 1.8px rgba(0,0,0,0.6));"></div>
<svg class="a" style="left:0;top:0;filter:drop-shadow(1.8px 2.4px 1.8px rgba(0,0,0,0.6));" width="1297" height="889"><g fill="#00c040"><rect x="13" y="13" width="432" height="4"/><rect x="13" y="13" width="4" height="858"/><rect x="13" y="46.5" width="1170" height="4.7"/><rect x="1178.3" y="46.5" width="4.3" height="825"/><rect x="13" y="867" width="1170" height="4.1"/><rect x="62" y="13" width="4.2" height="38"/><rect x="184.2" y="13" width="4.2" height="38"/><rect x="340.7" y="13" width="4.2" height="38"/><rect x="440.9" y="13" width="4.3" height="38"/></g></svg>
<div class="a" style="left:1191px;top:214px;width:60px;height:4px;background:#e030c0;filter:drop-shadow(1.8px 2.4px 1.8px rgba(0,0,0,0.6));"></div>
<div class="a" style="left:1181px;top:444px;width:70px;height:4px;background:#00c040;filter:drop-shadow(1.8px 2.4px 1.8px rgba(0,0,0,0.6));"></div>
<div class="a t" style="left:1246.8px;top:191.9px;width:49.3px;height:49px;border-radius:25px;background:#0f9ed8;color:#fff;font-weight:bold;font-size:29px;line-height:51px;text-align:center">1</div>
<div class="a t" style="left:1246.8px;top:421.9px;width:49.3px;height:49px;border-radius:25px;background:#0f9ed8;color:#fff;font-weight:bold;font-size:29px;line-height:51px;text-align:center">2</div>
</body></html>
